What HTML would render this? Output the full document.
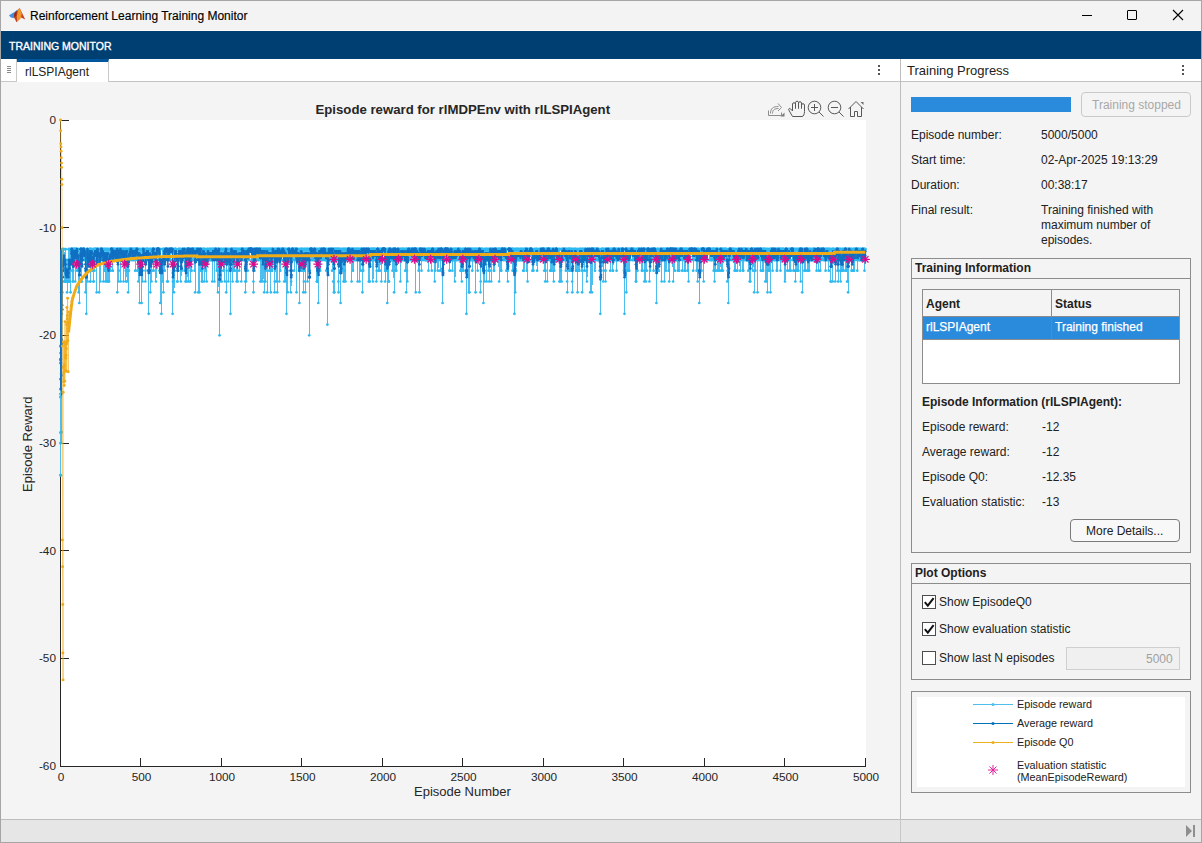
<!DOCTYPE html>
<html><head><meta charset="utf-8">
<style>
*{margin:0;padding:0;box-sizing:border-box}
html,body{width:1202px;height:843px;overflow:hidden;background:#f4f4f4;font-family:"Liberation Sans",sans-serif;color:#212121}
.a{position:absolute}
.t{position:absolute;white-space:nowrap;font-size:12px;line-height:14px}
.b{font-weight:bold}
.box{position:absolute;border:1px solid #8c8c8c}
.cb{position:absolute;width:14px;height:14px;border:1px solid #4d4d4d;background:#fff}
</style></head><body>
<!-- window frame -->
<div class="a" style="left:0;top:0;width:1202px;height:843px;border:1px solid #a6a6a6;background:#f4f4f4"></div>
<!-- title bar -->
<div class="a" style="left:1px;top:1px;width:1200px;height:29px;background:#f3f3f3"></div>
<div class="a" style="left:1px;top:30px;width:1200px;height:1px;background:#fbfbfb"></div>
<svg class="a" style="left:6px;top:4px" width="22" height="22" viewBox="0 0 22 22">
 <path d="M3 11.3 L8.5 8 L11.5 5.5 L9.5 11.5 L7.5 14.2 L4.5 13.2 Z" fill="#3f90e2"/>
 <path d="M8.3 9.6 L13.6 3.9 L16.2 9.2 L19.2 15.6 L15.2 13.6 L10.6 18.2 L8.2 13.8 Z" fill="#c4401e"/>
 <path d="M12 5.8 L13.6 3.9 L15.8 9.4 L15 13.8 L11.2 17.6 L10.8 12.5 Z" fill="#f0982c"/>
 <path d="M8.3 9.6 L11 7 L10 12 L8.2 13.8 Z" fill="#8e2a1a"/>
</svg>
<div class="t" style="left:30px;top:9px;color:#000;-webkit-text-stroke:0.15px #000">Reinforcement Learning Training Monitor</div>
<!-- window controls -->
<div class="a" style="left:1082px;top:15px;width:10px;height:1px;background:#000"></div>
<div class="a" style="left:1127px;top:10px;width:10px;height:10px;border:1px solid #000;border-radius:1px"></div>
<svg class="a" style="left:1172px;top:9px" width="12" height="12" viewBox="0 0 12 12"><path d="M1 1L11 11M11 1L1 11" stroke="#000" stroke-width="1.1"/></svg>
<!-- toolstrip band -->
<div class="a" style="left:1px;top:31px;width:1200px;height:28px;background:#003f72"></div>
<div class="t" style="left:9px;top:39px;font-size:10.5px;color:#fff;-webkit-text-stroke:0.35px #fff">TRAINING MONITOR</div>

<!-- LEFT DOCUMENT AREA -->
<div class="a" style="left:1px;top:59px;width:899px;height:23px;background:#fff;border-bottom:1px solid #c4c4c4"></div>
<div class="a" style="left:1px;top:59px;width:16px;height:23px;background:#fff;border-right:1px solid #c8c8c8;border-bottom:1px solid #c8c8c8"></div>
<div class="a" style="left:7px;top:66px;width:4px;height:1px;background:#8a8a8a;box-shadow:0 2px 0 #8a8a8a,0 4px 0 #8a8a8a,0 6px 0 #8a8a8a"></div>
<div class="a" style="left:17px;top:59px;width:92px;height:23px;background:#fff;border-top:3px solid #00569c;border-right:1px solid #c8c8c8"></div>
<div class="t" style="left:25px;top:65px;color:#222">rlLSPIAgent</div>
<div class="a" style="left:878px;top:65px;width:2px;height:2px;background:#555;box-shadow:0 4px 0 #555,0 8px 0 #555"></div>

<!-- divider between left & right -->
<div class="a" style="left:900px;top:59px;width:1px;height:783px;background:#bdbdbd"></div>

<!-- RIGHT PANEL -->
<div class="a" style="left:901px;top:59px;width:300px;height:23px;background:#fff;border-bottom:1px solid #c4c4c4"></div>
<div class="t" style="left:907px;top:64px;font-size:13px;color:#222">Training Progress</div>
<div class="a" style="left:1182px;top:65px;width:2px;height:2px;background:#555;box-shadow:0 4px 0 #555,0 8px 0 #555"></div>

<div class="a" style="left:911px;top:97px;width:160px;height:15px;background:#2a8bdd"></div>
<div class="a" style="left:1081px;top:92px;width:110px;height:25px;border:1px solid #c9c9c9;border-radius:4px;background:#f4f4f4"></div>
<div class="t" style="left:1092px;top:98px;color:#a8a8a8">Training stopped</div>

<div class="t" style="left:911px;top:128px">Episode number:</div>
<div class="t" style="left:1041px;top:128px">5000/5000</div>
<div class="t" style="left:911px;top:153px">Start time:</div>
<div class="t" style="left:1041px;top:153px">02-Apr-2025 19:13:29</div>
<div class="t" style="left:911px;top:178px">Duration:</div>
<div class="t" style="left:1041px;top:178px">00:38:17</div>
<div class="t" style="left:911px;top:203px">Final result:</div>
<div class="t" style="left:1041px;top:203px;line-height:15px">Training finished with<br>maximum number of<br>episodes.</div>

<!-- Training Information box -->
<div class="box" style="left:911px;top:258px;width:280px;height:295px"></div>
<div class="a" style="left:912px;top:278px;width:278px;height:1px;background:#8c8c8c"></div>
<div class="t b" style="left:915px;top:261px">Training Information</div>
<!-- table -->
<div class="a" style="left:922px;top:289px;width:258px;height:95px;border:1px solid #8c8c8c;background:#fff"></div>
<div class="a" style="left:923px;top:290px;width:256px;height:27px;background:#f4f4f4;border-bottom:1px solid #8c8c8c"></div>
<div class="a" style="left:1051px;top:290px;width:1px;height:49px;background:#8c8c8c"></div>
<div class="a" style="left:923px;top:317px;width:256px;height:22px;background:#2a8bdd"></div>
<div class="a" style="left:1051px;top:317px;width:1px;height:22px;background:#6d8499"></div>
<div class="a" style="left:923px;top:339px;width:256px;height:1px;background:#8c8c8c"></div>
<div class="t b" style="left:926px;top:297px">Agent</div>
<div class="t b" style="left:1055px;top:297px">Status</div>
<div class="t" style="left:926px;top:320px;color:#fff;-webkit-text-stroke:0.25px #fff">rlLSPIAgent</div>
<div class="t" style="left:1055px;top:320px;color:#fff;-webkit-text-stroke:0.25px #fff">Training finished</div>

<div class="t b" style="left:922px;top:395px">Episode Information (rlLSPIAgent):</div>
<div class="t" style="left:922px;top:420px">Episode reward:</div>
<div class="t" style="left:1042px;top:420px">-12</div>
<div class="t" style="left:922px;top:445px">Average reward:</div>
<div class="t" style="left:1042px;top:445px">-12</div>
<div class="t" style="left:922px;top:470px">Episode Q0:</div>
<div class="t" style="left:1042px;top:470px">-12.35</div>
<div class="t" style="left:922px;top:495px">Evaluation statistic:</div>
<div class="t" style="left:1042px;top:495px">-13</div>
<div class="a" style="left:1070px;top:519px;width:110px;height:23px;border:1px solid #7a7a7a;border-radius:4px;background:#f8f8f8"></div>
<div class="t" style="left:1086px;top:524px">More Details...</div>

<!-- Plot Options box -->
<div class="box" style="left:911px;top:563px;width:280px;height:117px"></div>
<div class="a" style="left:912px;top:583px;width:278px;height:1px;background:#8c8c8c"></div>
<div class="t b" style="left:915px;top:566px">Plot Options</div>
<div class="cb" style="left:922px;top:595px"></div>
<svg class="a" style="left:922px;top:595px" width="14" height="14"><path d="M2.8 7.2 L5.8 10.6 L11.6 3.2" stroke="#111" stroke-width="2" fill="none"/></svg>
<div class="t" style="left:939px;top:595px">Show EpisodeQ0</div>
<div class="cb" style="left:922px;top:622px"></div>
<svg class="a" style="left:922px;top:622px" width="14" height="14"><path d="M2.8 7.2 L5.8 10.6 L11.6 3.2" stroke="#111" stroke-width="2" fill="none"/></svg>
<div class="t" style="left:939px;top:622px">Show evaluation statistic</div>
<div class="cb" style="left:922px;top:651px"></div>
<div class="t" style="left:939px;top:651px">Show last N episodes</div>
<div class="a" style="left:1066px;top:647px;width:114px;height:23px;border:1px solid #cfcfcf;background:#f0f0f0"></div>
<div class="t" style="left:1146px;top:652px;color:#a0a0a0">5000</div>

<!-- Legend box -->
<div class="box" style="left:911px;top:691px;width:280px;height:102px;border-color:#8c8c8c"></div>
<div class="a" style="left:917px;top:697px;width:268px;height:90px;background:#fff"></div>
<svg class="a" style="left:960px;top:697px" width="60" height="89">
 <line x1="13" y1="7.5" x2="53" y2="7.5" stroke="#4dbeee" stroke-width="1"/><circle cx="33" cy="7.5" r="1.6" fill="#4dbeee"/>
 <line x1="13" y1="26.5" x2="53" y2="26.5" stroke="#0072bd" stroke-width="1"/><circle cx="33" cy="26.5" r="1.6" fill="#0072bd"/>
 <line x1="13" y1="45.5" x2="53" y2="45.5" stroke="#edb120" stroke-width="1"/><circle cx="33" cy="45.5" r="1.6" fill="#edb120"/>
 <g stroke="#e0249b" stroke-width="1" transform="translate(33,73)"><line x1="-5" y1="0" x2="5" y2="0"/><line x1="0" y1="-5" x2="0" y2="5"/><line x1="-3.5" y1="-3.5" x2="3.5" y2="3.5"/><line x1="-3.5" y1="3.5" x2="3.5" y2="-3.5"/></g>
</svg>
<div class="t" style="left:1017px;top:697px;font-size:10.8px">Episode reward</div>
<div class="t" style="left:1017px;top:716px;font-size:10.8px">Average reward</div>
<div class="t" style="left:1017px;top:735px;font-size:10.8px">Episode Q0</div>
<div class="t" style="left:1017px;top:759px;font-size:10.8px;line-height:12px">Evaluation statistic<br>(MeanEpisodeReward)</div>

<!-- status bar -->
<div class="a" style="left:1px;top:819px;width:1200px;height:1px;background:#bdbdbd"></div>
<div class="a" style="left:1px;top:820px;width:1200px;height:22px;background:#e6e6e6"></div>
<div class="a" style="left:900px;top:819px;width:1px;height:23px;background:#c8c8c8"></div>
<svg class="a" style="left:1185px;top:824px" width="12" height="14"><path d="M1 1 L7 7 L1 13 Z" fill="#8f8f8f"/><rect x="8" y="1" width="2" height="12" fill="#8f8f8f"/></svg>
<!-- window bottom/right border -->
<div class="a" style="left:0;top:842px;width:1202px;height:1px;background:#a6a6a6"></div>
<div class="a" style="left:1201px;top:0;width:1px;height:843px;background:#a6a6a6"></div>

<svg class="a" style="left:0;top:0" width="900" height="819" viewBox="0 0 900 819">
<defs>
<marker id="mlb" markerUnits="userSpaceOnUse" markerWidth="4" markerHeight="4" refX="2" refY="2"><circle cx="2" cy="2" r="1.35" fill="#2fbaf0"/></marker>
<marker id="mdb" markerUnits="userSpaceOnUse" markerWidth="4" markerHeight="4" refX="2" refY="2"><circle cx="2" cy="2" r="1.35" fill="#1170c2"/></marker>
<marker id="my" markerUnits="userSpaceOnUse" markerWidth="4" markerHeight="4" refX="2" refY="2"><circle cx="2" cy="2" r="1.45" fill="#f0ab18"/></marker>
</defs>
<rect x="61" y="120" width="805" height="646" fill="#fff"/>
<g stroke="#262626" stroke-width="1" fill="none" shape-rendering="crispEdges">
<path d="M60.5 120V766.5H866"/>
<path d="M60.5 766V758"/>
<path d="M140.5 766V758"/>
<path d="M221.5 766V758"/>
<path d="M301.5 766V758"/>
<path d="M382.5 766V758"/>
<path d="M462.5 766V758"/>
<path d="M543.5 766V758"/>
<path d="M623.5 766V758"/>
<path d="M704.5 766V758"/>
<path d="M784.5 766V758"/>
<path d="M865.5 766V758"/>
<path d="M61 120.5H69"/>
<path d="M61 227.5H69"/>
<path d="M61 335.5H69"/>
<path d="M61 443.5H69"/>
<path d="M61 550.5H69"/>
<path d="M61 658.5H69"/>
<path d="M61 766.5H69"/>
</g>
<polyline fill="none" stroke="#4dbeee" stroke-width="1" shape-rendering="crispEdges" marker-start="url(#mlb)" marker-mid="url(#mlb)" marker-end="url(#mlb)" points="60.5,346.1 60.7,360.1 60.8,475.3 61.0,396.7 61.1,292.3 61.3,443.0 61.5,270.7 61.6,432.2 61.8,260.0 61.9,313.8 62.1,249.2 62.3,292.3 62.4,270.7 62.6,260.0 62.8,281.5 62.9,249.2 63.1,270.7 63.2,260.0 63.4,249.2 63.6,270.7 63.7,260.0 63.9,249.2 64.0,249.2 64.2,281.5 64.4,260.0 64.5,260.0 64.7,260.0 64.8,260.0 65.0,260.0 65.2,281.5 65.3,260.0 65.5,281.5 65.7,281.5 65.8,249.2 66.0,281.5 66.1,281.5 66.3,281.5 66.5,260.0 66.6,281.5 66.8,270.7 66.9,260.0 67.1,292.3 67.3,270.7 67.4,260.0 67.6,270.7 67.7,270.7 67.9,281.5 68.1,270.7 68.2,281.5 68.4,281.5 68.6,249.2 68.7,260.0 68.9,249.2 69.0,260.0 69.2,281.5 69.4,270.7 69.5,249.2 69.7,260.0 69.8,281.5 70.0,249.2 70.2,260.0 70.3,260.0 70.5,249.2 70.6,292.3 70.8,260.0 71.0,260.0 71.1,249.2 71.3,249.2 71.4,249.2 71.6,249.2 71.8,249.2 71.9,249.2 72.1,270.7 72.3,260.0 72.4,249.2 72.6,249.2 72.7,281.5 72.9,249.2 73.1,270.7 73.2,281.5 73.4,249.2 73.5,249.2 73.7,260.0 73.9,249.2 74.0,249.2 74.2,249.2 74.3,260.0 74.5,249.2 74.7,249.2 74.8,249.2 75.0,249.2 75.2,281.5 75.3,249.2 75.5,249.2 75.6,260.0 75.8,249.2 76.0,260.0 76.1,260.0 76.3,249.2 76.4,249.2 76.6,249.2 76.8,249.2 76.9,249.2 77.1,260.0 77.2,270.7 77.4,260.0 77.6,270.7 77.7,260.0 77.9,249.2 78.0,260.0 78.2,260.0 78.4,249.2 78.5,260.0 78.7,292.3 78.9,260.0 79.0,249.2 79.2,270.7 79.3,303.0 79.5,260.0 79.7,270.7 79.8,270.7 80.0,270.7 80.1,249.2 80.3,249.2 80.5,249.2 80.6,249.2 80.8,249.2 80.9,249.2 81.1,249.2 81.3,249.2 81.4,281.5 81.6,260.0 81.8,281.5 81.9,249.2 82.1,260.0 82.2,249.2 82.4,260.0 82.6,260.0 82.7,249.2 82.9,249.2 83.0,249.2 83.2,249.2 83.4,249.2 83.5,249.2 83.7,249.2 83.8,249.2 84.0,260.0 84.2,249.2 84.3,249.2 84.5,260.0 84.6,249.2 84.8,249.2 85.0,260.0 85.1,260.0 85.3,260.0 85.5,292.3 85.6,270.7 85.8,260.0 85.9,270.7 86.1,270.7 86.3,313.8 86.4,270.7 86.6,260.0 86.7,260.0 86.9,249.2 87.1,249.2 87.2,249.2 87.4,249.2 87.5,249.2 87.7,281.5 87.9,270.7 88.0,260.0 88.2,260.0 88.4,260.0 88.5,260.0 88.7,260.0 88.8,260.0 89.0,249.2 89.2,260.0 89.3,249.2 89.5,249.2 89.6,249.2 89.8,260.0 90.0,260.0 90.1,249.2 90.3,281.5 90.4,281.5 90.6,249.2 90.8,249.2 90.9,249.2 91.1,260.0 91.3,249.2 91.4,249.2 91.6,260.0 91.7,249.2 91.9,260.0 92.1,270.7 92.2,260.0 92.4,260.0 92.5,260.0 92.7,260.0 92.9,260.0 93.0,249.2 93.2,260.0 93.3,260.0 93.5,281.5 93.7,281.5 93.8,249.2 94.0,249.2 94.1,249.2 94.3,249.2 94.5,270.7 94.6,249.2 94.8,249.2 95.0,249.2 95.1,260.0 95.3,249.2 95.4,249.2 95.6,249.2 95.8,260.0 95.9,249.2 96.1,260.0 96.2,260.0 96.4,249.2 96.6,260.0 96.7,292.3 96.9,249.2 97.0,249.2 97.2,249.2 97.4,249.2 97.5,249.2 97.7,260.0 97.9,260.0 98.0,249.2 98.2,260.0 98.3,249.2 98.5,260.0 98.7,249.2 98.8,260.0 99.0,260.0 99.1,292.3 99.3,260.0 99.5,249.2 99.6,249.2 99.8,260.0 99.9,260.0 100.1,249.2 100.3,249.2 100.4,281.5 100.6,249.2 100.8,249.2 100.9,249.2 101.1,249.2 101.2,249.2 101.4,249.2 101.6,249.2 101.7,260.0 101.9,249.2 102.0,249.2 102.2,249.2 102.4,249.2 102.5,260.0 102.7,260.0 102.8,249.2 103.0,249.2 103.2,260.0 103.3,281.5 103.5,249.2 103.6,260.0 103.8,260.0 104.0,249.2 104.1,249.2 104.3,260.0 104.5,249.2 104.6,260.0 104.8,270.7 104.9,270.7 105.1,249.2 105.3,249.2 105.4,281.5 105.6,249.2 105.7,249.2 105.9,260.0 106.1,249.2 106.2,260.0 106.4,260.0 106.5,260.0 106.7,281.5 106.9,249.2 107.0,260.0 107.2,249.2 107.4,249.2 107.5,260.0 107.7,249.2 107.8,260.0 108.0,281.5 108.2,281.5 108.3,270.7 108.5,249.2 108.6,270.7 108.8,249.2 109.0,260.0 109.1,281.5 109.3,249.2 109.4,260.0 109.6,260.0 109.8,260.0 109.9,249.2 110.1,260.0 110.2,249.2 110.4,260.0 110.6,270.7 110.7,249.2 110.9,249.2 111.1,249.2 111.2,249.2 111.4,249.2 111.5,249.2 111.7,249.2 111.9,249.2 112.0,249.2 112.2,260.0 112.3,249.2 112.5,249.2 112.7,270.7 112.8,270.7 113.0,249.2 113.1,249.2 113.3,260.0 113.5,249.2 113.6,249.2 113.8,249.2 114.0,260.0 114.1,249.2 114.3,249.2 114.4,249.2 114.6,260.0 114.8,249.2 114.9,249.2 115.1,260.0 115.2,260.0 115.4,249.2 115.6,260.0 115.7,260.0 115.9,260.0 116.0,249.2 116.2,260.0 116.4,260.0 116.5,249.2 116.7,249.2 116.8,249.2 117.0,249.2 117.2,249.2 117.3,292.3 117.5,260.0 117.7,260.0 117.8,249.2 118.0,260.0 118.1,249.2 118.3,249.2 118.5,249.2 118.6,281.5 118.8,270.7 118.9,249.2 119.1,249.2 119.3,249.2 119.4,249.2 119.6,260.0 119.7,249.2 119.9,249.2 120.1,249.2 120.2,249.2 120.4,249.2 120.6,260.0 120.7,281.5 120.9,260.0 121.0,249.2 121.2,249.2 121.4,249.2 121.5,260.0 121.7,249.2 121.8,260.0 122.0,249.2 122.2,260.0 122.3,260.0 122.5,249.2 122.6,249.2 122.8,249.2 123.0,249.2 123.1,260.0 123.3,260.0 123.5,281.5 123.6,249.2 123.8,249.2 123.9,249.2 124.1,260.0 124.3,260.0 124.4,249.2 124.6,260.0 124.7,260.0 124.9,249.2 125.1,260.0 125.2,249.2 125.4,249.2 125.5,249.2 125.7,270.7 125.9,260.0 126.0,281.5 126.2,249.2 126.3,249.2 126.5,260.0 126.7,249.2 126.8,249.2 127.0,249.2 127.2,281.5 127.3,260.0 127.5,260.0 127.6,270.7 127.8,249.2 128.0,260.0 128.1,292.3 128.3,249.2 128.4,260.0 128.6,249.2 128.8,249.2 128.9,270.7 129.1,249.2 129.2,260.0 129.4,249.2 129.6,249.2 129.7,260.0 129.9,249.2 130.1,260.0 130.2,249.2 130.4,249.2 130.5,249.2 130.7,249.2 130.9,249.2 131.0,249.2 131.2,260.0 131.3,249.2 131.5,249.2 131.7,249.2 131.8,249.2 132.0,260.0 132.1,249.2 132.3,260.0 132.5,260.0 132.6,249.2 132.8,249.2 133.0,249.2 133.1,249.2 133.3,260.0 133.4,249.2 133.6,260.0 133.8,260.0 133.9,249.2 134.1,249.2 134.2,249.2 134.4,249.2 134.6,260.0 134.7,249.2 134.9,249.2 135.0,249.2 135.2,270.7 135.4,249.2 135.5,249.2 135.7,249.2 135.8,249.2 136.0,260.0 136.2,249.2 136.3,249.2 136.5,249.2 136.7,249.2 136.8,249.2 137.0,249.2 137.1,249.2 137.3,270.7 137.5,249.2 137.6,249.2 137.8,260.0 137.9,260.0 138.1,260.0 138.3,281.5 138.4,249.2 138.6,260.0 138.7,260.0 138.9,249.2 139.1,249.2 139.2,249.2 139.4,270.7 139.6,270.7 139.7,303.0 139.9,270.7 140.0,260.0 140.2,260.0 140.4,270.7 140.5,249.2 140.7,249.2 140.8,260.0 141.0,249.2 141.2,270.7 141.3,270.7 141.5,270.7 141.6,303.0 141.8,260.0 142.0,249.2 142.1,270.7 142.3,249.2 142.4,249.2 142.6,281.5 142.8,249.2 142.9,249.2 143.1,249.2 143.3,249.2 143.4,249.2 143.6,260.0 143.7,260.0 143.9,260.0 144.1,249.2 144.2,249.2 144.4,260.0 144.5,249.2 144.7,260.0 144.9,260.0 145.0,249.2 145.2,260.0 145.3,281.5 145.5,270.7 145.7,249.2 145.8,260.0 146.0,249.2 146.2,249.2 146.3,260.0 146.5,249.2 146.6,260.0 146.8,249.2 147.0,249.2 147.1,249.2 147.3,249.2 147.4,260.0 147.6,249.2 147.8,260.0 147.9,249.2 148.1,249.2 148.2,270.7 148.4,270.7 148.6,249.2 148.7,313.8 148.9,260.0 149.0,270.7 149.2,260.0 149.4,249.2 149.5,260.0 149.7,260.0 149.9,249.2 150.0,249.2 150.2,260.0 150.3,292.3 150.5,270.7 150.7,249.2 150.8,249.2 151.0,270.7 151.1,260.0 151.3,249.2 151.5,281.5 151.6,249.2 151.8,260.0 151.9,270.7 152.1,249.2 152.3,260.0 152.4,249.2 152.6,249.2 152.8,249.2 152.9,249.2 153.1,249.2 153.2,249.2 153.4,249.2 153.6,249.2 153.7,270.7 153.9,249.2 154.0,249.2 154.2,260.0 154.4,260.0 154.5,260.0 154.7,260.0 154.8,249.2 155.0,249.2 155.2,249.2 155.3,260.0 155.5,260.0 155.7,249.2 155.8,249.2 156.0,281.5 156.1,260.0 156.3,260.0 156.5,260.0 156.6,249.2 156.8,249.2 156.9,249.2 157.1,249.2 157.3,249.2 157.4,249.2 157.6,249.2 157.7,249.2 157.9,249.2 158.1,249.2 158.2,249.2 158.4,249.2 158.5,249.2 158.7,249.2 158.9,249.2 159.0,260.0 159.2,249.2 159.4,260.0 159.5,249.2 159.7,270.7 159.8,270.7 160.0,249.2 160.2,303.0 160.3,270.7 160.5,260.0 160.6,260.0 160.8,249.2 161.0,260.0 161.1,270.7 161.3,260.0 161.4,313.8 161.6,260.0 161.8,260.0 161.9,260.0 162.1,260.0 162.3,260.0 162.4,260.0 162.6,281.5 162.7,249.2 162.9,249.2 163.1,249.2 163.2,260.0 163.4,292.3 163.5,249.2 163.7,249.2 163.9,249.2 164.0,249.2 164.2,260.0 164.3,260.0 164.5,270.7 164.7,270.7 164.8,260.0 165.0,249.2 165.2,249.2 165.3,249.2 165.5,249.2 165.6,249.2 165.8,249.2 166.0,249.2 166.1,260.0 166.3,249.2 166.4,249.2 166.6,249.2 166.8,249.2 166.9,249.2 167.1,249.2 167.2,281.5 167.4,260.0 167.6,260.0 167.7,249.2 167.9,281.5 168.0,249.2 168.2,260.0 168.4,249.2 168.5,249.2 168.7,260.0 168.9,249.2 169.0,249.2 169.2,249.2 169.3,249.2 169.5,249.2 169.7,260.0 169.8,249.2 170.0,249.2 170.1,249.2 170.3,249.2 170.5,249.2 170.6,249.2 170.8,249.2 170.9,260.0 171.1,249.2 171.3,249.2 171.4,249.2 171.6,249.2 171.8,249.2 171.9,249.2 172.1,249.2 172.2,249.2 172.4,260.0 172.6,313.8 172.7,260.0 172.9,281.5 173.0,270.7 173.2,249.2 173.4,281.5 173.5,260.0 173.7,249.2 173.8,270.7 174.0,292.3 174.2,260.0 174.3,260.0 174.5,249.2 174.6,270.7 174.8,249.2 175.0,249.2 175.1,249.2 175.3,260.0 175.5,249.2 175.6,249.2 175.8,260.0 175.9,249.2 176.1,249.2 176.3,260.0 176.4,260.0 176.6,260.0 176.7,260.0 176.9,260.0 177.1,260.0 177.2,281.5 177.4,260.0 177.5,281.5 177.7,270.7 177.9,260.0 178.0,260.0 178.2,260.0 178.4,249.2 178.5,260.0 178.7,249.2 178.8,249.2 179.0,249.2 179.2,260.0 179.3,260.0 179.5,249.2 179.6,260.0 179.8,260.0 180.0,249.2 180.1,249.2 180.3,249.2 180.4,249.2 180.6,260.0 180.8,270.7 180.9,281.5 181.1,270.7 181.2,260.0 181.4,260.0 181.6,270.7 181.7,249.2 181.9,260.0 182.1,260.0 182.2,249.2 182.4,249.2 182.5,249.2 182.7,249.2 182.9,249.2 183.0,260.0 183.2,260.0 183.3,249.2 183.5,260.0 183.7,260.0 183.8,249.2 184.0,249.2 184.1,249.2 184.3,249.2 184.5,249.2 184.6,270.7 184.8,249.2 185.0,249.2 185.1,260.0 185.3,249.2 185.4,270.7 185.6,281.5 185.8,270.7 185.9,281.5 186.1,260.0 186.2,249.2 186.4,260.0 186.6,249.2 186.7,249.2 186.9,249.2 187.0,281.5 187.2,249.2 187.4,249.2 187.5,249.2 187.7,249.2 187.9,249.2 188.0,249.2 188.2,249.2 188.3,249.2 188.5,249.2 188.7,249.2 188.8,281.5 189.0,260.0 189.1,260.0 189.3,260.0 189.5,249.2 189.6,249.2 189.8,249.2 189.9,249.2 190.1,249.2 190.3,281.5 190.4,260.0 190.6,270.7 190.7,249.2 190.9,249.2 191.1,249.2 191.2,249.2 191.4,260.0 191.6,270.7 191.7,249.2 191.9,249.2 192.0,249.2 192.2,249.2 192.4,249.2 192.5,249.2 192.7,249.2 192.8,260.0 193.0,249.2 193.2,249.2 193.3,249.2 193.5,260.0 193.6,249.2 193.8,260.0 194.0,249.2 194.1,249.2 194.3,249.2 194.5,249.2 194.6,270.7 194.8,249.2 194.9,249.2 195.1,292.3 195.3,249.2 195.4,260.0 195.6,249.2 195.7,260.0 195.9,249.2 196.1,249.2 196.2,249.2 196.4,249.2 196.5,260.0 196.7,249.2 196.9,249.2 197.0,249.2 197.2,249.2 197.4,249.2 197.5,260.0 197.7,249.2 197.8,249.2 198.0,249.2 198.2,292.3 198.3,249.2 198.5,249.2 198.6,249.2 198.8,249.2 199.0,249.2 199.1,260.0 199.3,260.0 199.4,292.3 199.6,260.0 199.8,249.2 199.9,249.2 200.1,249.2 200.2,249.2 200.4,249.2 200.6,249.2 200.7,270.7 200.9,260.0 201.1,249.2 201.2,249.2 201.4,249.2 201.5,270.7 201.7,260.0 201.9,281.5 202.0,249.2 202.2,260.0 202.3,270.7 202.5,281.5 202.7,249.2 202.8,249.2 203.0,260.0 203.1,249.2 203.3,249.2 203.5,249.2 203.6,260.0 203.8,260.0 204.0,260.0 204.1,249.2 204.3,281.5 204.4,249.2 204.6,249.2 204.8,249.2 204.9,260.0 205.1,260.0 205.2,260.0 205.4,260.0 205.6,260.0 205.7,260.0 205.9,249.2 206.0,270.7 206.2,260.0 206.4,249.2 206.5,260.0 206.7,260.0 206.8,281.5 207.0,260.0 207.2,260.0 207.3,249.2 207.5,249.2 207.7,249.2 207.8,260.0 208.0,249.2 208.1,260.0 208.3,260.0 208.5,249.2 208.6,260.0 208.8,260.0 208.9,260.0 209.1,249.2 209.3,260.0 209.4,249.2 209.6,260.0 209.7,249.2 209.9,260.0 210.1,249.2 210.2,260.0 210.4,249.2 210.6,249.2 210.7,260.0 210.9,260.0 211.0,249.2 211.2,249.2 211.4,260.0 211.5,260.0 211.7,260.0 211.8,249.2 212.0,249.2 212.2,249.2 212.3,281.5 212.5,260.0 212.6,249.2 212.8,260.0 213.0,249.2 213.1,249.2 213.3,249.2 213.4,249.2 213.6,260.0 213.8,260.0 213.9,249.2 214.1,249.2 214.3,260.0 214.4,281.5 214.6,249.2 214.7,249.2 214.9,260.0 215.1,249.2 215.2,249.2 215.4,249.2 215.5,249.2 215.7,249.2 215.9,249.2 216.0,260.0 216.2,249.2 216.3,249.2 216.5,249.2 216.7,260.0 216.8,270.7 217.0,260.0 217.2,260.0 217.3,249.2 217.5,249.2 217.6,249.2 217.8,249.2 218.0,292.3 218.1,260.0 218.3,249.2 218.4,249.2 218.6,249.2 218.8,249.2 218.9,249.2 219.1,270.7 219.2,270.7 219.4,270.7 219.6,335.3 219.7,249.2 219.9,249.2 220.1,270.7 220.2,249.2 220.4,281.5 220.5,260.0 220.7,249.2 220.9,260.0 221.0,260.0 221.2,249.2 221.3,249.2 221.5,249.2 221.7,281.5 221.8,249.2 222.0,260.0 222.1,260.0 222.3,260.0 222.5,260.0 222.6,249.2 222.8,260.0 222.9,260.0 223.1,249.2 223.3,270.7 223.4,249.2 223.6,260.0 223.8,249.2 223.9,260.0 224.1,249.2 224.2,260.0 224.4,249.2 224.6,260.0 224.7,260.0 224.9,281.5 225.0,249.2 225.2,260.0 225.4,249.2 225.5,249.2 225.7,249.2 225.8,249.2 226.0,249.2 226.2,292.3 226.3,260.0 226.5,249.2 226.7,270.7 226.8,249.2 227.0,260.0 227.1,260.0 227.3,260.0 227.5,249.2 227.6,249.2 227.8,249.2 227.9,260.0 228.1,260.0 228.3,281.5 228.4,260.0 228.6,249.2 228.7,249.2 228.9,260.0 229.1,260.0 229.2,249.2 229.4,260.0 229.6,260.0 229.7,260.0 229.9,270.7 230.0,270.7 230.2,249.2 230.4,249.2 230.5,313.8 230.7,260.0 230.8,249.2 231.0,249.2 231.2,249.2 231.3,249.2 231.5,249.2 231.6,260.0 231.8,260.0 232.0,249.2 232.1,249.2 232.3,249.2 232.4,249.2 232.6,281.5 232.8,249.2 232.9,249.2 233.1,260.0 233.3,270.7 233.4,249.2 233.6,260.0 233.7,260.0 233.9,249.2 234.1,249.2 234.2,249.2 234.4,249.2 234.5,260.0 234.7,249.2 234.9,270.7 235.0,249.2 235.2,249.2 235.3,249.2 235.5,249.2 235.7,260.0 235.8,260.0 236.0,249.2 236.2,260.0 236.3,249.2 236.5,249.2 236.6,281.5 236.8,249.2 237.0,260.0 237.1,270.7 237.3,249.2 237.4,249.2 237.6,249.2 237.8,281.5 237.9,260.0 238.1,260.0 238.2,260.0 238.4,249.2 238.6,260.0 238.7,249.2 238.9,260.0 239.0,249.2 239.2,270.7 239.4,249.2 239.5,249.2 239.7,260.0 239.9,260.0 240.0,249.2 240.2,260.0 240.3,249.2 240.5,249.2 240.7,260.0 240.8,249.2 241.0,260.0 241.1,249.2 241.3,281.5 241.5,249.2 241.6,249.2 241.8,249.2 241.9,249.2 242.1,249.2 242.3,249.2 242.4,260.0 242.6,260.0 242.8,249.2 242.9,249.2 243.1,249.2 243.2,249.2 243.4,260.0 243.6,260.0 243.7,249.2 243.9,249.2 244.0,249.2 244.2,260.0 244.4,249.2 244.5,249.2 244.7,260.0 244.8,260.0 245.0,249.2 245.2,281.5 245.3,292.3 245.5,249.2 245.6,270.7 245.8,260.0 246.0,249.2 246.1,281.5 246.3,249.2 246.5,249.2 246.6,249.2 246.8,260.0 246.9,249.2 247.1,249.2 247.3,260.0 247.4,260.0 247.6,249.2 247.7,270.7 247.9,249.2 248.1,260.0 248.2,249.2 248.4,249.2 248.5,249.2 248.7,249.2 248.9,249.2 249.0,249.2 249.2,249.2 249.4,260.0 249.5,249.2 249.7,249.2 249.8,249.2 250.0,249.2 250.2,249.2 250.3,249.2 250.5,249.2 250.6,249.2 250.8,249.2 251.0,249.2 251.1,249.2 251.3,249.2 251.4,249.2 251.6,249.2 251.8,249.2 251.9,260.0 252.1,249.2 252.3,260.0 252.4,249.2 252.6,249.2 252.7,249.2 252.9,260.0 253.1,260.0 253.2,260.0 253.4,281.5 253.5,292.3 253.7,249.2 253.9,249.2 254.0,249.2 254.2,249.2 254.3,249.2 254.5,270.7 254.7,249.2 254.8,260.0 255.0,260.0 255.1,260.0 255.3,249.2 255.5,249.2 255.6,249.2 255.8,249.2 256.0,249.2 256.1,249.2 256.3,249.2 256.4,260.0 256.6,249.2 256.8,249.2 256.9,249.2 257.1,260.0 257.2,249.2 257.4,249.2 257.6,249.2 257.7,249.2 257.9,249.2 258.0,249.2 258.2,260.0 258.4,260.0 258.5,249.2 258.7,260.0 258.9,249.2 259.0,249.2 259.2,249.2 259.3,249.2 259.5,249.2 259.7,249.2 259.8,260.0 260.0,249.2 260.1,249.2 260.3,281.5 260.5,249.2 260.6,249.2 260.8,260.0 260.9,249.2 261.1,281.5 261.3,249.2 261.4,249.2 261.6,249.2 261.8,249.2 261.9,260.0 262.1,249.2 262.2,249.2 262.4,260.0 262.6,260.0 262.7,260.0 262.9,260.0 263.0,281.5 263.2,249.2 263.4,249.2 263.5,260.0 263.7,249.2 263.8,249.2 264.0,249.2 264.2,292.3 264.3,249.2 264.5,249.2 264.6,249.2 264.8,260.0 265.0,249.2 265.1,281.5 265.3,281.5 265.5,270.7 265.6,249.2 265.8,249.2 265.9,270.7 266.1,260.0 266.3,260.0 266.4,249.2 266.6,260.0 266.7,249.2 266.9,249.2 267.1,249.2 267.2,292.3 267.4,260.0 267.5,249.2 267.7,249.2 267.9,260.0 268.0,249.2 268.2,260.0 268.4,249.2 268.5,260.0 268.7,260.0 268.8,249.2 269.0,249.2 269.2,270.7 269.3,249.2 269.5,249.2 269.6,260.0 269.8,249.2 270.0,260.0 270.1,249.2 270.3,249.2 270.4,270.7 270.6,249.2 270.8,249.2 270.9,292.3 271.1,249.2 271.2,249.2 271.4,270.7 271.6,249.2 271.7,270.7 271.9,249.2 272.1,270.7 272.2,249.2 272.4,249.2 272.5,249.2 272.7,249.2 272.9,249.2 273.0,260.0 273.2,249.2 273.3,260.0 273.5,260.0 273.7,249.2 273.8,249.2 274.0,249.2 274.1,260.0 274.3,260.0 274.5,249.2 274.6,292.3 274.8,281.5 275.0,249.2 275.1,260.0 275.3,249.2 275.4,249.2 275.6,249.2 275.8,249.2 275.9,260.0 276.1,281.5 276.2,249.2 276.4,260.0 276.6,260.0 276.7,249.2 276.9,249.2 277.0,260.0 277.2,292.3 277.4,249.2 277.5,249.2 277.7,249.2 277.8,249.2 278.0,249.2 278.2,260.0 278.3,249.2 278.5,249.2 278.7,249.2 278.8,249.2 279.0,249.2 279.1,260.0 279.3,281.5 279.5,260.0 279.6,249.2 279.8,260.0 279.9,249.2 280.1,249.2 280.3,270.7 280.4,260.0 280.6,249.2 280.7,249.2 280.9,260.0 281.1,249.2 281.2,249.2 281.4,260.0 281.6,249.2 281.7,249.2 281.9,260.0 282.0,249.2 282.2,249.2 282.4,249.2 282.5,249.2 282.7,249.2 282.8,249.2 283.0,249.2 283.2,260.0 283.3,249.2 283.5,249.2 283.6,249.2 283.8,249.2 284.0,260.0 284.1,281.5 284.3,249.2 284.5,249.2 284.6,260.0 284.8,260.0 284.9,249.2 285.1,249.2 285.3,249.2 285.4,260.0 285.6,270.7 285.7,281.5 285.9,249.2 286.1,249.2 286.2,260.0 286.4,270.7 286.5,313.8 286.7,270.7 286.9,249.2 287.0,270.7 287.2,249.2 287.3,249.2 287.5,260.0 287.7,260.0 287.8,292.3 288.0,249.2 288.2,249.2 288.3,249.2 288.5,249.2 288.6,249.2 288.8,249.2 289.0,249.2 289.1,260.0 289.3,249.2 289.4,249.2 289.6,249.2 289.8,260.0 289.9,249.2 290.1,249.2 290.2,260.0 290.4,260.0 290.6,270.7 290.7,270.7 290.9,292.3 291.1,281.5 291.2,270.7 291.4,260.0 291.5,249.2 291.7,249.2 291.9,249.2 292.0,249.2 292.2,249.2 292.3,249.2 292.5,249.2 292.7,249.2 292.8,260.0 293.0,260.0 293.1,249.2 293.3,249.2 293.5,260.0 293.6,249.2 293.8,249.2 294.0,249.2 294.1,270.7 294.3,249.2 294.4,249.2 294.6,249.2 294.8,249.2 294.9,260.0 295.1,249.2 295.2,249.2 295.4,260.0 295.6,249.2 295.7,249.2 295.9,249.2 296.0,249.2 296.2,249.2 296.4,249.2 296.5,292.3 296.7,249.2 296.8,260.0 297.0,260.0 297.2,249.2 297.3,249.2 297.5,249.2 297.7,260.0 297.8,260.0 298.0,249.2 298.1,260.0 298.3,260.0 298.5,249.2 298.6,249.2 298.8,260.0 298.9,270.7 299.1,260.0 299.3,260.0 299.4,303.0 299.6,249.2 299.7,260.0 299.9,260.0 300.1,249.2 300.2,260.0 300.4,260.0 300.6,249.2 300.7,260.0 300.9,249.2 301.0,249.2 301.2,249.2 301.4,270.7 301.5,249.2 301.7,249.2 301.8,270.7 302.0,249.2 302.2,249.2 302.3,249.2 302.5,270.7 302.6,260.0 302.8,260.0 303.0,260.0 303.1,249.2 303.3,292.3 303.4,249.2 303.6,260.0 303.8,260.0 303.9,281.5 304.1,249.2 304.3,249.2 304.4,249.2 304.6,270.7 304.7,249.2 304.9,260.0 305.1,260.0 305.2,292.3 305.4,260.0 305.5,249.2 305.7,249.2 305.9,249.2 306.0,260.0 306.2,260.0 306.3,249.2 306.5,260.0 306.7,260.0 306.8,249.2 307.0,249.2 307.2,249.2 307.3,260.0 307.5,281.5 307.6,249.2 307.8,260.0 308.0,249.2 308.1,260.0 308.3,260.0 308.4,249.2 308.6,249.2 308.8,260.0 308.9,270.7 309.1,270.7 309.2,335.3 309.4,249.2 309.6,260.0 309.7,270.7 309.9,249.2 310.0,249.2 310.2,249.2 310.4,249.2 310.5,249.2 310.7,249.2 310.9,249.2 311.0,249.2 311.2,249.2 311.3,249.2 311.5,249.2 311.7,260.0 311.8,249.2 312.0,260.0 312.1,260.0 312.3,249.2 312.5,249.2 312.6,249.2 312.8,260.0 312.9,249.2 313.1,249.2 313.3,249.2 313.4,260.0 313.6,260.0 313.8,260.0 313.9,249.2 314.1,249.2 314.2,249.2 314.4,249.2 314.6,249.2 314.7,249.2 314.9,249.2 315.0,260.0 315.2,260.0 315.4,260.0 315.5,260.0 315.7,249.2 315.8,260.0 316.0,249.2 316.2,260.0 316.3,249.2 316.5,249.2 316.7,260.0 316.8,281.5 317.0,249.2 317.1,281.5 317.3,281.5 317.5,249.2 317.6,249.2 317.8,260.0 317.9,270.7 318.1,260.0 318.3,303.0 318.4,270.7 318.6,270.7 318.7,249.2 318.9,249.2 319.1,249.2 319.2,249.2 319.4,260.0 319.5,249.2 319.7,260.0 319.9,249.2 320.0,260.0 320.2,270.7 320.4,249.2 320.5,249.2 320.7,260.0 320.8,249.2 321.0,249.2 321.2,249.2 321.3,249.2 321.5,249.2 321.6,260.0 321.8,249.2 322.0,249.2 322.1,249.2 322.3,249.2 322.4,249.2 322.6,260.0 322.8,249.2 322.9,249.2 323.1,260.0 323.3,249.2 323.4,249.2 323.6,249.2 323.7,249.2 323.9,249.2 324.1,249.2 324.2,249.2 324.4,249.2 324.5,260.0 324.7,249.2 324.9,249.2 325.0,260.0 325.2,249.2 325.3,260.0 325.5,260.0 325.7,249.2 325.8,260.0 326.0,249.2 326.2,270.7 326.3,260.0 326.5,249.2 326.6,260.0 326.8,249.2 327.0,249.2 327.1,260.0 327.3,260.0 327.4,324.6 327.6,249.2 327.8,270.7 327.9,270.7 328.1,260.0 328.2,260.0 328.4,260.0 328.6,249.2 328.7,249.2 328.9,249.2 329.0,249.2 329.2,249.2 329.4,260.0 329.5,249.2 329.7,260.0 329.9,249.2 330.0,260.0 330.2,249.2 330.3,260.0 330.5,249.2 330.7,249.2 330.8,249.2 331.0,249.2 331.1,249.2 331.3,260.0 331.5,249.2 331.6,260.0 331.8,249.2 331.9,249.2 332.1,270.7 332.3,249.2 332.4,249.2 332.6,249.2 332.8,249.2 332.9,249.2 333.1,281.5 333.2,249.2 333.4,260.0 333.6,260.0 333.7,249.2 333.9,292.3 334.0,260.0 334.2,249.2 334.4,292.3 334.5,249.2 334.7,249.2 334.8,249.2 335.0,249.2 335.2,260.0 335.3,249.2 335.5,249.2 335.6,249.2 335.8,249.2 336.0,260.0 336.1,260.0 336.3,260.0 336.5,249.2 336.6,249.2 336.8,260.0 336.9,249.2 337.1,249.2 337.3,249.2 337.4,249.2 337.6,260.0 337.7,249.2 337.9,249.2 338.1,249.2 338.2,249.2 338.4,281.5 338.5,292.3 338.7,249.2 338.9,249.2 339.0,260.0 339.2,249.2 339.4,249.2 339.5,260.0 339.7,249.2 339.8,249.2 340.0,249.2 340.2,270.7 340.3,270.7 340.5,270.7 340.6,303.0 340.8,249.2 341.0,270.7 341.1,270.7 341.3,249.2 341.4,260.0 341.6,260.0 341.8,249.2 341.9,249.2 342.1,260.0 342.2,260.0 342.4,249.2 342.6,270.7 342.7,249.2 342.9,260.0 343.1,249.2 343.2,260.0 343.4,249.2 343.5,281.5 343.7,249.2 343.9,249.2 344.0,260.0 344.2,281.5 344.3,260.0 344.5,249.2 344.7,249.2 344.8,270.7 345.0,249.2 345.1,249.2 345.3,249.2 345.5,281.5 345.6,249.2 345.8,260.0 346.0,249.2 346.1,249.2 346.3,260.0 346.4,260.0 346.6,249.2 346.8,260.0 346.9,260.0 347.1,249.2 347.2,260.0 347.4,260.0 347.6,249.2 347.7,249.2 347.9,249.2 348.0,249.2 348.2,249.2 348.4,249.2 348.5,249.2 348.7,249.2 348.9,249.2 349.0,249.2 349.2,249.2 349.3,260.0 349.5,260.0 349.7,249.2 349.8,260.0 350.0,249.2 350.1,249.2 350.3,249.2 350.5,249.2 350.6,260.0 350.8,260.0 350.9,249.2 351.1,249.2 351.3,249.2 351.4,260.0 351.6,281.5 351.7,249.2 351.9,249.2 352.1,249.2 352.2,249.2 352.4,249.2 352.6,260.0 352.7,249.2 352.9,249.2 353.0,270.7 353.2,260.0 353.4,260.0 353.5,249.2 353.7,249.2 353.8,260.0 354.0,249.2 354.2,249.2 354.3,249.2 354.5,260.0 354.6,249.2 354.8,260.0 355.0,260.0 355.1,249.2 355.3,249.2 355.5,249.2 355.6,260.0 355.8,260.0 355.9,249.2 356.1,249.2 356.3,260.0 356.4,249.2 356.6,249.2 356.7,249.2 356.9,260.0 357.1,249.2 357.2,260.0 357.4,249.2 357.5,260.0 357.7,281.5 357.9,249.2 358.0,249.2 358.2,249.2 358.4,249.2 358.5,260.0 358.7,249.2 358.8,249.2 359.0,260.0 359.2,260.0 359.3,249.2 359.5,249.2 359.6,281.5 359.8,260.0 360.0,260.0 360.1,249.2 360.3,249.2 360.4,260.0 360.6,249.2 360.8,270.7 360.9,249.2 361.1,260.0 361.2,249.2 361.4,249.2 361.6,249.2 361.7,249.2 361.9,249.2 362.1,249.2 362.2,260.0 362.4,292.3 362.5,270.7 362.7,249.2 362.9,249.2 363.0,249.2 363.2,270.7 363.3,249.2 363.5,249.2 363.7,249.2 363.8,249.2 364.0,249.2 364.1,249.2 364.3,249.2 364.5,260.0 364.6,260.0 364.8,260.0 365.0,260.0 365.1,249.2 365.3,249.2 365.4,260.0 365.6,249.2 365.8,249.2 365.9,249.2 366.1,249.2 366.2,249.2 366.4,249.2 366.6,260.0 366.7,249.2 366.9,249.2 367.0,249.2 367.2,249.2 367.4,260.0 367.5,249.2 367.7,249.2 367.8,249.2 368.0,249.2 368.2,249.2 368.3,249.2 368.5,249.2 368.7,260.0 368.8,281.5 369.0,260.0 369.1,249.2 369.3,249.2 369.5,281.5 369.6,281.5 369.8,260.0 369.9,260.0 370.1,249.2 370.3,249.2 370.4,249.2 370.6,260.0 370.7,249.2 370.9,249.2 371.1,260.0 371.2,260.0 371.4,249.2 371.6,249.2 371.7,260.0 371.9,249.2 372.0,249.2 372.2,249.2 372.4,260.0 372.5,249.2 372.7,249.2 372.8,249.2 373.0,281.5 373.2,249.2 373.3,249.2 373.5,249.2 373.6,249.2 373.8,260.0 374.0,249.2 374.1,249.2 374.3,249.2 374.4,260.0 374.6,249.2 374.8,260.0 374.9,249.2 375.1,249.2 375.3,249.2 375.4,260.0 375.6,260.0 375.7,249.2 375.9,249.2 376.1,260.0 376.2,260.0 376.4,281.5 376.5,260.0 376.7,270.7 376.9,249.2 377.0,249.2 377.2,249.2 377.3,249.2 377.5,249.2 377.7,249.2 377.8,249.2 378.0,249.2 378.2,260.0 378.3,249.2 378.5,249.2 378.6,270.7 378.8,260.0 379.0,249.2 379.1,249.2 379.3,260.0 379.4,260.0 379.6,249.2 379.8,260.0 379.9,270.7 380.1,260.0 380.2,249.2 380.4,249.2 380.6,249.2 380.7,249.2 380.9,260.0 381.1,249.2 381.2,249.2 381.4,281.5 381.5,249.2 381.7,260.0 381.9,260.0 382.0,249.2 382.2,249.2 382.3,249.2 382.5,249.2 382.7,249.2 382.8,249.2 383.0,249.2 383.1,249.2 383.3,249.2 383.5,249.2 383.6,249.2 383.8,249.2 383.9,249.2 384.1,249.2 384.3,249.2 384.4,249.2 384.6,249.2 384.8,249.2 384.9,260.0 385.1,281.5 385.2,249.2 385.4,260.0 385.6,270.7 385.7,249.2 385.9,260.0 386.0,249.2 386.2,270.7 386.4,260.0 386.5,249.2 386.7,260.0 386.8,260.0 387.0,260.0 387.2,260.0 387.3,303.0 387.5,249.2 387.7,249.2 387.8,270.7 388.0,249.2 388.1,249.2 388.3,249.2 388.5,260.0 388.6,249.2 388.8,281.5 388.9,281.5 389.1,249.2 389.3,249.2 389.4,249.2 389.6,249.2 389.7,249.2 389.9,249.2 390.1,249.2 390.2,249.2 390.4,260.0 390.6,249.2 390.7,249.2 390.9,260.0 391.0,260.0 391.2,260.0 391.4,260.0 391.5,249.2 391.7,260.0 391.8,249.2 392.0,260.0 392.2,260.0 392.3,249.2 392.5,270.7 392.6,249.2 392.8,260.0 393.0,249.2 393.1,249.2 393.3,249.2 393.4,249.2 393.6,249.2 393.8,249.2 393.9,260.0 394.1,292.3 394.3,249.2 394.4,249.2 394.6,249.2 394.7,249.2 394.9,249.2 395.1,249.2 395.2,249.2 395.4,249.2 395.5,260.0 395.7,249.2 395.9,270.7 396.0,260.0 396.2,260.0 396.3,270.7 396.5,260.0 396.7,249.2 396.8,260.0 397.0,260.0 397.2,260.0 397.3,249.2 397.5,249.2 397.6,249.2 397.8,249.2 398.0,249.2 398.1,249.2 398.3,260.0 398.4,249.2 398.6,260.0 398.8,260.0 398.9,249.2 399.1,249.2 399.2,260.0 399.4,260.0 399.6,260.0 399.7,249.2 399.9,249.2 400.0,260.0 400.2,260.0 400.4,281.5 400.5,249.2 400.7,249.2 400.9,249.2 401.0,260.0 401.2,249.2 401.3,260.0 401.5,260.0 401.7,260.0 401.8,249.2 402.0,249.2 402.1,260.0 402.3,249.2 402.5,249.2 402.6,249.2 402.8,260.0 402.9,249.2 403.1,249.2 403.3,249.2 403.4,249.2 403.6,260.0 403.8,260.0 403.9,249.2 404.1,260.0 404.2,249.2 404.4,260.0 404.6,249.2 404.7,260.0 404.9,260.0 405.0,260.0 405.2,270.7 405.4,249.2 405.5,260.0 405.7,249.2 405.8,249.2 406.0,249.2 406.2,292.3 406.3,249.2 406.5,249.2 406.7,249.2 406.8,249.2 407.0,270.7 407.1,260.0 407.3,281.5 407.5,249.2 407.6,249.2 407.8,260.0 407.9,249.2 408.1,249.2 408.3,249.2 408.4,249.2 408.6,249.2 408.7,249.2 408.9,260.0 409.1,249.2 409.2,249.2 409.4,260.0 409.5,249.2 409.7,249.2 409.9,249.2 410.0,249.2 410.2,260.0 410.4,249.2 410.5,249.2 410.7,249.2 410.8,249.2 411.0,260.0 411.2,249.2 411.3,249.2 411.5,249.2 411.6,249.2 411.8,249.2 412.0,260.0 412.1,249.2 412.3,249.2 412.4,249.2 412.6,249.2 412.8,249.2 412.9,249.2 413.1,260.0 413.3,260.0 413.4,249.2 413.6,249.2 413.7,260.0 413.9,249.2 414.1,249.2 414.2,249.2 414.4,249.2 414.5,249.2 414.7,249.2 414.9,249.2 415.0,249.2 415.2,249.2 415.3,249.2 415.5,249.2 415.7,260.0 415.8,292.3 416.0,249.2 416.1,249.2 416.3,249.2 416.5,249.2 416.6,260.0 416.8,249.2 417.0,249.2 417.1,260.0 417.3,249.2 417.4,260.0 417.6,249.2 417.8,249.2 417.9,260.0 418.1,249.2 418.2,260.0 418.4,249.2 418.6,260.0 418.7,270.7 418.9,260.0 419.0,249.2 419.2,249.2 419.4,292.3 419.5,249.2 419.7,249.2 419.9,249.2 420.0,249.2 420.2,249.2 420.3,249.2 420.5,249.2 420.7,249.2 420.8,249.2 421.0,260.0 421.1,249.2 421.3,249.2 421.5,270.7 421.6,249.2 421.8,260.0 421.9,249.2 422.1,249.2 422.3,249.2 422.4,249.2 422.6,249.2 422.8,260.0 422.9,260.0 423.1,249.2 423.2,249.2 423.4,249.2 423.6,249.2 423.7,260.0 423.9,249.2 424.0,249.2 424.2,249.2 424.4,249.2 424.5,249.2 424.7,260.0 424.8,249.2 425.0,249.2 425.2,260.0 425.3,260.0 425.5,260.0 425.6,260.0 425.8,249.2 426.0,260.0 426.1,249.2 426.3,249.2 426.5,260.0 426.6,260.0 426.8,260.0 426.9,249.2 427.1,260.0 427.3,249.2 427.4,260.0 427.6,249.2 427.7,249.2 427.9,260.0 428.1,249.2 428.2,249.2 428.4,249.2 428.5,270.7 428.7,260.0 428.9,249.2 429.0,249.2 429.2,249.2 429.4,260.0 429.5,249.2 429.7,249.2 429.8,249.2 430.0,260.0 430.2,249.2 430.3,249.2 430.5,260.0 430.6,249.2 430.8,260.0 431.0,249.2 431.1,249.2 431.3,260.0 431.4,249.2 431.6,249.2 431.8,270.7 431.9,249.2 432.1,249.2 432.2,249.2 432.4,249.2 432.6,249.2 432.7,249.2 432.9,249.2 433.1,260.0 433.2,249.2 433.4,260.0 433.5,249.2 433.7,249.2 433.9,260.0 434.0,260.0 434.2,249.2 434.3,260.0 434.5,249.2 434.7,249.2 434.8,281.5 435.0,249.2 435.1,270.7 435.3,249.2 435.5,260.0 435.6,249.2 435.8,260.0 436.0,249.2 436.1,249.2 436.3,260.0 436.4,249.2 436.6,249.2 436.8,260.0 436.9,249.2 437.1,249.2 437.2,249.2 437.4,260.0 437.6,249.2 437.7,260.0 437.9,249.2 438.0,270.7 438.2,249.2 438.4,249.2 438.5,249.2 438.7,249.2 438.8,249.2 439.0,249.2 439.2,260.0 439.3,249.2 439.5,249.2 439.7,249.2 439.8,260.0 440.0,260.0 440.1,270.7 440.3,249.2 440.5,249.2 440.6,249.2 440.8,249.2 440.9,249.2 441.1,249.2 441.3,249.2 441.4,249.2 441.6,249.2 441.7,249.2 441.9,249.2 442.1,260.0 442.2,270.7 442.4,260.0 442.6,303.0 442.7,270.7 442.9,270.7 443.0,270.7 443.2,249.2 443.4,260.0 443.5,249.2 443.7,249.2 443.8,249.2 444.0,260.0 444.2,260.0 444.3,260.0 444.5,249.2 444.6,249.2 444.8,249.2 445.0,249.2 445.1,249.2 445.3,249.2 445.5,249.2 445.6,249.2 445.8,249.2 445.9,249.2 446.1,249.2 446.3,249.2 446.4,249.2 446.6,260.0 446.7,249.2 446.9,249.2 447.1,249.2 447.2,249.2 447.4,249.2 447.5,249.2 447.7,249.2 447.9,249.2 448.0,260.0 448.2,260.0 448.3,249.2 448.5,249.2 448.7,249.2 448.8,249.2 449.0,260.0 449.2,260.0 449.3,260.0 449.5,249.2 449.6,270.7 449.8,270.7 450.0,249.2 450.1,260.0 450.3,249.2 450.4,249.2 450.6,249.2 450.8,249.2 450.9,249.2 451.1,249.2 451.2,260.0 451.4,249.2 451.6,260.0 451.7,260.0 451.9,249.2 452.1,260.0 452.2,249.2 452.4,270.7 452.5,260.0 452.7,249.2 452.9,260.0 453.0,249.2 453.2,260.0 453.3,260.0 453.5,249.2 453.7,260.0 453.8,249.2 454.0,260.0 454.1,249.2 454.3,260.0 454.5,249.2 454.6,249.2 454.8,249.2 455.0,281.5 455.1,249.2 455.3,249.2 455.4,249.2 455.6,260.0 455.8,249.2 455.9,260.0 456.1,249.2 456.2,260.0 456.4,249.2 456.6,260.0 456.7,249.2 456.9,249.2 457.0,260.0 457.2,249.2 457.4,249.2 457.5,260.0 457.7,249.2 457.8,249.2 458.0,249.2 458.2,249.2 458.3,249.2 458.5,260.0 458.7,249.2 458.8,249.2 459.0,249.2 459.1,260.0 459.3,249.2 459.5,249.2 459.6,249.2 459.8,249.2 459.9,260.0 460.1,260.0 460.3,249.2 460.4,270.7 460.6,249.2 460.7,249.2 460.9,249.2 461.1,270.7 461.2,249.2 461.4,260.0 461.6,260.0 461.7,260.0 461.9,281.5 462.0,270.7 462.2,260.0 462.4,249.2 462.5,260.0 462.7,249.2 462.8,249.2 463.0,249.2 463.2,249.2 463.3,260.0 463.5,270.7 463.6,260.0 463.8,249.2 464.0,249.2 464.1,260.0 464.3,260.0 464.4,249.2 464.6,249.2 464.8,260.0 464.9,249.2 465.1,249.2 465.3,249.2 465.4,249.2 465.6,249.2 465.7,249.2 465.9,249.2 466.1,270.7 466.2,270.7 466.4,313.8 466.5,260.0 466.7,270.7 466.9,260.0 467.0,249.2 467.2,249.2 467.3,249.2 467.5,249.2 467.7,249.2 467.8,260.0 468.0,260.0 468.2,249.2 468.3,249.2 468.5,249.2 468.6,249.2 468.8,249.2 469.0,292.3 469.1,249.2 469.3,249.2 469.4,292.3 469.6,249.2 469.8,249.2 469.9,249.2 470.1,249.2 470.2,249.2 470.4,260.0 470.6,260.0 470.7,249.2 470.9,249.2 471.0,260.0 471.2,249.2 471.4,260.0 471.5,260.0 471.7,249.2 471.9,249.2 472.0,249.2 472.2,249.2 472.3,270.7 472.5,260.0 472.7,249.2 472.8,249.2 473.0,249.2 473.1,260.0 473.3,260.0 473.5,249.2 473.6,260.0 473.8,260.0 473.9,260.0 474.1,249.2 474.3,249.2 474.4,260.0 474.6,249.2 474.8,249.2 474.9,249.2 475.1,249.2 475.2,260.0 475.4,249.2 475.6,292.3 475.7,249.2 475.9,260.0 476.0,249.2 476.2,260.0 476.4,260.0 476.5,249.2 476.7,260.0 476.8,249.2 477.0,249.2 477.2,249.2 477.3,260.0 477.5,260.0 477.7,270.7 477.8,249.2 478.0,249.2 478.1,249.2 478.3,249.2 478.5,260.0 478.6,260.0 478.8,249.2 478.9,249.2 479.1,249.2 479.3,249.2 479.4,249.2 479.6,249.2 479.7,249.2 479.9,260.0 480.1,249.2 480.2,249.2 480.4,249.2 480.5,292.3 480.7,281.5 480.9,249.2 481.0,249.2 481.2,260.0 481.4,249.2 481.5,260.0 481.7,249.2 481.8,249.2 482.0,249.2 482.2,249.2 482.3,260.0 482.5,249.2 482.6,249.2 482.8,249.2 483.0,270.7 483.1,260.0 483.3,260.0 483.4,303.0 483.6,260.0 483.8,270.7 483.9,270.7 484.1,249.2 484.3,270.7 484.4,260.0 484.6,249.2 484.7,281.5 484.9,260.0 485.1,249.2 485.2,249.2 485.4,249.2 485.5,260.0 485.7,260.0 485.9,260.0 486.0,249.2 486.2,249.2 486.3,260.0 486.5,249.2 486.7,281.5 486.8,249.2 487.0,260.0 487.2,260.0 487.3,249.2 487.5,260.0 487.6,260.0 487.8,249.2 488.0,249.2 488.1,260.0 488.3,249.2 488.4,270.7 488.6,260.0 488.8,249.2 488.9,260.0 489.1,281.5 489.2,260.0 489.4,249.2 489.6,270.7 489.7,270.7 489.9,249.2 490.0,249.2 490.2,249.2 490.4,249.2 490.5,249.2 490.7,260.0 490.9,249.2 491.0,249.2 491.2,281.5 491.3,249.2 491.5,260.0 491.7,260.0 491.8,249.2 492.0,249.2 492.1,260.0 492.3,249.2 492.5,260.0 492.6,249.2 492.8,249.2 492.9,249.2 493.1,249.2 493.3,249.2 493.4,260.0 493.6,260.0 493.8,260.0 493.9,270.7 494.1,270.7 494.2,260.0 494.4,249.2 494.6,249.2 494.7,249.2 494.9,249.2 495.0,249.2 495.2,249.2 495.4,249.2 495.5,260.0 495.7,249.2 495.8,249.2 496.0,260.0 496.2,249.2 496.3,260.0 496.5,260.0 496.6,249.2 496.8,249.2 497.0,249.2 497.1,249.2 497.3,260.0 497.5,260.0 497.6,249.2 497.8,249.2 497.9,260.0 498.1,260.0 498.3,249.2 498.4,249.2 498.6,249.2 498.7,260.0 498.9,249.2 499.1,281.5 499.2,249.2 499.4,249.2 499.5,249.2 499.7,260.0 499.9,249.2 500.0,260.0 500.2,249.2 500.4,249.2 500.5,249.2 500.7,260.0 500.8,270.7 501.0,249.2 501.2,249.2 501.3,270.7 501.5,249.2 501.6,249.2 501.8,249.2 502.0,249.2 502.1,249.2 502.3,249.2 502.4,249.2 502.6,249.2 502.8,249.2 502.9,249.2 503.1,260.0 503.2,249.2 503.4,249.2 503.6,260.0 503.7,260.0 503.9,249.2 504.1,249.2 504.2,249.2 504.4,249.2 504.5,249.2 504.7,249.2 504.9,249.2 505.0,260.0 505.2,249.2 505.3,260.0 505.5,260.0 505.7,249.2 505.8,260.0 506.0,260.0 506.1,249.2 506.3,270.7 506.5,249.2 506.6,249.2 506.8,260.0 507.0,260.0 507.1,260.0 507.3,260.0 507.4,270.7 507.6,260.0 507.8,270.7 507.9,281.5 508.1,249.2 508.2,249.2 508.4,249.2 508.6,249.2 508.7,249.2 508.9,249.2 509.0,249.2 509.2,249.2 509.4,249.2 509.5,249.2 509.7,249.2 509.9,260.0 510.0,249.2 510.2,249.2 510.3,249.2 510.5,249.2 510.7,249.2 510.8,260.0 511.0,260.0 511.1,260.0 511.3,249.2 511.5,249.2 511.6,260.0 511.8,260.0 511.9,249.2 512.1,249.2 512.3,249.2 512.4,249.2 512.6,270.7 512.7,249.2 512.9,249.2 513.1,249.2 513.2,270.7 513.4,260.0 513.6,249.2 513.7,249.2 513.9,270.7 514.0,270.7 514.2,249.2 514.4,313.8 514.5,270.7 514.7,260.0 514.8,270.7 515.0,249.2 515.2,292.3 515.3,249.2 515.5,249.2 515.6,260.0 515.8,249.2 516.0,270.7 516.1,249.2 516.3,260.0 516.5,249.2 516.6,249.2 516.8,260.0 516.9,260.0 517.1,249.2 517.3,260.0 517.4,249.2 517.6,249.2 517.7,260.0 517.9,260.0 518.1,249.2 518.2,249.2 518.4,260.0 518.5,260.0 518.7,249.2 518.9,249.2 519.0,260.0 519.2,260.0 519.4,260.0 519.5,249.2 519.7,249.2 519.8,260.0 520.0,260.0 520.2,260.0 520.3,249.2 520.5,260.0 520.6,249.2 520.8,249.2 521.0,249.2 521.1,260.0 521.3,249.2 521.4,260.0 521.6,260.0 521.8,249.2 521.9,260.0 522.1,249.2 522.2,249.2 522.4,260.0 522.6,260.0 522.7,249.2 522.9,260.0 523.1,260.0 523.2,270.7 523.4,249.2 523.5,249.2 523.7,260.0 523.9,249.2 524.0,270.7 524.2,249.2 524.3,260.0 524.5,260.0 524.7,249.2 524.8,249.2 525.0,249.2 525.1,249.2 525.3,260.0 525.5,249.2 525.6,260.0 525.8,249.2 526.0,249.2 526.1,249.2 526.3,249.2 526.4,249.2 526.6,249.2 526.8,260.0 526.9,270.7 527.1,249.2 527.2,249.2 527.4,249.2 527.6,281.5 527.7,249.2 527.9,260.0 528.0,260.0 528.2,260.0 528.4,249.2 528.5,260.0 528.7,260.0 528.8,249.2 529.0,260.0 529.2,249.2 529.3,249.2 529.5,249.2 529.7,260.0 529.8,249.2 530.0,249.2 530.1,249.2 530.3,249.2 530.5,249.2 530.6,249.2 530.8,249.2 530.9,249.2 531.1,249.2 531.3,249.2 531.4,260.0 531.6,249.2 531.7,249.2 531.9,249.2 532.1,260.0 532.2,249.2 532.4,260.0 532.6,270.7 532.7,270.7 532.9,260.0 533.0,260.0 533.2,249.2 533.4,270.7 533.5,260.0 533.7,260.0 533.8,260.0 534.0,260.0 534.2,249.2 534.3,260.0 534.5,260.0 534.6,249.2 534.8,260.0 535.0,249.2 535.1,260.0 535.3,249.2 535.4,260.0 535.6,260.0 535.8,260.0 535.9,249.2 536.1,260.0 536.3,249.2 536.4,249.2 536.6,249.2 536.7,249.2 536.9,260.0 537.1,270.7 537.2,249.2 537.4,260.0 537.5,260.0 537.7,260.0 537.9,249.2 538.0,260.0 538.2,260.0 538.3,260.0 538.5,249.2 538.7,260.0 538.8,260.0 539.0,260.0 539.2,260.0 539.3,249.2 539.5,260.0 539.6,260.0 539.8,249.2 540.0,249.2 540.1,260.0 540.3,260.0 540.4,249.2 540.6,249.2 540.8,249.2 540.9,249.2 541.1,249.2 541.2,260.0 541.4,249.2 541.6,249.2 541.7,249.2 541.9,249.2 542.1,260.0 542.2,249.2 542.4,249.2 542.5,249.2 542.7,249.2 542.9,249.2 543.0,249.2 543.2,249.2 543.3,249.2 543.5,260.0 543.7,249.2 543.8,249.2 544.0,249.2 544.1,249.2 544.3,270.7 544.5,249.2 544.6,260.0 544.8,249.2 544.9,249.2 545.1,281.5 545.3,249.2 545.4,249.2 545.6,270.7 545.8,260.0 545.9,249.2 546.1,249.2 546.2,249.2 546.4,249.2 546.6,260.0 546.7,249.2 546.9,249.2 547.0,260.0 547.2,281.5 547.4,249.2 547.5,249.2 547.7,249.2 547.8,249.2 548.0,249.2 548.2,249.2 548.3,249.2 548.5,249.2 548.7,249.2 548.8,249.2 549.0,260.0 549.1,249.2 549.3,249.2 549.5,260.0 549.6,260.0 549.8,249.2 549.9,249.2 550.1,270.7 550.3,249.2 550.4,249.2 550.6,249.2 550.7,260.0 550.9,249.2 551.1,270.7 551.2,249.2 551.4,260.0 551.6,260.0 551.7,270.7 551.9,249.2 552.0,270.7 552.2,249.2 552.4,260.0 552.5,249.2 552.7,249.2 552.8,249.2 553.0,249.2 553.2,249.2 553.3,260.0 553.5,249.2 553.6,260.0 553.8,281.5 554.0,260.0 554.1,249.2 554.3,270.7 554.4,249.2 554.6,249.2 554.8,249.2 554.9,249.2 555.1,260.0 555.3,260.0 555.4,249.2 555.6,249.2 555.7,249.2 555.9,249.2 556.1,249.2 556.2,249.2 556.4,249.2 556.5,249.2 556.7,249.2 556.9,260.0 557.0,260.0 557.2,249.2 557.3,260.0 557.5,260.0 557.7,260.0 557.8,260.0 558.0,249.2 558.2,249.2 558.3,260.0 558.5,260.0 558.6,249.2 558.8,260.0 559.0,260.0 559.1,249.2 559.3,249.2 559.4,281.5 559.6,260.0 559.8,260.0 559.9,249.2 560.1,260.0 560.2,281.5 560.4,260.0 560.6,260.0 560.7,270.7 560.9,260.0 561.0,270.7 561.2,249.2 561.4,249.2 561.5,249.2 561.7,281.5 561.9,260.0 562.0,249.2 562.2,260.0 562.3,249.2 562.5,249.2 562.7,249.2 562.8,260.0 563.0,249.2 563.1,260.0 563.3,249.2 563.5,249.2 563.6,249.2 563.8,249.2 563.9,249.2 564.1,260.0 564.3,260.0 564.4,249.2 564.6,249.2 564.8,260.0 564.9,249.2 565.1,260.0 565.2,249.2 565.4,249.2 565.6,249.2 565.7,249.2 565.9,270.7 566.0,249.2 566.2,249.2 566.4,260.0 566.5,260.0 566.7,260.0 566.8,249.2 567.0,249.2 567.2,281.5 567.3,292.3 567.5,249.2 567.7,260.0 567.8,260.0 568.0,249.2 568.1,249.2 568.3,249.2 568.5,260.0 568.6,249.2 568.8,249.2 568.9,249.2 569.1,249.2 569.3,270.7 569.4,249.2 569.6,249.2 569.7,270.7 569.9,249.2 570.1,260.0 570.2,249.2 570.4,260.0 570.5,249.2 570.7,249.2 570.9,270.7 571.0,249.2 571.2,249.2 571.4,249.2 571.5,260.0 571.7,249.2 571.8,260.0 572.0,260.0 572.2,281.5 572.3,292.3 572.5,260.0 572.6,249.2 572.8,249.2 573.0,249.2 573.1,260.0 573.3,260.0 573.4,260.0 573.6,249.2 573.8,249.2 573.9,260.0 574.1,260.0 574.3,260.0 574.4,260.0 574.6,260.0 574.7,249.2 574.9,249.2 575.1,249.2 575.2,249.2 575.4,260.0 575.5,260.0 575.7,249.2 575.9,249.2 576.0,270.7 576.2,260.0 576.3,249.2 576.5,260.0 576.7,260.0 576.8,270.7 577.0,260.0 577.1,260.0 577.3,249.2 577.5,249.2 577.6,292.3 577.8,249.2 578.0,260.0 578.1,260.0 578.3,260.0 578.4,260.0 578.6,270.7 578.8,249.2 578.9,260.0 579.1,270.7 579.2,260.0 579.4,260.0 579.6,260.0 579.7,249.2 579.9,249.2 580.0,249.2 580.2,260.0 580.4,249.2 580.5,249.2 580.7,260.0 580.9,249.2 581.0,249.2 581.2,249.2 581.3,260.0 581.5,260.0 581.7,270.7 581.8,260.0 582.0,249.2 582.1,292.3 582.3,249.2 582.5,260.0 582.6,249.2 582.8,260.0 582.9,249.2 583.1,260.0 583.3,249.2 583.4,249.2 583.6,260.0 583.8,260.0 583.9,249.2 584.1,260.0 584.2,270.7 584.4,249.2 584.6,260.0 584.7,249.2 584.9,260.0 585.0,249.2 585.2,249.2 585.4,249.2 585.5,249.2 585.7,249.2 585.8,260.0 586.0,260.0 586.2,260.0 586.3,270.7 586.5,249.2 586.6,260.0 586.8,270.7 587.0,281.5 587.1,249.2 587.3,249.2 587.5,249.2 587.6,249.2 587.8,249.2 587.9,260.0 588.1,249.2 588.3,249.2 588.4,249.2 588.6,260.0 588.7,260.0 588.9,260.0 589.1,249.2 589.2,249.2 589.4,249.2 589.5,249.2 589.7,249.2 589.9,260.0 590.0,260.0 590.2,292.3 590.4,249.2 590.5,249.2 590.7,260.0 590.8,260.0 591.0,249.2 591.2,249.2 591.3,249.2 591.5,249.2 591.6,249.2 591.8,249.2 592.0,292.3 592.1,249.2 592.3,249.2 592.4,249.2 592.6,249.2 592.8,249.2 592.9,249.2 593.1,260.0 593.2,249.2 593.4,249.2 593.6,249.2 593.7,260.0 593.9,249.2 594.1,249.2 594.2,249.2 594.4,260.0 594.5,249.2 594.7,249.2 594.9,249.2 595.0,270.7 595.2,249.2 595.3,249.2 595.5,249.2 595.7,249.2 595.8,260.0 596.0,249.2 596.1,260.0 596.3,260.0 596.5,249.2 596.6,249.2 596.8,249.2 597.0,249.2 597.1,249.2 597.3,249.2 597.4,260.0 597.6,260.0 597.8,249.2 597.9,260.0 598.1,249.2 598.2,260.0 598.4,249.2 598.6,249.2 598.7,249.2 598.9,260.0 599.0,260.0 599.2,260.0 599.4,249.2 599.5,260.0 599.7,260.0 599.8,270.7 600.0,270.7 600.2,270.7 600.3,313.8 600.5,270.7 600.7,260.0 600.8,270.7 601.0,260.0 601.1,249.2 601.3,249.2 601.5,260.0 601.6,249.2 601.8,249.2 601.9,249.2 602.1,260.0 602.3,249.2 602.4,249.2 602.6,260.0 602.7,249.2 602.9,249.2 603.1,281.5 603.2,249.2 603.4,260.0 603.6,270.7 603.7,249.2 603.9,260.0 604.0,249.2 604.2,260.0 604.4,249.2 604.5,249.2 604.7,260.0 604.8,260.0 605.0,249.2 605.2,260.0 605.3,249.2 605.5,281.5 605.6,270.7 605.8,249.2 606.0,249.2 606.1,249.2 606.3,249.2 606.5,249.2 606.6,260.0 606.8,260.0 606.9,249.2 607.1,249.2 607.3,260.0 607.4,260.0 607.6,249.2 607.7,249.2 607.9,249.2 608.1,249.2 608.2,249.2 608.4,260.0 608.5,249.2 608.7,249.2 608.9,249.2 609.0,249.2 609.2,260.0 609.3,249.2 609.5,260.0 609.7,260.0 609.8,249.2 610.0,249.2 610.2,270.7 610.3,260.0 610.5,260.0 610.6,249.2 610.8,249.2 611.0,260.0 611.1,249.2 611.3,260.0 611.4,249.2 611.6,249.2 611.8,249.2 611.9,260.0 612.1,249.2 612.2,249.2 612.4,260.0 612.6,249.2 612.7,270.7 612.9,270.7 613.1,260.0 613.2,249.2 613.4,249.2 613.5,249.2 613.7,249.2 613.9,249.2 614.0,249.2 614.2,249.2 614.3,249.2 614.5,260.0 614.7,260.0 614.8,249.2 615.0,249.2 615.1,260.0 615.3,249.2 615.5,249.2 615.6,249.2 615.8,260.0 616.0,260.0 616.1,249.2 616.3,260.0 616.4,249.2 616.6,270.7 616.8,249.2 616.9,249.2 617.1,249.2 617.2,260.0 617.4,260.0 617.6,260.0 617.7,260.0 617.9,260.0 618.0,249.2 618.2,249.2 618.4,249.2 618.5,249.2 618.7,249.2 618.8,260.0 619.0,260.0 619.2,249.2 619.3,260.0 619.5,260.0 619.7,249.2 619.8,249.2 620.0,260.0 620.1,249.2 620.3,260.0 620.5,249.2 620.6,260.0 620.8,249.2 620.9,249.2 621.1,260.0 621.3,260.0 621.4,260.0 621.6,249.2 621.7,249.2 621.9,249.2 622.1,249.2 622.2,249.2 622.4,249.2 622.6,249.2 622.7,249.2 622.9,249.2 623.0,260.0 623.2,260.0 623.4,249.2 623.5,260.0 623.7,249.2 623.8,249.2 624.0,270.7 624.2,270.7 624.3,260.0 624.5,313.8 624.6,270.7 624.8,260.0 625.0,270.7 625.1,249.2 625.3,249.2 625.4,249.2 625.6,249.2 625.8,249.2 625.9,249.2 626.1,249.2 626.3,292.3 626.4,249.2 626.6,249.2 626.7,249.2 626.9,249.2 627.1,260.0 627.2,260.0 627.4,249.2 627.5,249.2 627.7,249.2 627.9,249.2 628.0,270.7 628.2,270.7 628.3,249.2 628.5,249.2 628.7,260.0 628.8,260.0 629.0,249.2 629.2,249.2 629.3,270.7 629.5,260.0 629.6,249.2 629.8,249.2 630.0,249.2 630.1,249.2 630.3,260.0 630.4,249.2 630.6,249.2 630.8,249.2 630.9,260.0 631.1,249.2 631.2,249.2 631.4,249.2 631.6,249.2 631.7,249.2 631.9,249.2 632.1,249.2 632.2,260.0 632.4,260.0 632.5,249.2 632.7,249.2 632.9,260.0 633.0,249.2 633.2,249.2 633.3,260.0 633.5,249.2 633.7,249.2 633.8,249.2 634.0,260.0 634.1,249.2 634.3,249.2 634.5,249.2 634.6,249.2 634.8,260.0 634.9,260.0 635.1,260.0 635.3,260.0 635.4,260.0 635.6,249.2 635.8,249.2 635.9,281.5 636.1,281.5 636.2,260.0 636.4,260.0 636.6,260.0 636.7,249.2 636.9,270.7 637.0,249.2 637.2,249.2 637.4,270.7 637.5,249.2 637.7,260.0 637.8,249.2 638.0,249.2 638.2,249.2 638.3,249.2 638.5,260.0 638.7,249.2 638.8,249.2 639.0,249.2 639.1,249.2 639.3,249.2 639.5,260.0 639.6,249.2 639.8,260.0 639.9,249.2 640.1,249.2 640.3,260.0 640.4,249.2 640.6,249.2 640.7,260.0 640.9,249.2 641.1,249.2 641.2,249.2 641.4,249.2 641.5,249.2 641.7,249.2 641.9,270.7 642.0,249.2 642.2,270.7 642.4,260.0 642.5,249.2 642.7,249.2 642.8,260.0 643.0,249.2 643.2,249.2 643.3,249.2 643.5,249.2 643.6,249.2 643.8,249.2 644.0,249.2 644.1,249.2 644.3,281.5 644.4,270.7 644.6,249.2 644.8,249.2 644.9,260.0 645.1,260.0 645.3,260.0 645.4,249.2 645.6,249.2 645.7,260.0 645.9,281.5 646.1,249.2 646.2,249.2 646.4,260.0 646.5,249.2 646.7,260.0 646.9,270.7 647.0,260.0 647.2,249.2 647.3,249.2 647.5,249.2 647.7,249.2 647.8,249.2 648.0,249.2 648.2,249.2 648.3,249.2 648.5,249.2 648.6,249.2 648.8,260.0 649.0,260.0 649.1,249.2 649.3,249.2 649.4,281.5 649.6,260.0 649.8,260.0 649.9,260.0 650.1,270.7 650.2,260.0 650.4,260.0 650.6,260.0 650.7,249.2 650.9,249.2 651.0,249.2 651.2,249.2 651.4,249.2 651.5,260.0 651.7,260.0 651.9,249.2 652.0,249.2 652.2,260.0 652.3,260.0 652.5,249.2 652.7,249.2 652.8,249.2 653.0,249.2 653.1,249.2 653.3,249.2 653.5,249.2 653.6,270.7 653.8,249.2 653.9,249.2 654.1,249.2 654.3,249.2 654.4,249.2 654.6,249.2 654.8,249.2 654.9,260.0 655.1,249.2 655.2,249.2 655.4,260.0 655.6,260.0 655.7,249.2 655.9,249.2 656.0,260.0 656.2,270.7 656.4,303.0 656.5,260.0 656.7,270.7 656.8,260.0 657.0,249.2 657.2,249.2 657.3,260.0 657.5,249.2 657.6,270.7 657.8,249.2 658.0,249.2 658.1,249.2 658.3,249.2 658.5,270.7 658.6,270.7 658.8,270.7 658.9,260.0 659.1,260.0 659.3,260.0 659.4,260.0 659.6,249.2 659.7,260.0 659.9,249.2 660.1,260.0 660.2,249.2 660.4,260.0 660.5,249.2 660.7,249.2 660.9,249.2 661.0,249.2 661.2,249.2 661.4,260.0 661.5,249.2 661.7,281.5 661.8,249.2 662.0,260.0 662.2,260.0 662.3,249.2 662.5,249.2 662.6,260.0 662.8,249.2 663.0,260.0 663.1,249.2 663.3,249.2 663.4,249.2 663.6,249.2 663.8,260.0 663.9,249.2 664.1,249.2 664.2,260.0 664.4,281.5 664.6,249.2 664.7,260.0 664.9,249.2 665.1,249.2 665.2,249.2 665.4,260.0 665.5,249.2 665.7,260.0 665.9,249.2 666.0,270.7 666.2,249.2 666.3,260.0 666.5,260.0 666.7,249.2 666.8,249.2 667.0,249.2 667.1,249.2 667.3,249.2 667.5,249.2 667.6,249.2 667.8,260.0 668.0,260.0 668.1,249.2 668.3,249.2 668.4,249.2 668.6,270.7 668.8,249.2 668.9,249.2 669.1,260.0 669.2,281.5 669.4,260.0 669.6,249.2 669.7,249.2 669.9,249.2 670.0,249.2 670.2,249.2 670.4,249.2 670.5,249.2 670.7,249.2 670.9,249.2 671.0,249.2 671.2,249.2 671.3,249.2 671.5,260.0 671.7,260.0 671.8,249.2 672.0,249.2 672.1,249.2 672.3,249.2 672.5,249.2 672.6,249.2 672.8,249.2 672.9,249.2 673.1,281.5 673.3,260.0 673.4,249.2 673.6,249.2 673.7,249.2 673.9,249.2 674.1,249.2 674.2,249.2 674.4,260.0 674.6,260.0 674.7,260.0 674.9,270.7 675.0,249.2 675.2,249.2 675.4,249.2 675.5,249.2 675.7,249.2 675.8,249.2 676.0,260.0 676.2,249.2 676.3,249.2 676.5,260.0 676.6,260.0 676.8,249.2 677.0,260.0 677.1,260.0 677.3,249.2 677.5,260.0 677.6,249.2 677.8,270.7 677.9,260.0 678.1,249.2 678.3,249.2 678.4,249.2 678.6,249.2 678.7,260.0 678.9,270.7 679.1,249.2 679.2,270.7 679.4,249.2 679.5,260.0 679.7,249.2 679.9,249.2 680.0,260.0 680.2,249.2 680.4,249.2 680.5,249.2 680.7,249.2 680.8,249.2 681.0,249.2 681.2,249.2 681.3,249.2 681.5,260.0 681.6,249.2 681.8,249.2 682.0,249.2 682.1,270.7 682.3,249.2 682.4,249.2 682.6,249.2 682.8,249.2 682.9,260.0 683.1,249.2 683.2,260.0 683.4,249.2 683.6,249.2 683.7,249.2 683.9,249.2 684.1,260.0 684.2,260.0 684.4,270.7 684.5,249.2 684.7,249.2 684.9,249.2 685.0,270.7 685.2,249.2 685.3,260.0 685.5,249.2 685.7,249.2 685.8,260.0 686.0,249.2 686.1,249.2 686.3,260.0 686.5,249.2 686.6,249.2 686.8,249.2 687.0,260.0 687.1,249.2 687.3,260.0 687.4,249.2 687.6,270.7 687.8,270.7 687.9,260.0 688.1,249.2 688.2,249.2 688.4,249.2 688.6,281.5 688.7,249.2 688.9,260.0 689.0,260.0 689.2,249.2 689.4,249.2 689.5,249.2 689.7,249.2 689.8,249.2 690.0,249.2 690.2,260.0 690.3,260.0 690.5,249.2 690.7,249.2 690.8,249.2 691.0,249.2 691.1,249.2 691.3,249.2 691.5,249.2 691.6,249.2 691.8,249.2 691.9,249.2 692.1,249.2 692.3,249.2 692.4,260.0 692.6,249.2 692.7,249.2 692.9,249.2 693.1,249.2 693.2,270.7 693.4,249.2 693.6,260.0 693.7,249.2 693.9,249.2 694.0,249.2 694.2,249.2 694.4,249.2 694.5,249.2 694.7,249.2 694.8,249.2 695.0,260.0 695.2,260.0 695.3,249.2 695.5,249.2 695.6,249.2 695.8,249.2 696.0,249.2 696.1,260.0 696.3,260.0 696.4,260.0 696.6,270.7 696.8,249.2 696.9,260.0 697.1,249.2 697.3,249.2 697.4,249.2 697.6,260.0 697.7,281.5 697.9,260.0 698.1,249.2 698.2,249.2 698.4,249.2 698.5,249.2 698.7,260.0 698.9,260.0 699.0,260.0 699.2,270.7 699.3,303.0 699.5,270.7 699.7,270.7 699.8,270.7 700.0,249.2 700.2,249.2 700.3,249.2 700.5,260.0 700.6,260.0 700.8,249.2 701.0,249.2 701.1,270.7 701.3,249.2 701.4,270.7 701.6,249.2 701.8,249.2 701.9,249.2 702.1,249.2 702.2,249.2 702.4,249.2 702.6,249.2 702.7,249.2 702.9,249.2 703.1,249.2 703.2,249.2 703.4,249.2 703.5,249.2 703.7,281.5 703.9,249.2 704.0,249.2 704.2,249.2 704.3,260.0 704.5,249.2 704.7,249.2 704.8,249.2 705.0,260.0 705.1,260.0 705.3,249.2 705.5,249.2 705.6,249.2 705.8,249.2 705.9,260.0 706.1,260.0 706.3,260.0 706.4,249.2 706.6,260.0 706.8,249.2 706.9,249.2 707.1,249.2 707.2,249.2 707.4,249.2 707.6,260.0 707.7,260.0 707.9,249.2 708.0,249.2 708.2,249.2 708.4,249.2 708.5,249.2 708.7,249.2 708.8,249.2 709.0,249.2 709.2,249.2 709.3,249.2 709.5,249.2 709.7,260.0 709.8,249.2 710.0,260.0 710.1,249.2 710.3,249.2 710.5,260.0 710.6,249.2 710.8,249.2 710.9,260.0 711.1,249.2 711.3,260.0 711.4,260.0 711.6,249.2 711.7,249.2 711.9,260.0 712.1,260.0 712.2,249.2 712.4,249.2 712.6,249.2 712.7,249.2 712.9,260.0 713.0,249.2 713.2,249.2 713.4,249.2 713.5,249.2 713.7,270.7 713.8,249.2 714.0,249.2 714.2,249.2 714.3,260.0 714.5,249.2 714.6,281.5 714.8,249.2 715.0,249.2 715.1,270.7 715.3,270.7 715.4,249.2 715.6,249.2 715.8,260.0 715.9,249.2 716.1,260.0 716.3,249.2 716.4,249.2 716.6,249.2 716.7,249.2 716.9,249.2 717.1,270.7 717.2,249.2 717.4,249.2 717.5,260.0 717.7,249.2 717.9,260.0 718.0,249.2 718.2,260.0 718.3,260.0 718.5,260.0 718.7,249.2 718.8,249.2 719.0,270.7 719.2,249.2 719.3,249.2 719.5,260.0 719.6,260.0 719.8,260.0 720.0,270.7 720.1,249.2 720.3,249.2 720.4,249.2 720.6,249.2 720.8,249.2 720.9,249.2 721.1,260.0 721.2,260.0 721.4,249.2 721.6,249.2 721.7,270.7 721.9,249.2 722.0,260.0 722.2,249.2 722.4,249.2 722.5,249.2 722.7,249.2 722.9,270.7 723.0,260.0 723.2,249.2 723.3,260.0 723.5,249.2 723.7,249.2 723.8,260.0 724.0,249.2 724.1,249.2 724.3,260.0 724.5,249.2 724.6,260.0 724.8,249.2 724.9,260.0 725.1,249.2 725.3,249.2 725.4,249.2 725.6,260.0 725.8,260.0 725.9,249.2 726.1,249.2 726.2,260.0 726.4,249.2 726.6,249.2 726.7,249.2 726.9,260.0 727.0,260.0 727.2,281.5 727.4,260.0 727.5,260.0 727.7,260.0 727.8,270.7 728.0,270.7 728.2,270.7 728.3,303.0 728.5,270.7 728.6,249.2 728.8,270.7 729.0,249.2 729.1,260.0 729.3,249.2 729.5,249.2 729.6,249.2 729.8,249.2 729.9,249.2 730.1,249.2 730.3,249.2 730.4,249.2 730.6,260.0 730.7,249.2 730.9,249.2 731.1,249.2 731.2,249.2 731.4,260.0 731.5,249.2 731.7,249.2 731.9,260.0 732.0,249.2 732.2,249.2 732.4,249.2 732.5,249.2 732.7,260.0 732.8,249.2 733.0,249.2 733.2,260.0 733.3,249.2 733.5,249.2 733.6,260.0 733.8,260.0 734.0,249.2 734.1,260.0 734.3,249.2 734.4,249.2 734.6,270.7 734.8,260.0 734.9,260.0 735.1,249.2 735.3,249.2 735.4,260.0 735.6,260.0 735.7,260.0 735.9,270.7 736.1,249.2 736.2,260.0 736.4,249.2 736.5,260.0 736.7,260.0 736.9,260.0 737.0,260.0 737.2,260.0 737.3,270.7 737.5,249.2 737.7,260.0 737.8,260.0 738.0,249.2 738.1,249.2 738.3,260.0 738.5,249.2 738.6,249.2 738.8,249.2 739.0,249.2 739.1,249.2 739.3,260.0 739.4,249.2 739.6,249.2 739.8,249.2 739.9,260.0 740.1,270.7 740.2,249.2 740.4,249.2 740.6,260.0 740.7,249.2 740.9,249.2 741.0,249.2 741.2,249.2 741.4,249.2 741.5,260.0 741.7,249.2 741.9,260.0 742.0,249.2 742.2,249.2 742.3,260.0 742.5,249.2 742.7,249.2 742.8,270.7 743.0,249.2 743.1,249.2 743.3,270.7 743.5,249.2 743.6,249.2 743.8,260.0 743.9,249.2 744.1,249.2 744.3,260.0 744.4,249.2 744.6,249.2 744.8,249.2 744.9,249.2 745.1,260.0 745.2,249.2 745.4,260.0 745.6,249.2 745.7,249.2 745.9,249.2 746.0,249.2 746.2,249.2 746.4,260.0 746.5,260.0 746.7,260.0 746.8,260.0 747.0,260.0 747.2,260.0 747.3,249.2 747.5,249.2 747.6,260.0 747.8,249.2 748.0,249.2 748.1,260.0 748.3,270.7 748.5,249.2 748.6,249.2 748.8,260.0 748.9,249.2 749.1,249.2 749.3,260.0 749.4,260.0 749.6,249.2 749.7,281.5 749.9,260.0 750.1,260.0 750.2,260.0 750.4,281.5 750.5,260.0 750.7,249.2 750.9,249.2 751.0,249.2 751.2,249.2 751.4,249.2 751.5,249.2 751.7,249.2 751.8,249.2 752.0,260.0 752.2,249.2 752.3,260.0 752.5,249.2 752.6,249.2 752.8,249.2 753.0,270.7 753.1,249.2 753.3,249.2 753.4,260.0 753.6,249.2 753.8,249.2 753.9,249.2 754.1,249.2 754.2,292.3 754.4,260.0 754.6,249.2 754.7,249.2 754.9,249.2 755.1,249.2 755.2,249.2 755.4,270.7 755.5,249.2 755.7,260.0 755.9,249.2 756.0,260.0 756.2,249.2 756.3,260.0 756.5,260.0 756.7,249.2 756.8,249.2 757.0,249.2 757.1,249.2 757.3,249.2 757.5,292.3 757.6,249.2 757.8,249.2 758.0,249.2 758.1,249.2 758.3,249.2 758.4,260.0 758.6,249.2 758.8,249.2 758.9,249.2 759.1,249.2 759.2,260.0 759.4,249.2 759.6,260.0 759.7,249.2 759.9,249.2 760.0,249.2 760.2,249.2 760.4,249.2 760.5,249.2 760.7,249.2 760.8,270.7 761.0,249.2 761.2,249.2 761.3,260.0 761.5,249.2 761.7,249.2 761.8,249.2 762.0,260.0 762.1,260.0 762.3,270.7 762.5,249.2 762.6,260.0 762.8,249.2 762.9,249.2 763.1,270.7 763.3,260.0 763.4,249.2 763.6,249.2 763.7,249.2 763.9,249.2 764.1,260.0 764.2,249.2 764.4,249.2 764.6,249.2 764.7,260.0 764.9,249.2 765.0,249.2 765.2,281.5 765.4,260.0 765.5,249.2 765.7,260.0 765.8,260.0 766.0,260.0 766.2,249.2 766.3,249.2 766.5,249.2 766.6,281.5 766.8,260.0 767.0,249.2 767.1,260.0 767.3,260.0 767.5,292.3 767.6,260.0 767.8,249.2 767.9,249.2 768.1,270.7 768.3,270.7 768.4,260.0 768.6,260.0 768.7,249.2 768.9,260.0 769.1,270.7 769.2,260.0 769.4,260.0 769.5,249.2 769.7,260.0 769.9,260.0 770.0,249.2 770.2,249.2 770.3,249.2 770.5,292.3 770.7,260.0 770.8,249.2 771.0,249.2 771.2,249.2 771.3,249.2 771.5,260.0 771.6,249.2 771.8,249.2 772.0,249.2 772.1,249.2 772.3,249.2 772.4,249.2 772.6,270.7 772.8,260.0 772.9,260.0 773.1,249.2 773.2,249.2 773.4,249.2 773.6,249.2 773.7,249.2 773.9,249.2 774.1,260.0 774.2,260.0 774.4,260.0 774.5,260.0 774.7,249.2 774.9,249.2 775.0,249.2 775.2,249.2 775.3,249.2 775.5,260.0 775.7,260.0 775.8,249.2 776.0,249.2 776.1,260.0 776.3,249.2 776.5,260.0 776.6,249.2 776.8,270.7 777.0,249.2 777.1,270.7 777.3,249.2 777.4,260.0 777.6,249.2 777.8,260.0 777.9,249.2 778.1,249.2 778.2,249.2 778.4,249.2 778.6,249.2 778.7,260.0 778.9,260.0 779.0,249.2 779.2,249.2 779.4,249.2 779.5,249.2 779.7,260.0 779.8,249.2 780.0,249.2 780.2,249.2 780.3,249.2 780.5,270.7 780.7,249.2 780.8,260.0 781.0,260.0 781.1,249.2 781.3,249.2 781.5,249.2 781.6,249.2 781.8,260.0 781.9,260.0 782.1,249.2 782.3,249.2 782.4,249.2 782.6,249.2 782.7,260.0 782.9,260.0 783.1,249.2 783.2,249.2 783.4,260.0 783.6,249.2 783.7,249.2 783.9,249.2 784.0,260.0 784.2,260.0 784.4,249.2 784.5,260.0 784.7,260.0 784.8,260.0 785.0,281.5 785.2,260.0 785.3,249.2 785.5,249.2 785.6,249.2 785.8,249.2 786.0,249.2 786.1,249.2 786.3,249.2 786.4,249.2 786.6,260.0 786.8,260.0 786.9,260.0 787.1,249.2 787.3,270.7 787.4,260.0 787.6,249.2 787.7,260.0 787.9,260.0 788.1,260.0 788.2,260.0 788.4,249.2 788.5,249.2 788.7,260.0 788.9,249.2 789.0,249.2 789.2,270.7 789.3,249.2 789.5,249.2 789.7,260.0 789.8,260.0 790.0,260.0 790.2,249.2 790.3,249.2 790.5,260.0 790.6,249.2 790.8,270.7 791.0,249.2 791.1,249.2 791.3,249.2 791.4,249.2 791.6,249.2 791.8,249.2 791.9,249.2 792.1,249.2 792.2,249.2 792.4,249.2 792.6,249.2 792.7,260.0 792.9,260.0 793.1,249.2 793.2,249.2 793.4,249.2 793.5,270.7 793.7,249.2 793.9,270.7 794.0,249.2 794.2,260.0 794.3,249.2 794.5,249.2 794.7,260.0 794.8,260.0 795.0,249.2 795.1,249.2 795.3,281.5 795.5,270.7 795.6,260.0 795.8,249.2 795.9,260.0 796.1,260.0 796.3,270.7 796.4,249.2 796.6,249.2 796.8,249.2 796.9,260.0 797.1,270.7 797.2,249.2 797.4,260.0 797.6,260.0 797.7,249.2 797.9,249.2 798.0,260.0 798.2,260.0 798.4,249.2 798.5,270.7 798.7,260.0 798.8,249.2 799.0,260.0 799.2,249.2 799.3,260.0 799.5,249.2 799.7,249.2 799.8,249.2 800.0,249.2 800.1,249.2 800.3,249.2 800.5,249.2 800.6,260.0 800.8,281.5 800.9,249.2 801.1,249.2 801.3,249.2 801.4,249.2 801.6,249.2 801.7,249.2 801.9,260.0 802.1,249.2 802.2,292.3 802.4,249.2 802.5,260.0 802.7,260.0 802.9,249.2 803.0,249.2 803.2,249.2 803.4,260.0 803.5,260.0 803.7,260.0 803.8,260.0 804.0,260.0 804.2,249.2 804.3,270.7 804.5,249.2 804.6,249.2 804.8,249.2 805.0,249.2 805.1,249.2 805.3,260.0 805.4,249.2 805.6,260.0 805.8,270.7 805.9,249.2 806.1,249.2 806.3,249.2 806.4,249.2 806.6,249.2 806.7,249.2 806.9,249.2 807.1,249.2 807.2,260.0 807.4,249.2 807.5,270.7 807.7,260.0 807.9,260.0 808.0,249.2 808.2,270.7 808.3,249.2 808.5,270.7 808.7,260.0 808.8,249.2 809.0,249.2 809.2,270.7 809.3,260.0 809.5,249.2 809.6,260.0 809.8,249.2 810.0,249.2 810.1,249.2 810.3,260.0 810.4,260.0 810.6,260.0 810.8,249.2 810.9,260.0 811.1,249.2 811.2,260.0 811.4,260.0 811.6,260.0 811.7,260.0 811.9,260.0 812.0,249.2 812.2,260.0 812.4,249.2 812.5,249.2 812.7,260.0 812.9,249.2 813.0,260.0 813.2,249.2 813.3,260.0 813.5,249.2 813.7,249.2 813.8,249.2 814.0,260.0 814.1,249.2 814.3,249.2 814.5,249.2 814.6,249.2 814.8,249.2 814.9,260.0 815.1,260.0 815.3,249.2 815.4,249.2 815.6,260.0 815.8,260.0 815.9,260.0 816.1,260.0 816.2,260.0 816.4,260.0 816.6,270.7 816.7,260.0 816.9,249.2 817.0,249.2 817.2,249.2 817.4,249.2 817.5,249.2 817.7,249.2 817.8,249.2 818.0,249.2 818.2,249.2 818.3,249.2 818.5,249.2 818.6,249.2 818.8,270.7 819.0,260.0 819.1,260.0 819.3,249.2 819.5,249.2 819.6,260.0 819.8,249.2 819.9,249.2 820.1,249.2 820.3,270.7 820.4,249.2 820.6,249.2 820.7,260.0 820.9,249.2 821.1,249.2 821.2,249.2 821.4,249.2 821.5,249.2 821.7,260.0 821.9,249.2 822.0,249.2 822.2,260.0 822.4,249.2 822.5,249.2 822.7,249.2 822.8,249.2 823.0,249.2 823.2,249.2 823.3,249.2 823.5,249.2 823.6,260.0 823.8,260.0 824.0,249.2 824.1,249.2 824.3,260.0 824.4,260.0 824.6,249.2 824.8,260.0 824.9,249.2 825.1,260.0 825.2,249.2 825.4,260.0 825.6,270.7 825.7,260.0 825.9,249.2 826.1,249.2 826.2,249.2 826.4,260.0 826.5,249.2 826.7,260.0 826.9,249.2 827.0,249.2 827.2,249.2 827.3,260.0 827.5,260.0 827.7,249.2 827.8,260.0 828.0,249.2 828.1,249.2 828.3,260.0 828.5,260.0 828.6,249.2 828.8,270.7 829.0,249.2 829.1,249.2 829.3,260.0 829.4,260.0 829.6,249.2 829.8,249.2 829.9,260.0 830.1,249.2 830.2,260.0 830.4,249.2 830.6,260.0 830.7,281.5 830.9,281.5 831.0,260.0 831.2,249.2 831.4,260.0 831.5,260.0 831.7,260.0 831.9,260.0 832.0,249.2 832.2,260.0 832.3,249.2 832.5,249.2 832.7,281.5 832.8,249.2 833.0,249.2 833.1,260.0 833.3,249.2 833.5,249.2 833.6,249.2 833.8,260.0 833.9,260.0 834.1,260.0 834.3,260.0 834.4,249.2 834.6,260.0 834.7,249.2 834.9,260.0 835.1,260.0 835.2,281.5 835.4,260.0 835.6,260.0 835.7,249.2 835.9,260.0 836.0,249.2 836.2,260.0 836.4,249.2 836.5,249.2 836.7,249.2 836.8,249.2 837.0,249.2 837.2,249.2 837.3,249.2 837.5,249.2 837.6,270.7 837.8,249.2 838.0,270.7 838.1,281.5 838.3,249.2 838.5,249.2 838.6,249.2 838.8,260.0 838.9,249.2 839.1,260.0 839.3,249.2 839.4,260.0 839.6,249.2 839.7,260.0 839.9,249.2 840.1,249.2 840.2,270.7 840.4,249.2 840.5,249.2 840.7,281.5 840.9,260.0 841.0,270.7 841.2,249.2 841.4,260.0 841.5,260.0 841.7,249.2 841.8,270.7 842.0,260.0 842.2,270.7 842.3,270.7 842.5,249.2 842.6,249.2 842.8,249.2 843.0,260.0 843.1,249.2 843.3,249.2 843.4,260.0 843.6,260.0 843.8,270.7 843.9,260.0 844.1,249.2 844.2,249.2 844.4,260.0 844.6,249.2 844.7,249.2 844.9,249.2 845.1,249.2 845.2,249.2 845.4,249.2 845.5,249.2 845.7,249.2 845.9,270.7 846.0,260.0 846.2,249.2 846.3,249.2 846.5,270.7 846.7,249.2 846.8,249.2 847.0,249.2 847.1,281.5 847.3,260.0 847.5,249.2 847.6,260.0 847.8,281.5 848.0,249.2 848.1,292.3 848.3,249.2 848.4,260.0 848.6,249.2 848.8,249.2 848.9,249.2 849.1,249.2 849.2,249.2 849.4,260.0 849.6,249.2 849.7,260.0 849.9,260.0 850.0,249.2 850.2,260.0 850.4,249.2 850.5,249.2 850.7,260.0 850.8,260.0 851.0,249.2 851.2,249.2 851.3,249.2 851.5,249.2 851.7,270.7 851.8,270.7 852.0,260.0 852.1,260.0 852.3,260.0 852.5,260.0 852.6,260.0 852.8,260.0 852.9,249.2 853.1,249.2 853.3,270.7 853.4,249.2 853.6,249.2 853.7,249.2 853.9,260.0 854.1,270.7 854.2,249.2 854.4,249.2 854.6,260.0 854.7,260.0 854.9,249.2 855.0,249.2 855.2,249.2 855.4,249.2 855.5,260.0 855.7,249.2 855.8,249.2 856.0,249.2 856.2,249.2 856.3,249.2 856.5,249.2 856.6,249.2 856.8,260.0 857.0,249.2 857.1,249.2 857.3,270.7 857.4,260.0 857.6,249.2 857.8,260.0 857.9,249.2 858.1,249.2 858.3,249.2 858.4,249.2 858.6,260.0 858.7,260.0 858.9,249.2 859.1,249.2 859.2,260.0 859.4,249.2 859.5,260.0 859.7,260.0 859.9,249.2 860.0,260.0 860.2,249.2 860.3,260.0 860.5,249.2 860.7,249.2 860.8,249.2 861.0,260.0 861.2,260.0 861.3,260.0 861.5,260.0 861.6,260.0 861.8,260.0 862.0,249.2 862.1,249.2 862.3,249.2 862.4,249.2 862.6,249.2 862.8,249.2 862.9,260.0 863.1,249.2 863.2,249.2 863.4,249.2 863.6,249.2 863.7,260.0 863.9,260.0 864.1,249.2 864.2,249.2 864.4,260.0 864.5,270.7 864.7,249.2 864.9,249.2 865.0,260.0 865.2,249.2 865.3,249.2"/>
<polyline fill="none" stroke="#1170c2" stroke-width="1.1" marker-start="url(#mdb)" marker-mid="url(#mdb)" marker-end="url(#mdb)" points="60.5,346.1 60.7,353.1 60.8,393.8 61.0,394.6 61.1,374.1 61.3,393.5 61.5,375.6 61.6,367.0 61.8,339.6 61.9,344.0 62.1,305.2 62.3,309.5 62.4,277.2 62.6,277.2 62.8,270.7 62.9,270.7 63.1,266.4 63.2,264.3 63.4,262.1 63.6,260.0 63.7,262.1 63.9,257.8 64.0,255.7 64.2,262.1 64.4,260.0 64.5,260.0 64.7,262.1 64.8,264.3 65.0,260.0 65.2,264.3 65.3,264.3 65.5,268.6 65.7,272.9 65.8,270.7 66.0,270.7 66.1,275.0 66.3,275.0 66.5,270.7 66.6,277.2 66.8,275.0 66.9,270.7 67.1,272.9 67.3,275.0 67.4,270.7 67.6,270.7 67.7,272.9 67.9,270.7 68.1,270.7 68.2,275.0 68.4,277.2 68.6,272.9 68.7,268.6 68.9,264.3 69.0,260.0 69.2,260.0 69.4,264.3 69.5,262.1 69.7,264.3 69.8,268.6 70.0,262.1 70.2,260.0 70.3,262.1 70.5,260.0 70.6,262.1 70.8,264.3 71.0,264.3 71.1,262.1 71.3,262.1 71.4,253.5 71.6,251.4 71.8,249.2 71.9,249.2 72.1,253.5 72.3,255.7 72.4,255.7 72.6,255.7 72.7,262.1 72.9,257.8 73.1,260.0 73.2,266.4 73.4,266.4 73.5,260.0 73.7,262.1 73.9,257.8 74.0,251.4 74.2,251.4 74.3,253.5 74.5,251.4 74.7,251.4 74.8,251.4 75.0,251.4 75.2,255.7 75.3,255.7 75.5,255.7 75.6,257.8 75.8,257.8 76.0,253.5 76.1,255.7 76.3,255.7 76.4,253.5 76.6,253.5 76.8,251.4 76.9,249.2 77.1,251.4 77.2,255.7 77.4,257.8 77.6,262.1 77.7,264.3 77.9,262.1 78.0,260.0 78.2,260.0 78.4,255.7 78.5,255.7 78.7,264.3 78.9,264.3 79.0,262.1 79.2,266.4 79.3,275.0 79.5,268.6 79.7,270.7 79.8,275.0 80.0,275.0 80.1,264.3 80.3,262.1 80.5,257.8 80.6,253.5 80.8,249.2 80.9,249.2 81.1,249.2 81.3,249.2 81.4,255.7 81.6,257.8 81.8,264.3 81.9,264.3 82.1,266.4 82.2,260.0 82.4,260.0 82.6,255.7 82.7,255.7 82.9,253.5 83.0,253.5 83.2,251.4 83.4,249.2 83.5,249.2 83.7,249.2 83.8,249.2 84.0,251.4 84.2,251.4 84.3,251.4 84.5,253.5 84.6,253.5 84.8,251.4 85.0,253.5 85.1,255.7 85.3,255.7 85.5,264.3 85.6,268.6 85.8,268.6 85.9,270.7 86.1,272.9 86.3,277.2 86.4,277.2 86.6,277.2 86.7,275.0 86.9,270.7 87.1,257.8 87.2,253.5 87.4,251.4 87.5,249.2 87.7,255.7 87.9,260.0 88.0,262.1 88.2,264.3 88.4,266.4 88.5,262.1 88.7,260.0 88.8,260.0 89.0,257.8 89.2,257.8 89.3,255.7 89.5,253.5 89.6,251.4 89.8,253.5 90.0,253.5 90.1,253.5 90.3,260.0 90.4,266.4 90.6,264.3 90.8,262.1 90.9,262.1 91.1,257.8 91.3,251.4 91.4,251.4 91.6,253.5 91.7,253.5 91.9,253.5 92.1,257.8 92.2,260.0 92.4,260.0 92.5,262.1 92.7,262.1 92.9,260.0 93.0,257.8 93.2,257.8 93.3,257.8 93.5,262.1 93.7,266.4 93.8,266.4 94.0,264.3 94.1,262.1 94.3,255.7 94.5,253.5 94.6,253.5 94.8,253.5 95.0,253.5 95.1,255.7 95.3,251.4 95.4,251.4 95.6,251.4 95.8,253.5 95.9,251.4 96.1,253.5 96.2,255.7 96.4,255.7 96.6,255.7 96.7,264.3 96.9,262.1 97.0,260.0 97.2,260.0 97.4,257.8 97.5,249.2 97.7,251.4 97.9,253.5 98.0,253.5 98.2,255.7 98.3,255.7 98.5,255.7 98.7,253.5 98.8,255.7 99.0,255.7 99.1,264.3 99.3,264.3 99.5,264.3 99.6,262.1 99.8,262.1 99.9,255.7 100.1,253.5 100.3,253.5 100.4,260.0 100.6,257.8 100.8,255.7 100.9,255.7 101.1,255.7 101.2,249.2 101.4,249.2 101.6,249.2 101.7,251.4 101.9,251.4 102.0,251.4 102.2,251.4 102.4,251.4 102.5,251.4 102.7,253.5 102.8,253.5 103.0,253.5 103.2,255.7 103.3,260.0 103.5,257.8 103.6,260.0 103.8,262.1 104.0,260.0 104.1,253.5 104.3,255.7 104.5,253.5 104.6,253.5 104.8,257.8 104.9,262.1 105.1,260.0 105.3,260.0 105.4,264.3 105.6,260.0 105.7,255.7 105.9,257.8 106.1,257.8 106.2,253.5 106.4,255.7 106.5,257.8 106.7,262.1 106.9,262.1 107.0,262.1 107.2,260.0 107.4,257.8 107.5,253.5 107.7,253.5 107.8,253.5 108.0,260.0 108.2,266.4 108.3,268.6 108.5,268.6 108.6,270.7 108.8,264.3 109.0,260.0 109.1,262.1 109.3,262.1 109.4,260.0 109.6,262.1 109.8,262.1 109.9,255.7 110.1,257.8 110.2,255.7 110.4,255.7 110.6,257.8 110.7,257.8 110.9,255.7 111.1,255.7 111.2,253.5 111.4,249.2 111.5,249.2 111.7,249.2 111.9,249.2 112.0,249.2 112.2,251.4 112.3,251.4 112.5,251.4 112.7,255.7 112.8,260.0 113.0,257.8 113.1,257.8 113.3,260.0 113.5,255.7 113.6,251.4 113.8,251.4 114.0,253.5 114.1,251.4 114.3,251.4 114.4,251.4 114.6,253.5 114.8,251.4 114.9,251.4 115.1,253.5 115.2,255.7 115.4,253.5 115.6,255.7 115.7,257.8 115.9,257.8 116.0,255.7 116.2,257.8 116.4,257.8 116.5,255.7 116.7,253.5 116.8,253.5 117.0,251.4 117.2,249.2 117.3,257.8 117.5,260.0 117.7,262.1 117.8,262.1 118.0,264.3 118.1,255.7 118.3,253.5 118.5,251.4 118.6,257.8 118.8,260.0 118.9,260.0 119.1,260.0 119.3,260.0 119.4,253.5 119.6,251.4 119.7,251.4 119.9,251.4 120.1,251.4 120.2,251.4 120.4,249.2 120.6,251.4 120.7,257.8 120.9,260.0 121.0,260.0 121.2,260.0 121.4,257.8 121.5,253.5 121.7,251.4 121.8,253.5 122.0,253.5 122.2,255.7 122.3,255.7 122.5,255.7 122.6,253.5 122.8,253.5 123.0,251.4 123.1,251.4 123.3,253.5 123.5,260.0 123.6,260.0 123.8,260.0 123.9,257.8 124.1,257.8 124.3,253.5 124.4,253.5 124.6,255.7 124.7,257.8 124.9,255.7 125.1,255.7 125.2,255.7 125.4,253.5 125.5,251.4 125.7,255.7 125.9,255.7 126.0,262.1 126.2,262.1 126.3,262.1 126.5,260.0 126.7,257.8 126.8,251.4 127.0,251.4 127.2,257.8 127.3,257.8 127.5,260.0 127.6,264.3 127.8,264.3 128.0,260.0 128.1,266.4 128.3,264.3 128.4,262.1 128.6,262.1 128.8,260.0 128.9,255.7 129.1,255.7 129.2,255.7 129.4,255.7 129.6,255.7 129.7,253.5 129.9,253.5 130.1,253.5 130.2,253.5 130.4,253.5 130.5,251.4 130.7,251.4 130.9,249.2 131.0,249.2 131.2,251.4 131.3,251.4 131.5,251.4 131.7,251.4 131.8,251.4 132.0,251.4 132.1,251.4 132.3,253.5 132.5,255.7 132.6,255.7 132.8,253.5 133.0,253.5 133.1,251.4 133.3,251.4 133.4,251.4 133.6,253.5 133.8,255.7 133.9,255.7 134.1,253.5 134.2,253.5 134.4,251.4 134.6,251.4 134.7,251.4 134.9,251.4 135.0,251.4 135.2,255.7 135.4,253.5 135.5,253.5 135.7,253.5 135.8,253.5 136.0,251.4 136.2,251.4 136.3,251.4 136.5,251.4 136.7,251.4 136.8,249.2 137.0,249.2 137.1,249.2 137.3,253.5 137.5,253.5 137.6,253.5 137.8,255.7 137.9,257.8 138.1,255.7 138.3,262.1 138.4,262.1 138.6,262.1 138.7,262.1 138.9,260.0 139.1,253.5 139.2,253.5 139.4,255.7 139.6,257.8 139.7,268.6 139.9,272.9 140.0,275.0 140.2,272.9 140.4,272.9 140.5,262.1 140.7,257.8 140.8,257.8 141.0,255.7 141.2,255.7 141.3,260.0 141.5,264.3 141.6,272.9 141.8,275.0 142.0,270.7 142.1,270.7 142.3,266.4 142.4,255.7 142.6,260.0 142.8,260.0 142.9,255.7 143.1,255.7 143.3,255.7 143.4,249.2 143.6,251.4 143.7,253.5 143.9,255.7 144.1,255.7 144.2,255.7 144.4,255.7 144.5,253.5 144.7,253.5 144.9,255.7 145.0,255.7 145.2,255.7 145.3,262.1 145.5,264.3 145.7,262.1 145.8,264.3 146.0,262.1 146.2,255.7 146.3,253.5 146.5,253.5 146.6,253.5 146.8,253.5 147.0,253.5 147.1,251.4 147.3,251.4 147.4,251.4 147.6,251.4 147.8,253.5 147.9,253.5 148.1,253.5 148.2,255.7 148.4,260.0 148.6,257.8 148.7,270.7 148.9,272.9 149.0,272.9 149.2,270.7 149.4,270.7 149.5,260.0 149.7,260.0 149.9,255.7 150.0,253.5 150.2,255.7 150.3,262.1 150.5,264.3 150.7,264.3 150.8,264.3 151.0,266.4 151.1,260.0 151.3,255.7 151.5,262.1 151.6,262.1 151.8,260.0 151.9,262.1 152.1,262.1 152.3,257.8 152.4,257.8 152.6,255.7 152.8,251.4 152.9,251.4 153.1,249.2 153.2,249.2 153.4,249.2 153.6,249.2 153.7,253.5 153.9,253.5 154.0,253.5 154.2,255.7 154.4,257.8 154.5,255.7 154.7,257.8 154.8,257.8 155.0,255.7 155.2,253.5 155.3,253.5 155.5,253.5 155.7,253.5 155.8,253.5 156.0,260.0 156.1,260.0 156.3,260.0 156.5,262.1 156.6,262.1 156.8,255.7 156.9,253.5 157.1,251.4 157.3,249.2 157.4,249.2 157.6,249.2 157.7,249.2 157.9,249.2 158.1,249.2 158.2,249.2 158.4,249.2 158.5,249.2 158.7,249.2 158.9,249.2 159.0,251.4 159.2,251.4 159.4,253.5 159.5,253.5 159.7,257.8 159.8,260.0 160.0,260.0 160.2,268.6 160.3,272.9 160.5,270.7 160.6,268.6 160.8,268.6 161.0,260.0 161.1,260.0 161.3,260.0 161.4,270.7 161.6,272.9 161.8,272.9 161.9,270.7 162.1,270.7 162.3,260.0 162.4,260.0 162.6,264.3 162.7,262.1 162.9,260.0 163.1,257.8 163.2,257.8 163.4,260.0 163.5,260.0 163.7,260.0 163.9,260.0 164.0,257.8 164.2,251.4 164.3,253.5 164.5,257.8 164.7,262.1 164.8,264.3 165.0,262.1 165.2,260.0 165.3,255.7 165.5,251.4 165.6,249.2 165.8,249.2 166.0,249.2 166.1,251.4 166.3,251.4 166.4,251.4 166.6,251.4 166.8,251.4 166.9,249.2 167.1,249.2 167.2,255.7 167.4,257.8 167.6,260.0 167.7,260.0 167.9,266.4 168.0,260.0 168.2,260.0 168.4,257.8 168.5,257.8 168.7,253.5 168.9,253.5 169.0,251.4 169.2,251.4 169.3,251.4 169.5,249.2 169.7,251.4 169.8,251.4 170.0,251.4 170.1,251.4 170.3,251.4 170.5,249.2 170.6,249.2 170.8,249.2 170.9,251.4 171.1,251.4 171.3,251.4 171.4,251.4 171.6,251.4 171.8,249.2 171.9,249.2 172.1,249.2 172.2,249.2 172.4,251.4 172.6,264.3 172.7,266.4 172.9,272.9 173.0,277.2 173.2,275.0 173.4,268.6 173.5,268.6 173.7,262.1 173.8,262.1 174.0,270.7 174.2,266.4 174.3,266.4 174.5,266.4 174.6,266.4 174.8,257.8 175.0,255.7 175.1,253.5 175.3,255.7 175.5,251.4 175.6,251.4 175.8,253.5 175.9,253.5 176.1,251.4 176.3,253.5 176.4,255.7 176.6,255.7 176.7,257.8 176.9,260.0 177.1,260.0 177.2,264.3 177.4,264.3 177.5,268.6 177.7,270.7 177.9,270.7 178.0,266.4 178.2,266.4 178.4,260.0 178.5,257.8 178.7,255.7 178.8,253.5 179.0,251.4 179.2,253.5 179.3,253.5 179.5,253.5 179.6,255.7 179.8,257.8 180.0,255.7 180.1,253.5 180.3,253.5 180.4,251.4 180.6,251.4 180.8,255.7 180.9,262.1 181.1,266.4 181.2,268.6 181.4,268.6 181.6,268.6 181.7,262.1 181.9,260.0 182.1,260.0 182.2,257.8 182.4,253.5 182.5,253.5 182.7,251.4 182.9,249.2 183.0,251.4 183.2,253.5 183.3,253.5 183.5,255.7 183.7,257.8 183.8,255.7 184.0,253.5 184.1,253.5 184.3,251.4 184.5,249.2 184.6,253.5 184.8,253.5 185.0,253.5 185.1,255.7 185.3,255.7 185.4,255.7 185.6,262.1 185.8,266.4 185.9,270.7 186.1,272.9 186.2,268.6 186.4,264.3 186.6,260.0 186.7,253.5 186.9,251.4 187.0,257.8 187.2,255.7 187.4,255.7 187.5,255.7 187.7,255.7 187.9,249.2 188.0,249.2 188.2,249.2 188.3,249.2 188.5,249.2 188.7,249.2 188.8,255.7 189.0,257.8 189.1,260.0 189.3,262.1 189.5,262.1 189.6,255.7 189.8,253.5 189.9,251.4 190.1,249.2 190.3,255.7 190.4,257.8 190.6,262.1 190.7,262.1 190.9,262.1 191.1,255.7 191.2,253.5 191.4,251.4 191.6,255.7 191.7,255.7 191.9,255.7 192.0,255.7 192.2,253.5 192.4,249.2 192.5,249.2 192.7,249.2 192.8,251.4 193.0,251.4 193.2,251.4 193.3,251.4 193.5,253.5 193.6,251.4 193.8,253.5 194.0,253.5 194.1,253.5 194.3,251.4 194.5,251.4 194.6,253.5 194.8,253.5 194.9,253.5 195.1,262.1 195.3,262.1 195.4,260.0 195.6,260.0 195.7,262.1 195.9,253.5 196.1,253.5 196.2,251.4 196.4,251.4 196.5,251.4 196.7,251.4 196.9,251.4 197.0,251.4 197.2,251.4 197.4,249.2 197.5,251.4 197.7,251.4 197.8,251.4 198.0,251.4 198.2,260.0 198.3,257.8 198.5,257.8 198.6,257.8 198.8,257.8 199.0,249.2 199.1,251.4 199.3,253.5 199.4,262.1 199.6,264.3 199.8,264.3 199.9,262.1 200.1,260.0 200.2,251.4 200.4,249.2 200.6,249.2 200.7,253.5 200.9,255.7 201.1,255.7 201.2,255.7 201.4,255.7 201.5,255.7 201.7,255.7 201.9,262.1 202.0,262.1 202.2,264.3 202.3,264.3 202.5,268.6 202.7,262.1 202.8,262.1 203.0,262.1 203.1,257.8 203.3,251.4 203.5,251.4 203.6,253.5 203.8,253.5 204.0,255.7 204.1,255.7 204.3,262.1 204.4,260.0 204.6,257.8 204.8,255.7 204.9,257.8 205.1,253.5 205.2,255.7 205.4,257.8 205.6,260.0 205.7,260.0 205.9,257.8 206.0,260.0 206.2,260.0 206.4,257.8 206.5,257.8 206.7,260.0 206.8,262.1 207.0,262.1 207.2,264.3 207.3,262.1 207.5,260.0 207.7,253.5 207.8,253.5 208.0,251.4 208.1,253.5 208.3,255.7 208.5,255.7 208.6,255.7 208.8,257.8 208.9,257.8 209.1,255.7 209.3,257.8 209.4,255.7 209.6,255.7 209.7,253.5 209.9,255.7 210.1,253.5 210.2,255.7 210.4,253.5 210.6,253.5 210.7,253.5 210.9,255.7 211.0,253.5 211.2,253.5 211.4,255.7 211.5,255.7 211.7,255.7 211.8,255.7 212.0,255.7 212.2,253.5 212.3,257.8 212.5,257.8 212.6,257.8 212.8,260.0 213.0,260.0 213.1,253.5 213.3,251.4 213.4,251.4 213.6,251.4 213.8,253.5 213.9,253.5 214.1,253.5 214.3,255.7 214.4,260.0 214.6,257.8 214.7,257.8 214.9,260.0 215.1,257.8 215.2,251.4 215.4,251.4 215.5,251.4 215.7,249.2 215.9,249.2 216.0,251.4 216.2,251.4 216.3,251.4 216.5,251.4 216.7,253.5 216.8,255.7 217.0,257.8 217.2,260.0 217.3,260.0 217.5,257.8 217.6,253.5 217.8,251.4 218.0,257.8 218.1,260.0 218.3,260.0 218.4,260.0 218.6,260.0 218.8,251.4 218.9,249.2 219.1,253.5 219.2,257.8 219.4,262.1 219.6,279.4 219.7,279.4 219.9,275.0 220.1,275.0 220.2,270.7 220.4,260.0 220.5,262.1 220.7,262.1 220.9,260.0 221.0,262.1 221.2,255.7 221.3,253.5 221.5,253.5 221.7,257.8 221.8,255.7 222.0,257.8 222.1,260.0 222.3,262.1 222.5,257.8 222.6,257.8 222.8,257.8 222.9,257.8 223.1,255.7 223.3,257.8 223.4,257.8 223.6,257.8 223.8,255.7 223.9,257.8 224.1,253.5 224.2,255.7 224.4,253.5 224.6,255.7 224.7,255.7 224.9,262.1 225.0,260.0 225.2,262.1 225.4,260.0 225.5,257.8 225.7,251.4 225.8,251.4 226.0,249.2 226.2,257.8 226.3,260.0 226.5,260.0 226.7,264.3 226.8,264.3 227.0,257.8 227.1,257.8 227.3,260.0 227.5,255.7 227.6,255.7 227.8,253.5 227.9,253.5 228.1,253.5 228.3,260.0 228.4,262.1 228.6,262.1 228.7,260.0 228.9,260.0 229.1,255.7 229.2,253.5 229.4,255.7 229.6,257.8 229.7,257.8 229.9,260.0 230.0,264.3 230.2,262.1 230.4,260.0 230.5,270.7 230.7,268.6 230.8,264.3 231.0,264.3 231.2,264.3 231.3,251.4 231.5,249.2 231.6,251.4 231.8,253.5 232.0,253.5 232.1,253.5 232.3,253.5 232.4,251.4 232.6,255.7 232.8,255.7 232.9,255.7 233.1,257.8 233.3,262.1 233.4,255.7 233.6,257.8 233.7,260.0 233.9,257.8 234.1,253.5 234.2,253.5 234.4,251.4 234.5,251.4 234.7,251.4 234.9,255.7 235.0,255.7 235.2,255.7 235.3,253.5 235.5,253.5 235.7,251.4 235.8,253.5 236.0,253.5 236.2,255.7 236.3,255.7 236.5,253.5 236.6,257.8 236.8,257.8 237.0,257.8 237.1,262.1 237.3,262.1 237.4,255.7 237.6,255.7 237.8,260.0 237.9,257.8 238.1,260.0 238.2,262.1 238.4,262.1 238.6,257.8 238.7,255.7 238.9,255.7 239.0,253.5 239.2,257.8 239.4,255.7 239.5,255.7 239.7,255.7 239.9,257.8 240.0,253.5 240.2,255.7 240.3,255.7 240.5,253.5 240.7,253.5 240.8,253.5 241.0,253.5 241.1,253.5 241.3,260.0 241.5,257.8 241.6,257.8 241.8,255.7 241.9,255.7 242.1,249.2 242.3,249.2 242.4,251.4 242.6,253.5 242.8,253.5 242.9,253.5 243.1,253.5 243.2,251.4 243.4,251.4 243.6,253.5 243.7,253.5 243.9,253.5 244.0,253.5 244.2,253.5 244.4,251.4 244.5,251.4 244.7,253.5 244.8,255.7 245.0,253.5 245.2,260.0 245.3,268.6 245.5,266.4 245.6,268.6 245.8,270.7 246.0,264.3 246.1,262.1 246.3,262.1 246.5,257.8 246.6,255.7 246.8,257.8 246.9,251.4 247.1,251.4 247.3,253.5 247.4,255.7 247.6,253.5 247.7,257.8 247.9,257.8 248.1,257.8 248.2,255.7 248.4,255.7 248.5,251.4 248.7,251.4 248.9,249.2 249.0,249.2 249.2,249.2 249.4,251.4 249.5,251.4 249.7,251.4 249.8,251.4 250.0,251.4 250.2,249.2 250.3,249.2 250.5,249.2 250.6,249.2 250.8,249.2 251.0,249.2 251.1,249.2 251.3,249.2 251.4,249.2 251.6,249.2 251.8,249.2 251.9,251.4 252.1,251.4 252.3,253.5 252.4,253.5 252.6,253.5 252.7,251.4 252.9,253.5 253.1,253.5 253.2,255.7 253.4,262.1 253.5,270.7 253.7,268.6 253.9,266.4 254.0,264.3 254.2,257.8 254.3,249.2 254.5,253.5 254.7,253.5 254.8,255.7 255.0,257.8 255.1,260.0 255.3,255.7 255.5,255.7 255.6,253.5 255.8,251.4 256.0,249.2 256.1,249.2 256.3,249.2 256.4,251.4 256.6,251.4 256.8,251.4 256.9,251.4 257.1,253.5 257.2,251.4 257.4,251.4 257.6,251.4 257.7,251.4 257.9,249.2 258.0,249.2 258.2,251.4 258.4,253.5 258.5,253.5 258.7,255.7 258.9,255.7 259.0,253.5 259.2,251.4 259.3,251.4 259.5,249.2 259.7,249.2 259.8,251.4 260.0,251.4 260.1,251.4 260.3,257.8 260.5,257.8 260.6,255.7 260.8,257.8 260.9,257.8 261.1,257.8 261.3,257.8 261.4,257.8 261.6,255.7 261.8,255.7 261.9,251.4 262.1,251.4 262.2,251.4 262.4,253.5 262.6,255.7 262.7,255.7 262.9,257.8 263.0,264.3 263.2,262.1 263.4,260.0 263.5,260.0 263.7,257.8 263.8,251.4 264.0,251.4 264.2,260.0 264.3,257.8 264.5,257.8 264.6,257.8 264.8,260.0 265.0,251.4 265.1,257.8 265.3,264.3 265.5,268.6 265.6,266.4 265.8,266.4 265.9,264.3 266.1,260.0 266.3,257.8 266.4,257.8 266.6,260.0 266.7,255.7 266.9,253.5 267.1,251.4 267.2,260.0 267.4,260.0 267.5,260.0 267.7,260.0 267.9,262.1 268.0,253.5 268.2,253.5 268.4,253.5 268.5,255.7 268.7,255.7 268.8,255.7 269.0,253.5 269.2,257.8 269.3,255.7 269.5,253.5 269.6,255.7 269.8,255.7 270.0,253.5 270.1,253.5 270.3,253.5 270.4,255.7 270.6,255.7 270.8,253.5 270.9,262.1 271.1,262.1 271.2,257.8 271.4,262.1 271.6,262.1 271.7,257.8 271.9,257.8 272.1,262.1 272.2,257.8 272.4,257.8 272.5,253.5 272.7,253.5 272.9,249.2 273.0,251.4 273.2,251.4 273.3,253.5 273.5,255.7 273.7,255.7 273.8,253.5 274.0,253.5 274.1,253.5 274.3,253.5 274.5,253.5 274.6,262.1 274.8,268.6 275.0,266.4 275.1,266.4 275.3,266.4 275.4,257.8 275.6,251.4 275.8,251.4 275.9,251.4 276.1,257.8 276.2,257.8 276.4,260.0 276.6,262.1 276.7,260.0 276.9,253.5 277.0,255.7 277.2,262.1 277.4,260.0 277.5,260.0 277.7,260.0 277.8,257.8 278.0,249.2 278.2,251.4 278.3,251.4 278.5,251.4 278.7,251.4 278.8,251.4 279.0,249.2 279.1,251.4 279.3,257.8 279.5,260.0 279.6,260.0 279.8,262.1 279.9,260.0 280.1,253.5 280.3,255.7 280.4,257.8 280.6,255.7 280.7,255.7 280.9,257.8 281.1,253.5 281.2,251.4 281.4,253.5 281.6,253.5 281.7,251.4 281.9,253.5 282.0,253.5 282.2,251.4 282.4,251.4 282.5,251.4 282.7,249.2 282.8,249.2 283.0,249.2 283.2,251.4 283.3,251.4 283.5,251.4 283.6,251.4 283.8,251.4 284.0,251.4 284.1,257.8 284.3,257.8 284.5,257.8 284.6,260.0 284.8,260.0 284.9,253.5 285.1,253.5 285.3,253.5 285.4,253.5 285.6,255.7 285.7,262.1 285.9,262.1 286.1,262.1 286.2,262.1 286.4,262.1 286.5,268.6 286.7,272.9 286.9,272.9 287.0,275.0 287.2,270.7 287.3,257.8 287.5,255.7 287.7,257.8 287.8,262.1 288.0,262.1 288.2,262.1 288.3,260.0 288.5,257.8 288.6,249.2 288.8,249.2 289.0,249.2 289.1,251.4 289.3,251.4 289.4,251.4 289.6,251.4 289.8,253.5 289.9,251.4 290.1,251.4 290.2,253.5 290.4,255.7 290.6,257.8 290.7,262.1 290.9,270.7 291.1,275.0 291.2,277.2 291.4,275.0 291.5,270.7 291.7,262.1 291.9,255.7 292.0,251.4 292.2,249.2 292.3,249.2 292.5,249.2 292.7,249.2 292.8,251.4 293.0,253.5 293.1,253.5 293.3,253.5 293.5,255.7 293.6,253.5 293.8,251.4 294.0,251.4 294.1,255.7 294.3,253.5 294.4,253.5 294.6,253.5 294.8,253.5 294.9,251.4 295.1,251.4 295.2,251.4 295.4,253.5 295.6,253.5 295.7,251.4 295.9,251.4 296.0,251.4 296.2,249.2 296.4,249.2 296.5,257.8 296.7,257.8 296.8,260.0 297.0,262.1 297.2,262.1 297.3,253.5 297.5,253.5 297.7,253.5 297.8,253.5 298.0,253.5 298.1,255.7 298.3,257.8 298.5,255.7 298.6,253.5 298.8,255.7 298.9,257.8 299.1,257.8 299.3,260.0 299.4,270.7 299.6,268.6 299.7,266.4 299.9,266.4 300.1,264.3 300.2,255.7 300.4,257.8 300.6,255.7 300.7,255.7 300.9,255.7 301.0,253.5 301.2,251.4 301.4,255.7 301.5,253.5 301.7,253.5 301.8,257.8 302.0,257.8 302.2,253.5 302.3,253.5 302.5,257.8 302.6,255.7 302.8,257.8 303.0,260.0 303.1,260.0 303.3,264.3 303.4,262.1 303.6,262.1 303.8,262.1 303.9,268.6 304.1,260.0 304.3,260.0 304.4,257.8 304.6,260.0 304.7,253.5 304.9,255.7 305.1,257.8 305.2,266.4 305.4,264.3 305.5,264.3 305.7,262.1 305.9,260.0 306.0,253.5 306.2,253.5 306.3,253.5 306.5,255.7 306.7,257.8 306.8,255.7 307.0,253.5 307.2,253.5 307.3,253.5 307.5,257.8 307.6,257.8 307.8,260.0 308.0,260.0 308.1,260.0 308.3,255.7 308.4,255.7 308.6,253.5 308.8,255.7 308.9,257.8 309.1,260.0 309.2,277.2 309.4,277.2 309.6,277.2 309.7,277.2 309.9,272.9 310.0,255.7 310.2,255.7 310.4,253.5 310.5,249.2 310.7,249.2 310.9,249.2 311.0,249.2 311.2,249.2 311.3,249.2 311.5,249.2 311.7,251.4 311.8,251.4 312.0,253.5 312.1,255.7 312.3,255.7 312.5,253.5 312.6,253.5 312.8,253.5 312.9,251.4 313.1,251.4 313.3,251.4 313.4,253.5 313.6,253.5 313.8,255.7 313.9,255.7 314.1,255.7 314.2,253.5 314.4,251.4 314.6,249.2 314.7,249.2 314.9,249.2 315.0,251.4 315.2,253.5 315.4,255.7 315.5,257.8 315.7,257.8 315.8,257.8 316.0,255.7 316.2,255.7 316.3,253.5 316.5,253.5 316.7,253.5 316.8,260.0 317.0,257.8 317.1,264.3 317.3,270.7 317.5,268.6 317.6,262.1 317.8,264.3 317.9,262.1 318.1,257.8 318.3,268.6 318.4,272.9 318.6,275.0 318.7,270.7 318.9,268.6 319.1,257.8 319.2,253.5 319.4,251.4 319.5,251.4 319.7,253.5 319.9,253.5 320.0,255.7 320.2,257.8 320.4,257.8 320.5,255.7 320.7,257.8 320.8,255.7 321.0,251.4 321.2,251.4 321.3,251.4 321.5,249.2 321.6,251.4 321.8,251.4 322.0,251.4 322.1,251.4 322.3,251.4 322.4,249.2 322.6,251.4 322.8,251.4 322.9,251.4 323.1,253.5 323.3,253.5 323.4,251.4 323.6,251.4 323.7,251.4 323.9,249.2 324.1,249.2 324.2,249.2 324.4,249.2 324.5,251.4 324.7,251.4 324.9,251.4 325.0,253.5 325.2,253.5 325.3,253.5 325.5,255.7 325.7,255.7 325.8,255.7 326.0,255.7 326.2,257.8 326.3,257.8 326.5,257.8 326.6,257.8 326.8,257.8 327.0,253.5 327.1,253.5 327.3,255.7 327.4,268.6 327.6,268.6 327.8,272.9 327.9,275.0 328.1,275.0 328.2,262.1 328.4,264.3 328.6,260.0 328.7,255.7 328.9,253.5 329.0,251.4 329.2,249.2 329.4,251.4 329.5,251.4 329.7,253.5 329.9,253.5 330.0,255.7 330.2,253.5 330.3,255.7 330.5,253.5 330.7,253.5 330.8,251.4 331.0,251.4 331.1,249.2 331.3,251.4 331.5,251.4 331.6,253.5 331.8,253.5 331.9,253.5 332.1,255.7 332.3,255.7 332.4,253.5 332.6,253.5 332.8,253.5 332.9,249.2 333.1,255.7 333.2,255.7 333.4,257.8 333.6,260.0 333.7,260.0 333.9,262.1 334.0,264.3 334.2,262.1 334.4,268.6 334.5,268.6 334.7,260.0 334.8,257.8 335.0,257.8 335.2,251.4 335.3,251.4 335.5,251.4 335.6,251.4 335.8,251.4 336.0,251.4 336.1,253.5 336.3,255.7 336.5,255.7 336.6,255.7 336.8,255.7 336.9,253.5 337.1,251.4 337.3,251.4 337.4,251.4 337.6,251.4 337.7,251.4 337.9,251.4 338.1,251.4 338.2,251.4 338.4,255.7 338.5,264.3 338.7,264.3 338.9,264.3 339.0,266.4 339.2,260.0 339.4,251.4 339.5,253.5 339.7,253.5 339.8,251.4 340.0,251.4 340.2,255.7 340.3,257.8 340.5,262.1 340.6,272.9 340.8,272.9 341.0,272.9 341.1,272.9 341.3,268.6 341.4,260.0 341.6,262.1 341.8,257.8 341.9,253.5 342.1,255.7 342.2,255.7 342.4,253.5 342.6,257.8 342.7,257.8 342.9,257.8 343.1,255.7 343.2,257.8 343.4,253.5 343.5,260.0 343.7,257.8 343.9,257.8 344.0,257.8 344.2,264.3 344.3,260.0 344.5,260.0 344.7,260.0 344.8,262.1 345.0,255.7 345.1,253.5 345.3,253.5 345.5,260.0 345.6,255.7 345.8,257.8 346.0,257.8 346.1,257.8 346.3,253.5 346.4,255.7 346.6,253.5 346.8,255.7 346.9,257.8 347.1,255.7 347.2,255.7 347.4,257.8 347.6,255.7 347.7,253.5 347.9,253.5 348.0,251.4 348.2,249.2 348.4,249.2 348.5,249.2 348.7,249.2 348.9,249.2 349.0,249.2 349.2,249.2 349.3,251.4 349.5,253.5 349.7,253.5 349.8,255.7 350.0,255.7 350.1,253.5 350.3,251.4 350.5,251.4 350.6,251.4 350.8,253.5 350.9,253.5 351.1,253.5 351.3,253.5 351.4,253.5 351.6,257.8 351.7,257.8 351.9,257.8 352.1,257.8 352.2,255.7 352.4,249.2 352.6,251.4 352.7,251.4 352.9,251.4 353.0,255.7 353.2,257.8 353.4,257.8 353.5,257.8 353.7,257.8 353.8,255.7 354.0,253.5 354.2,251.4 354.3,251.4 354.5,253.5 354.6,251.4 354.8,253.5 355.0,255.7 355.1,255.7 355.3,253.5 355.5,253.5 355.6,253.5 355.8,253.5 355.9,253.5 356.1,253.5 356.3,255.7 356.4,253.5 356.6,251.4 356.7,251.4 356.9,253.5 357.1,251.4 357.2,253.5 357.4,253.5 357.5,255.7 357.7,260.0 357.9,260.0 358.0,257.8 358.2,257.8 358.4,255.7 358.5,251.4 358.7,251.4 358.8,251.4 359.0,253.5 359.2,255.7 359.3,253.5 359.5,253.5 359.6,260.0 359.8,260.0 360.0,260.0 360.1,260.0 360.3,260.0 360.4,255.7 360.6,253.5 360.8,255.7 360.9,255.7 361.1,257.8 361.2,255.7 361.4,255.7 361.6,251.4 361.7,251.4 361.9,249.2 362.1,249.2 362.2,251.4 362.4,260.0 362.5,264.3 362.7,264.3 362.9,264.3 363.0,262.1 363.2,257.8 363.3,253.5 363.5,253.5 363.7,253.5 363.8,253.5 364.0,249.2 364.1,249.2 364.3,249.2 364.5,251.4 364.6,253.5 364.8,255.7 365.0,257.8 365.1,257.8 365.3,255.7 365.4,255.7 365.6,253.5 365.8,251.4 365.9,251.4 366.1,251.4 366.2,249.2 366.4,249.2 366.6,251.4 366.7,251.4 366.9,251.4 367.0,251.4 367.2,251.4 367.4,251.4 367.5,251.4 367.7,251.4 367.8,251.4 368.0,251.4 368.2,249.2 368.3,249.2 368.5,249.2 368.7,251.4 368.8,257.8 369.0,260.0 369.1,260.0 369.3,260.0 369.5,264.3 369.6,264.3 369.8,264.3 369.9,266.4 370.1,266.4 370.3,260.0 370.4,253.5 370.6,253.5 370.7,251.4 370.9,251.4 371.1,253.5 371.2,255.7 371.4,253.5 371.6,253.5 371.7,255.7 371.9,253.5 372.0,251.4 372.2,251.4 372.4,253.5 372.5,251.4 372.7,251.4 372.8,251.4 373.0,257.8 373.2,255.7 373.3,255.7 373.5,255.7 373.6,255.7 373.8,251.4 374.0,251.4 374.1,251.4 374.3,251.4 374.4,253.5 374.6,251.4 374.8,253.5 374.9,253.5 375.1,253.5 375.3,251.4 375.4,253.5 375.6,253.5 375.7,253.5 375.9,253.5 376.1,255.7 376.2,255.7 376.4,260.0 376.5,262.1 376.7,266.4 376.9,264.3 377.0,262.1 377.2,255.7 377.3,253.5 377.5,249.2 377.7,249.2 377.8,249.2 378.0,249.2 378.2,251.4 378.3,251.4 378.5,251.4 378.6,255.7 378.8,257.8 379.0,255.7 379.1,255.7 379.3,257.8 379.4,255.7 379.6,253.5 379.8,255.7 379.9,260.0 380.1,260.0 380.2,257.8 380.4,257.8 380.6,255.7 380.7,251.4 380.9,251.4 381.1,251.4 381.2,251.4 381.4,257.8 381.5,257.8 381.7,257.8 381.9,260.0 382.0,260.0 382.2,253.5 382.3,253.5 382.5,251.4 382.7,249.2 382.8,249.2 383.0,249.2 383.1,249.2 383.3,249.2 383.5,249.2 383.6,249.2 383.8,249.2 383.9,249.2 384.1,249.2 384.3,249.2 384.4,249.2 384.6,249.2 384.8,249.2 384.9,251.4 385.1,257.8 385.2,257.8 385.4,260.0 385.6,264.3 385.7,262.1 385.9,257.8 386.0,257.8 386.2,260.0 386.4,257.8 386.5,257.8 386.7,257.8 386.8,260.0 387.0,257.8 387.2,257.8 387.3,268.6 387.5,266.4 387.7,264.3 387.8,266.4 388.0,264.3 388.1,253.5 388.3,253.5 388.5,255.7 388.6,251.4 388.8,257.8 388.9,264.3 389.1,264.3 389.3,262.1 389.4,262.1 389.6,255.7 389.7,249.2 389.9,249.2 390.1,249.2 390.2,249.2 390.4,251.4 390.6,251.4 390.7,251.4 390.9,253.5 391.0,255.7 391.2,255.7 391.4,257.8 391.5,257.8 391.7,257.8 391.8,255.7 392.0,255.7 392.2,255.7 392.3,255.7 392.5,257.8 392.6,257.8 392.8,257.8 393.0,255.7 393.1,255.7 393.3,251.4 393.4,251.4 393.6,249.2 393.8,249.2 393.9,251.4 394.1,260.0 394.3,260.0 394.4,260.0 394.6,260.0 394.7,257.8 394.9,249.2 395.1,249.2 395.2,249.2 395.4,249.2 395.5,251.4 395.7,251.4 395.9,255.7 396.0,257.8 396.2,260.0 396.3,262.1 396.5,264.3 396.7,260.0 396.8,260.0 397.0,260.0 397.2,257.8 397.3,255.7 397.5,255.7 397.6,253.5 397.8,251.4 398.0,249.2 398.1,249.2 398.3,251.4 398.4,251.4 398.6,253.5 398.8,255.7 398.9,255.7 399.1,253.5 399.2,255.7 399.4,255.7 399.6,255.7 399.7,255.7 399.9,255.7 400.0,255.7 400.2,255.7 400.4,260.0 400.5,260.0 400.7,260.0 400.9,257.8 401.0,257.8 401.2,251.4 401.3,253.5 401.5,255.7 401.7,257.8 401.8,255.7 402.0,255.7 402.1,255.7 402.3,253.5 402.5,251.4 402.6,251.4 402.8,253.5 402.9,251.4 403.1,251.4 403.3,251.4 403.4,251.4 403.6,251.4 403.8,253.5 403.9,253.5 404.1,255.7 404.2,255.7 404.4,255.7 404.6,253.5 404.7,255.7 404.9,255.7 405.0,257.8 405.2,260.0 405.4,260.0 405.5,260.0 405.7,257.8 405.8,255.7 406.0,251.4 406.2,260.0 406.3,257.8 406.5,257.8 406.7,257.8 406.8,257.8 407.0,253.5 407.1,255.7 407.3,262.1 407.5,262.1 407.6,262.1 407.8,260.0 407.9,257.8 408.1,251.4 408.3,251.4 408.4,251.4 408.6,249.2 408.7,249.2 408.9,251.4 409.1,251.4 409.2,251.4 409.4,253.5 409.5,253.5 409.7,251.4 409.9,251.4 410.0,251.4 410.2,251.4 410.4,251.4 410.5,251.4 410.7,251.4 410.8,251.4 411.0,251.4 411.2,251.4 411.3,251.4 411.5,251.4 411.6,251.4 411.8,249.2 412.0,251.4 412.1,251.4 412.3,251.4 412.4,251.4 412.6,251.4 412.8,249.2 412.9,249.2 413.1,251.4 413.3,253.5 413.4,253.5 413.6,253.5 413.7,255.7 413.9,253.5 414.1,251.4 414.2,251.4 414.4,251.4 414.5,249.2 414.7,249.2 414.9,249.2 415.0,249.2 415.2,249.2 415.3,249.2 415.5,249.2 415.7,251.4 415.8,260.0 416.0,260.0 416.1,260.0 416.3,260.0 416.5,257.8 416.6,251.4 416.8,251.4 417.0,251.4 417.1,253.5 417.3,253.5 417.4,253.5 417.6,253.5 417.8,253.5 417.9,253.5 418.1,253.5 418.2,253.5 418.4,253.5 418.6,255.7 418.7,257.8 418.9,260.0 419.0,257.8 419.2,257.8 419.4,264.3 419.5,260.0 419.7,257.8 419.9,257.8 420.0,257.8 420.2,249.2 420.3,249.2 420.5,249.2 420.7,249.2 420.8,249.2 421.0,251.4 421.1,251.4 421.3,251.4 421.5,255.7 421.6,255.7 421.8,255.7 421.9,255.7 422.1,255.7 422.3,251.4 422.4,251.4 422.6,249.2 422.8,251.4 422.9,253.5 423.1,253.5 423.2,253.5 423.4,253.5 423.6,251.4 423.7,251.4 423.9,251.4 424.0,251.4 424.2,251.4 424.4,251.4 424.5,249.2 424.7,251.4 424.8,251.4 425.0,251.4 425.2,253.5 425.3,255.7 425.5,255.7 425.6,257.8 425.8,257.8 426.0,257.8 426.1,255.7 426.3,253.5 426.5,253.5 426.6,255.7 426.8,255.7 426.9,255.7 427.1,257.8 427.3,255.7 427.4,255.7 427.6,253.5 427.7,253.5 427.9,253.5 428.1,253.5 428.2,251.4 428.4,251.4 428.5,255.7 428.7,255.7 428.9,255.7 429.0,255.7 429.2,255.7 429.4,253.5 429.5,251.4 429.7,251.4 429.8,251.4 430.0,253.5 430.2,251.4 430.3,251.4 430.5,253.5 430.6,253.5 430.8,253.5 431.0,253.5 431.1,253.5 431.3,253.5 431.4,253.5 431.6,251.4 431.8,255.7 431.9,255.7 432.1,253.5 432.2,253.5 432.4,253.5 432.6,249.2 432.7,249.2 432.9,249.2 433.1,251.4 433.2,251.4 433.4,253.5 433.5,253.5 433.7,253.5 433.9,253.5 434.0,255.7 434.2,253.5 434.3,255.7 434.5,255.7 434.7,253.5 434.8,257.8 435.0,257.8 435.1,260.0 435.3,260.0 435.5,262.1 435.6,255.7 435.8,257.8 436.0,253.5 436.1,253.5 436.3,253.5 436.4,253.5 436.6,251.4 436.8,253.5 436.9,253.5 437.1,251.4 437.2,251.4 437.4,253.5 437.6,251.4 437.7,253.5 437.9,253.5 438.0,257.8 438.2,255.7 438.4,255.7 438.5,253.5 438.7,253.5 438.8,249.2 439.0,249.2 439.2,251.4 439.3,251.4 439.5,251.4 439.7,251.4 439.8,253.5 440.0,253.5 440.1,257.8 440.3,257.8 440.5,257.8 440.6,255.7 440.8,253.5 440.9,249.2 441.1,249.2 441.3,249.2 441.4,249.2 441.6,249.2 441.7,249.2 441.9,249.2 442.1,251.4 442.2,255.7 442.4,257.8 442.6,268.6 442.7,272.9 442.9,275.0 443.0,275.0 443.2,272.9 443.4,264.3 443.5,260.0 443.7,255.7 443.8,251.4 444.0,253.5 444.2,253.5 444.3,255.7 444.5,255.7 444.6,255.7 444.8,253.5 445.0,251.4 445.1,249.2 445.3,249.2 445.5,249.2 445.6,249.2 445.8,249.2 445.9,249.2 446.1,249.2 446.3,249.2 446.4,249.2 446.6,251.4 446.7,251.4 446.9,251.4 447.1,251.4 447.2,251.4 447.4,249.2 447.5,249.2 447.7,249.2 447.9,249.2 448.0,251.4 448.2,253.5 448.3,253.5 448.5,253.5 448.7,253.5 448.8,251.4 449.0,251.4 449.2,253.5 449.3,255.7 449.5,255.7 449.6,260.0 449.8,262.1 450.0,260.0 450.1,260.0 450.3,260.0 450.4,255.7 450.6,251.4 450.8,251.4 450.9,249.2 451.1,249.2 451.2,251.4 451.4,251.4 451.6,253.5 451.7,255.7 451.9,255.7 452.1,255.7 452.2,255.7 452.4,257.8 452.5,257.8 452.7,257.8 452.9,257.8 453.0,257.8 453.2,255.7 453.3,255.7 453.5,255.7 453.7,255.7 453.8,255.7 454.0,255.7 454.1,253.5 454.3,255.7 454.5,253.5 454.6,253.5 454.8,251.4 455.0,257.8 455.1,255.7 455.3,255.7 455.4,255.7 455.6,257.8 455.8,251.4 455.9,253.5 456.1,253.5 456.2,255.7 456.4,253.5 456.6,255.7 456.7,253.5 456.9,253.5 457.0,253.5 457.2,253.5 457.4,251.4 457.5,253.5 457.7,253.5 457.8,251.4 458.0,251.4 458.2,251.4 458.3,249.2 458.5,251.4 458.7,251.4 458.8,251.4 459.0,251.4 459.1,253.5 459.3,251.4 459.5,251.4 459.6,251.4 459.8,251.4 459.9,251.4 460.1,253.5 460.3,253.5 460.4,257.8 460.6,257.8 460.7,255.7 460.9,253.5 461.1,257.8 461.2,253.5 461.4,255.7 461.6,257.8 461.7,260.0 461.9,262.1 462.0,266.4 462.2,266.4 462.4,264.3 462.5,264.3 462.7,257.8 462.8,253.5 463.0,251.4 463.2,251.4 463.3,251.4 463.5,255.7 463.6,257.8 463.8,257.8 464.0,257.8 464.1,257.8 464.3,255.7 464.4,253.5 464.6,253.5 464.8,255.7 464.9,253.5 465.1,251.4 465.3,251.4 465.4,251.4 465.6,249.2 465.7,249.2 465.9,249.2 466.1,253.5 466.2,257.8 466.4,270.7 466.5,272.9 466.7,277.2 466.9,275.0 467.0,270.7 467.2,257.8 467.3,255.7 467.5,251.4 467.7,249.2 467.8,251.4 468.0,253.5 468.2,253.5 468.3,253.5 468.5,253.5 468.6,251.4 468.8,249.2 469.0,257.8 469.1,257.8 469.3,257.8 469.4,266.4 469.6,266.4 469.8,257.8 469.9,257.8 470.1,257.8 470.2,249.2 470.4,251.4 470.6,253.5 470.7,253.5 470.9,253.5 471.0,255.7 471.2,253.5 471.4,253.5 471.5,255.7 471.7,255.7 471.9,253.5 472.0,253.5 472.2,251.4 472.3,253.5 472.5,255.7 472.7,255.7 472.8,255.7 473.0,255.7 473.1,253.5 473.3,253.5 473.5,253.5 473.6,255.7 473.8,257.8 473.9,257.8 474.1,255.7 474.3,255.7 474.4,255.7 474.6,253.5 474.8,251.4 474.9,251.4 475.1,251.4 475.2,251.4 475.4,251.4 475.6,260.0 475.7,260.0 475.9,262.1 476.0,260.0 476.2,262.1 476.4,255.7 476.5,255.7 476.7,255.7 476.8,255.7 477.0,253.5 477.2,251.4 477.3,253.5 477.5,253.5 477.7,257.8 477.8,257.8 478.0,257.8 478.1,255.7 478.3,253.5 478.5,251.4 478.6,253.5 478.8,253.5 478.9,253.5 479.1,253.5 479.3,251.4 479.4,249.2 479.6,249.2 479.7,249.2 479.9,251.4 480.1,251.4 480.2,251.4 480.4,251.4 480.5,260.0 480.7,264.3 480.9,264.3 481.0,264.3 481.2,266.4 481.4,257.8 481.5,253.5 481.7,253.5 481.8,253.5 482.0,251.4 482.2,251.4 482.3,251.4 482.5,251.4 482.6,251.4 482.8,251.4 483.0,255.7 483.1,255.7 483.3,257.8 483.4,268.6 483.6,270.7 483.8,270.7 483.9,272.9 484.1,270.7 484.3,264.3 484.4,264.3 484.6,260.0 484.7,262.1 484.9,264.3 485.1,260.0 485.2,257.8 485.4,257.8 485.5,253.5 485.7,253.5 485.9,255.7 486.0,255.7 486.2,255.7 486.3,255.7 486.5,253.5 486.7,257.8 486.8,257.8 487.0,260.0 487.2,260.0 487.3,260.0 487.5,255.7 487.6,257.8 487.8,255.7 488.0,253.5 488.1,255.7 488.3,253.5 488.4,255.7 488.6,257.8 488.8,257.8 488.9,257.8 489.1,264.3 489.2,262.1 489.4,260.0 489.6,264.3 489.7,266.4 489.9,260.0 490.0,257.8 490.2,257.8 490.4,253.5 490.5,249.2 490.7,251.4 490.9,251.4 491.0,251.4 491.2,257.8 491.3,257.8 491.5,257.8 491.7,260.0 491.8,260.0 492.0,253.5 492.1,255.7 492.3,253.5 492.5,253.5 492.6,253.5 492.8,253.5 492.9,251.4 493.1,251.4 493.3,249.2 493.4,251.4 493.6,253.5 493.8,255.7 493.9,260.0 494.1,264.3 494.2,264.3 494.4,262.1 494.6,260.0 494.7,255.7 494.9,251.4 495.0,249.2 495.2,249.2 495.4,249.2 495.5,251.4 495.7,251.4 495.8,251.4 496.0,253.5 496.2,253.5 496.3,253.5 496.5,255.7 496.6,255.7 496.8,253.5 497.0,253.5 497.1,251.4 497.3,251.4 497.5,253.5 497.6,253.5 497.8,253.5 497.9,255.7 498.1,255.7 498.3,253.5 498.4,253.5 498.6,253.5 498.7,253.5 498.9,251.4 499.1,257.8 499.2,257.8 499.4,257.8 499.5,255.7 499.7,257.8 499.9,251.4 500.0,253.5 500.2,253.5 500.4,253.5 500.5,251.4 500.7,253.5 500.8,255.7 501.0,255.7 501.2,255.7 501.3,260.0 501.5,257.8 501.6,253.5 501.8,253.5 502.0,253.5 502.1,249.2 502.3,249.2 502.4,249.2 502.6,249.2 502.8,249.2 502.9,249.2 503.1,251.4 503.2,251.4 503.4,251.4 503.6,253.5 503.7,255.7 503.9,253.5 504.1,253.5 504.2,253.5 504.4,251.4 504.5,249.2 504.7,249.2 504.9,249.2 505.0,251.4 505.2,251.4 505.3,253.5 505.5,255.7 505.7,255.7 505.8,255.7 506.0,257.8 506.1,255.7 506.3,257.8 506.5,257.8 506.6,255.7 506.8,255.7 507.0,257.8 507.1,255.7 507.3,257.8 507.4,262.1 507.6,262.1 507.8,264.3 507.9,268.6 508.1,266.4 508.2,262.1 508.4,260.0 508.6,255.7 508.7,249.2 508.9,249.2 509.0,249.2 509.2,249.2 509.4,249.2 509.5,249.2 509.7,249.2 509.9,251.4 510.0,251.4 510.2,251.4 510.3,251.4 510.5,251.4 510.7,249.2 510.8,251.4 511.0,253.5 511.1,255.7 511.3,255.7 511.5,255.7 511.6,255.7 511.8,255.7 511.9,253.5 512.1,253.5 512.3,253.5 512.4,251.4 512.6,253.5 512.7,253.5 512.9,253.5 513.1,253.5 513.2,257.8 513.4,255.7 513.6,255.7 513.7,255.7 513.9,260.0 514.0,260.0 514.2,257.8 514.4,270.7 514.5,275.0 514.7,272.9 514.8,272.9 515.0,272.9 515.2,268.6 515.3,264.3 515.5,262.1 515.6,260.0 515.8,260.0 516.0,255.7 516.1,255.7 516.3,257.8 516.5,255.7 516.6,255.7 516.8,253.5 516.9,255.7 517.1,253.5 517.3,255.7 517.4,255.7 517.6,253.5 517.7,253.5 517.9,255.7 518.1,253.5 518.2,253.5 518.4,255.7 518.5,255.7 518.7,253.5 518.9,253.5 519.0,255.7 519.2,255.7 519.4,255.7 519.5,255.7 519.7,255.7 519.8,255.7 520.0,255.7 520.2,255.7 520.3,255.7 520.5,257.8 520.6,255.7 520.8,253.5 521.0,251.4 521.1,253.5 521.3,251.4 521.4,253.5 521.6,255.7 521.8,255.7 521.9,255.7 522.1,255.7 522.2,253.5 522.4,253.5 522.6,255.7 522.7,253.5 522.9,255.7 523.1,257.8 523.2,260.0 523.4,257.8 523.5,257.8 523.7,257.8 523.9,255.7 524.0,255.7 524.2,255.7 524.3,257.8 524.5,257.8 524.7,257.8 524.8,253.5 525.0,253.5 525.1,251.4 525.3,251.4 525.5,251.4 525.6,253.5 525.8,253.5 526.0,253.5 526.1,251.4 526.3,251.4 526.4,249.2 526.6,249.2 526.8,251.4 526.9,255.7 527.1,255.7 527.2,255.7 527.4,255.7 527.6,260.0 527.7,255.7 527.9,257.8 528.0,260.0 528.2,262.1 528.4,255.7 528.5,257.8 528.7,257.8 528.8,255.7 529.0,255.7 529.2,255.7 529.3,253.5 529.5,251.4 529.7,253.5 529.8,251.4 530.0,251.4 530.1,251.4 530.3,251.4 530.5,249.2 530.6,249.2 530.8,249.2 530.9,249.2 531.1,249.2 531.3,249.2 531.4,251.4 531.6,251.4 531.7,251.4 531.9,251.4 532.1,253.5 532.2,251.4 532.4,253.5 532.6,257.8 532.7,262.1 532.9,262.1 533.0,264.3 533.2,262.1 533.4,262.1 533.5,260.0 533.7,260.0 533.8,260.0 534.0,262.1 534.2,257.8 534.3,257.8 534.5,257.8 534.6,255.7 534.8,255.7 535.0,255.7 535.1,255.7 535.3,253.5 535.4,255.7 535.6,255.7 535.8,257.8 535.9,255.7 536.1,257.8 536.3,255.7 536.4,253.5 536.6,251.4 536.7,251.4 536.9,251.4 537.1,255.7 537.2,255.7 537.4,257.8 537.5,260.0 537.7,260.0 537.9,255.7 538.0,257.8 538.2,257.8 538.3,257.8 538.5,255.7 538.7,257.8 538.8,257.8 539.0,257.8 539.2,257.8 539.3,257.8 539.5,257.8 539.6,257.8 539.8,255.7 540.0,253.5 540.1,255.7 540.3,255.7 540.4,253.5 540.6,253.5 540.8,253.5 540.9,251.4 541.1,249.2 541.2,251.4 541.4,251.4 541.6,251.4 541.7,251.4 541.9,251.4 542.1,251.4 542.2,251.4 542.4,251.4 542.5,251.4 542.7,251.4 542.9,249.2 543.0,249.2 543.2,249.2 543.3,249.2 543.5,251.4 543.7,251.4 543.8,251.4 544.0,251.4 544.1,251.4 544.3,253.5 544.5,253.5 544.6,255.7 544.8,255.7 544.9,255.7 545.1,257.8 545.3,257.8 545.4,255.7 545.6,260.0 545.8,262.1 545.9,255.7 546.1,255.7 546.2,255.7 546.4,251.4 546.6,251.4 546.7,251.4 546.9,251.4 547.0,253.5 547.2,260.0 547.4,257.8 547.5,257.8 547.7,257.8 547.8,255.7 548.0,249.2 548.2,249.2 548.3,249.2 548.5,249.2 548.7,249.2 548.8,249.2 549.0,251.4 549.1,251.4 549.3,251.4 549.5,253.5 549.6,255.7 549.8,253.5 549.9,253.5 550.1,257.8 550.3,255.7 550.4,253.5 550.6,253.5 550.7,255.7 550.9,251.4 551.1,255.7 551.2,255.7 551.4,257.8 551.6,257.8 551.7,262.1 551.9,257.8 552.0,262.1 552.2,260.0 552.4,260.0 552.5,255.7 552.7,255.7 552.8,251.4 553.0,251.4 553.2,249.2 553.3,251.4 553.5,251.4 553.6,253.5 553.8,260.0 554.0,262.1 554.1,260.0 554.3,264.3 554.4,262.1 554.6,255.7 554.8,253.5 554.9,253.5 555.1,251.4 555.3,253.5 555.4,253.5 555.6,253.5 555.7,253.5 555.9,251.4 556.1,249.2 556.2,249.2 556.4,249.2 556.5,249.2 556.7,249.2 556.9,251.4 557.0,253.5 557.2,253.5 557.3,255.7 557.5,257.8 557.7,257.8 557.8,257.8 558.0,257.8 558.2,255.7 558.3,255.7 558.5,255.7 558.6,253.5 558.8,255.7 559.0,257.8 559.1,255.7 559.3,253.5 559.4,260.0 559.6,260.0 559.8,260.0 559.9,260.0 560.1,262.1 560.2,262.1 560.4,262.1 560.6,262.1 560.7,266.4 560.9,266.4 561.0,264.3 561.2,262.1 561.4,260.0 561.5,255.7 561.7,260.0 561.9,257.8 562.0,257.8 562.2,260.0 562.3,260.0 562.5,253.5 562.7,251.4 562.8,253.5 563.0,251.4 563.1,253.5 563.3,253.5 563.5,253.5 563.6,251.4 563.8,251.4 563.9,249.2 564.1,251.4 564.3,253.5 564.4,253.5 564.6,253.5 564.8,255.7 564.9,253.5 565.1,253.5 565.2,253.5 565.4,253.5 565.6,251.4 565.7,251.4 565.9,253.5 566.0,253.5 566.2,253.5 566.4,255.7 566.5,257.8 566.7,255.7 566.8,255.7 567.0,255.7 567.2,260.0 567.3,266.4 567.5,264.3 567.7,266.4 567.8,268.6 568.0,262.1 568.1,253.5 568.3,253.5 568.5,253.5 568.6,251.4 568.8,251.4 568.9,251.4 569.1,251.4 569.3,253.5 569.4,253.5 569.6,253.5 569.7,257.8 569.9,257.8 570.1,255.7 570.2,255.7 570.4,257.8 570.5,253.5 570.7,253.5 570.9,255.7 571.0,255.7 571.2,253.5 571.4,253.5 571.5,255.7 571.7,251.4 571.8,253.5 572.0,255.7 572.2,262.1 572.3,268.6 572.5,270.7 572.6,268.6 572.8,266.4 573.0,260.0 573.1,253.5 573.3,253.5 573.4,255.7 573.6,255.7 573.8,255.7 573.9,255.7 574.1,255.7 574.3,255.7 574.4,257.8 574.6,260.0 574.7,257.8 574.9,255.7 575.1,253.5 575.2,251.4 575.4,251.4 575.5,253.5 575.7,253.5 575.9,253.5 576.0,257.8 576.2,257.8 576.3,255.7 576.5,257.8 576.7,260.0 576.8,260.0 577.0,260.0 577.1,262.1 577.3,260.0 577.5,257.8 577.6,262.1 577.8,260.0 578.0,260.0 578.1,262.1 578.3,264.3 578.4,257.8 578.6,262.1 578.8,260.0 578.9,260.0 579.1,262.1 579.2,262.1 579.4,260.0 579.6,262.1 579.7,260.0 579.9,255.7 580.0,253.5 580.2,253.5 580.4,251.4 580.5,251.4 580.7,253.5 580.9,253.5 581.0,251.4 581.2,251.4 581.3,253.5 581.5,253.5 581.7,257.8 581.8,260.0 582.0,260.0 582.1,266.4 582.3,264.3 582.5,262.1 582.6,260.0 582.8,262.1 582.9,253.5 583.1,255.7 583.3,253.5 583.4,253.5 583.6,253.5 583.8,255.7 583.9,253.5 584.1,255.7 584.2,260.0 584.4,257.8 584.6,257.8 584.7,257.8 584.9,257.8 585.0,253.5 585.2,253.5 585.4,251.4 585.5,251.4 585.7,249.2 585.8,251.4 586.0,253.5 586.2,255.7 586.3,260.0 586.5,260.0 586.6,260.0 586.8,262.1 587.0,266.4 587.1,262.1 587.3,262.1 587.5,260.0 587.6,255.7 587.8,249.2 587.9,251.4 588.1,251.4 588.3,251.4 588.4,251.4 588.6,253.5 588.7,253.5 588.9,255.7 589.1,255.7 589.2,255.7 589.4,253.5 589.5,251.4 589.7,249.2 589.9,251.4 590.0,253.5 590.2,262.1 590.4,262.1 590.5,262.1 590.7,262.1 590.8,262.1 591.0,253.5 591.2,253.5 591.3,253.5 591.5,251.4 591.6,249.2 591.8,249.2 592.0,257.8 592.1,257.8 592.3,257.8 592.4,257.8 592.6,257.8 592.8,249.2 592.9,249.2 593.1,251.4 593.2,251.4 593.4,251.4 593.6,251.4 593.7,253.5 593.9,251.4 594.1,251.4 594.2,251.4 594.4,253.5 594.5,251.4 594.7,251.4 594.9,251.4 595.0,255.7 595.2,253.5 595.3,253.5 595.5,253.5 595.7,253.5 595.8,251.4 596.0,251.4 596.1,253.5 596.3,255.7 596.5,255.7 596.6,253.5 596.8,253.5 597.0,251.4 597.1,249.2 597.3,249.2 597.4,251.4 597.6,253.5 597.8,253.5 597.9,255.7 598.1,255.7 598.2,255.7 598.4,253.5 598.6,253.5 598.7,251.4 598.9,253.5 599.0,253.5 599.2,255.7 599.4,255.7 599.5,257.8 599.7,257.8 599.8,260.0 600.0,262.1 600.2,266.4 600.3,277.2 600.5,279.4 600.7,277.2 600.8,277.2 601.0,275.0 601.1,262.1 601.3,257.8 601.5,257.8 601.6,253.5 601.8,251.4 601.9,251.4 602.1,253.5 602.3,251.4 602.4,251.4 602.6,253.5 602.7,253.5 602.9,251.4 603.1,257.8 603.2,257.8 603.4,257.8 603.6,262.1 603.7,262.1 603.9,257.8 604.0,257.8 604.2,257.8 604.4,253.5 604.5,253.5 604.7,253.5 604.8,255.7 605.0,253.5 605.2,255.7 605.3,255.7 605.5,260.0 605.6,262.1 605.8,262.1 606.0,260.0 606.1,260.0 606.3,253.5 606.5,249.2 606.6,251.4 606.8,253.5 606.9,253.5 607.1,253.5 607.3,255.7 607.4,255.7 607.6,253.5 607.7,253.5 607.9,253.5 608.1,251.4 608.2,249.2 608.4,251.4 608.5,251.4 608.7,251.4 608.9,251.4 609.0,251.4 609.2,251.4 609.3,251.4 609.5,253.5 609.7,255.7 609.8,255.7 610.0,253.5 610.2,257.8 610.3,257.8 610.5,257.8 610.6,257.8 610.8,257.8 611.0,255.7 611.1,253.5 611.3,253.5 611.4,253.5 611.6,253.5 611.8,251.4 611.9,253.5 612.1,251.4 612.2,251.4 612.4,253.5 612.6,253.5 612.7,255.7 612.9,260.0 613.1,262.1 613.2,260.0 613.4,260.0 613.5,255.7 613.7,251.4 613.9,249.2 614.0,249.2 614.2,249.2 614.3,249.2 614.5,251.4 614.7,253.5 614.8,253.5 615.0,253.5 615.1,255.7 615.3,253.5 615.5,251.4 615.6,251.4 615.8,253.5 616.0,253.5 616.1,253.5 616.3,255.7 616.4,255.7 616.6,257.8 616.8,255.7 616.9,255.7 617.1,253.5 617.2,255.7 617.4,253.5 617.6,255.7 617.7,257.8 617.9,260.0 618.0,257.8 618.2,255.7 618.4,253.5 618.5,251.4 618.7,249.2 618.8,251.4 619.0,253.5 619.2,253.5 619.3,255.7 619.5,257.8 619.7,255.7 619.8,253.5 620.0,255.7 620.1,253.5 620.3,253.5 620.5,253.5 620.6,255.7 620.8,253.5 620.9,253.5 621.1,253.5 621.3,255.7 621.4,255.7 621.6,255.7 621.7,255.7 621.9,253.5 622.1,251.4 622.2,249.2 622.4,249.2 622.6,249.2 622.7,249.2 622.9,249.2 623.0,251.4 623.2,253.5 623.4,253.5 623.5,255.7 623.7,255.7 623.8,253.5 624.0,255.7 624.2,260.0 624.3,260.0 624.5,272.9 624.6,277.2 624.8,275.0 625.0,275.0 625.1,272.9 625.3,260.0 625.4,255.7 625.6,253.5 625.8,249.2 625.9,249.2 626.1,249.2 626.3,257.8 626.4,257.8 626.6,257.8 626.7,257.8 626.9,257.8 627.1,251.4 627.2,253.5 627.4,253.5 627.5,253.5 627.7,253.5 627.9,251.4 628.0,253.5 628.2,257.8 628.3,257.8 628.5,257.8 628.7,260.0 628.8,257.8 629.0,253.5 629.2,253.5 629.3,257.8 629.5,257.8 629.6,255.7 629.8,255.7 630.0,255.7 630.1,251.4 630.3,251.4 630.4,251.4 630.6,251.4 630.8,251.4 630.9,253.5 631.1,251.4 631.2,251.4 631.4,251.4 631.6,251.4 631.7,249.2 631.9,249.2 632.1,249.2 632.2,251.4 632.4,253.5 632.5,253.5 632.7,253.5 632.9,255.7 633.0,253.5 633.2,251.4 633.3,253.5 633.5,253.5 633.7,251.4 633.8,251.4 634.0,253.5 634.1,251.4 634.3,251.4 634.5,251.4 634.6,251.4 634.8,251.4 634.9,253.5 635.1,255.7 635.3,257.8 635.4,260.0 635.6,257.8 635.8,255.7 635.9,260.0 636.1,264.3 636.2,264.3 636.4,266.4 636.6,268.6 636.7,262.1 636.9,260.0 637.0,257.8 637.2,255.7 637.4,257.8 637.5,257.8 637.7,255.7 637.8,255.7 638.0,255.7 638.2,251.4 638.3,251.4 638.5,251.4 638.7,251.4 638.8,251.4 639.0,251.4 639.1,251.4 639.3,249.2 639.5,251.4 639.6,251.4 639.8,253.5 639.9,253.5 640.1,253.5 640.3,253.5 640.4,253.5 640.6,251.4 640.7,253.5 640.9,253.5 641.1,251.4 641.2,251.4 641.4,251.4 641.5,249.2 641.7,249.2 641.9,253.5 642.0,253.5 642.2,257.8 642.4,260.0 642.5,260.0 642.7,255.7 642.8,257.8 643.0,253.5 643.2,251.4 643.3,251.4 643.5,251.4 643.6,249.2 643.8,249.2 644.0,249.2 644.1,249.2 644.3,255.7 644.4,260.0 644.6,260.0 644.8,260.0 644.9,262.1 645.1,257.8 645.3,255.7 645.4,255.7 645.6,255.7 645.7,255.7 645.9,260.0 646.1,257.8 646.2,257.8 646.4,260.0 646.5,257.8 646.7,253.5 646.9,257.8 647.0,260.0 647.2,257.8 647.3,257.8 647.5,255.7 647.7,251.4 647.8,249.2 648.0,249.2 648.2,249.2 648.3,249.2 648.5,249.2 648.6,249.2 648.8,251.4 649.0,253.5 649.1,253.5 649.3,253.5 649.4,260.0 649.6,260.0 649.8,260.0 649.9,262.1 650.1,266.4 650.2,262.1 650.4,262.1 650.6,262.1 650.7,260.0 650.9,255.7 651.0,253.5 651.2,251.4 651.4,249.2 651.5,251.4 651.7,253.5 651.9,253.5 652.0,253.5 652.2,255.7 652.3,255.7 652.5,253.5 652.7,253.5 652.8,253.5 653.0,251.4 653.1,249.2 653.3,249.2 653.5,249.2 653.6,253.5 653.8,253.5 653.9,253.5 654.1,253.5 654.3,253.5 654.4,249.2 654.6,249.2 654.8,249.2 654.9,251.4 655.1,251.4 655.2,251.4 655.4,253.5 655.6,255.7 655.7,253.5 655.9,253.5 656.0,255.7 656.2,257.8 656.4,266.4 656.5,268.6 656.7,272.9 656.8,272.9 657.0,268.6 657.2,257.8 657.3,257.8 657.5,253.5 657.6,255.7 657.8,255.7 658.0,255.7 658.1,253.5 658.3,253.5 658.5,253.5 658.6,257.8 658.8,262.1 658.9,264.3 659.1,266.4 659.3,264.3 659.4,262.1 659.6,257.8 659.7,257.8 659.9,255.7 660.1,255.7 660.2,253.5 660.4,255.7 660.5,253.5 660.7,253.5 660.9,251.4 661.0,251.4 661.2,249.2 661.4,251.4 661.5,251.4 661.7,257.8 661.8,257.8 662.0,260.0 662.2,260.0 662.3,260.0 662.5,253.5 662.6,255.7 662.8,253.5 663.0,253.5 663.1,253.5 663.3,253.5 663.4,251.4 663.6,251.4 663.8,251.4 663.9,251.4 664.1,251.4 664.2,253.5 664.4,260.0 664.6,257.8 664.7,260.0 664.9,260.0 665.1,257.8 665.2,251.4 665.4,253.5 665.5,251.4 665.7,253.5 665.9,253.5 666.0,257.8 666.2,255.7 666.3,257.8 666.5,257.8 666.7,257.8 666.8,253.5 667.0,253.5 667.1,251.4 667.3,249.2 667.5,249.2 667.6,249.2 667.8,251.4 668.0,253.5 668.1,253.5 668.3,253.5 668.4,253.5 668.6,255.7 668.8,253.5 668.9,253.5 669.1,255.7 669.2,262.1 669.4,260.0 669.6,260.0 669.7,260.0 669.9,257.8 670.0,251.4 670.2,249.2 670.4,249.2 670.5,249.2 670.7,249.2 670.9,249.2 671.0,249.2 671.2,249.2 671.3,249.2 671.5,251.4 671.7,253.5 671.8,253.5 672.0,253.5 672.1,253.5 672.3,251.4 672.5,249.2 672.6,249.2 672.8,249.2 672.9,249.2 673.1,255.7 673.3,257.8 673.4,257.8 673.6,257.8 673.7,257.8 673.9,251.4 674.1,249.2 674.2,249.2 674.4,251.4 674.6,253.5 674.7,255.7 674.9,260.0 675.0,260.0 675.2,257.8 675.4,255.7 675.5,253.5 675.7,249.2 675.8,249.2 676.0,251.4 676.2,251.4 676.3,251.4 676.5,253.5 676.6,255.7 676.8,253.5 677.0,255.7 677.1,257.8 677.3,255.7 677.5,255.7 677.6,255.7 677.8,257.8 677.9,257.8 678.1,257.8 678.3,255.7 678.4,255.7 678.6,251.4 678.7,251.4 678.9,255.7 679.1,255.7 679.2,260.0 679.4,260.0 679.5,260.0 679.7,255.7 679.9,255.7 680.0,253.5 680.2,253.5 680.4,251.4 680.5,251.4 680.7,251.4 680.8,249.2 681.0,249.2 681.2,249.2 681.3,249.2 681.5,251.4 681.6,251.4 681.8,251.4 682.0,251.4 682.1,255.7 682.3,253.5 682.4,253.5 682.6,253.5 682.8,253.5 682.9,251.4 683.1,251.4 683.2,253.5 683.4,253.5 683.6,253.5 683.7,251.4 683.9,251.4 684.1,251.4 684.2,253.5 684.4,257.8 684.5,257.8 684.7,257.8 684.9,255.7 685.0,257.8 685.2,253.5 685.3,255.7 685.5,255.7 685.7,255.7 685.8,253.5 686.0,253.5 686.1,251.4 686.3,253.5 686.5,253.5 686.6,251.4 686.8,251.4 687.0,253.5 687.1,251.4 687.3,253.5 687.4,253.5 687.6,257.8 687.8,260.0 687.9,262.1 688.1,260.0 688.2,260.0 688.4,255.7 688.6,257.8 688.7,255.7 688.9,257.8 689.0,260.0 689.2,260.0 689.4,253.5 689.5,253.5 689.7,251.4 689.8,249.2 690.0,249.2 690.2,251.4 690.3,253.5 690.5,253.5 690.7,253.5 690.8,253.5 691.0,251.4 691.1,249.2 691.3,249.2 691.5,249.2 691.6,249.2 691.8,249.2 691.9,249.2 692.1,249.2 692.3,249.2 692.4,251.4 692.6,251.4 692.7,251.4 692.9,251.4 693.1,251.4 693.2,253.5 693.4,253.5 693.6,255.7 693.7,255.7 693.9,255.7 694.0,251.4 694.2,251.4 694.4,249.2 694.5,249.2 694.7,249.2 694.8,249.2 695.0,251.4 695.2,253.5 695.3,253.5 695.5,253.5 695.6,253.5 695.8,251.4 696.0,249.2 696.1,251.4 696.3,253.5 696.4,255.7 696.6,260.0 696.8,260.0 696.9,260.0 697.1,257.8 697.3,255.7 697.4,251.4 697.6,253.5 697.7,257.8 697.9,260.0 698.1,260.0 698.2,260.0 698.4,257.8 698.5,251.4 698.7,251.4 698.9,253.5 699.0,255.7 699.2,260.0 699.3,270.7 699.5,272.9 699.7,275.0 699.8,277.2 700.0,272.9 700.2,262.1 700.3,257.8 700.5,255.7 700.6,253.5 700.8,253.5 701.0,253.5 701.1,257.8 701.3,255.7 701.4,257.8 701.6,257.8 701.8,257.8 701.9,253.5 702.1,253.5 702.2,249.2 702.4,249.2 702.6,249.2 702.7,249.2 702.9,249.2 703.1,249.2 703.2,249.2 703.4,249.2 703.5,249.2 703.7,255.7 703.9,255.7 704.0,255.7 704.2,255.7 704.3,257.8 704.5,251.4 704.7,251.4 704.8,251.4 705.0,253.5 705.1,253.5 705.3,253.5 705.5,253.5 705.6,253.5 705.8,251.4 705.9,251.4 706.1,253.5 706.3,255.7 706.4,255.7 706.6,257.8 706.8,255.7 706.9,253.5 707.1,251.4 707.2,251.4 707.4,249.2 707.6,251.4 707.7,253.5 707.9,253.5 708.0,253.5 708.2,253.5 708.4,251.4 708.5,249.2 708.7,249.2 708.8,249.2 709.0,249.2 709.2,249.2 709.3,249.2 709.5,249.2 709.7,251.4 709.8,251.4 710.0,253.5 710.1,253.5 710.3,253.5 710.5,253.5 710.6,253.5 710.8,251.4 710.9,253.5 711.1,253.5 711.3,253.5 711.4,255.7 711.6,255.7 711.7,253.5 711.9,255.7 712.1,255.7 712.2,253.5 712.4,253.5 712.6,253.5 712.7,251.4 712.9,251.4 713.0,251.4 713.2,251.4 713.4,251.4 713.5,251.4 713.7,253.5 713.8,253.5 714.0,253.5 714.2,253.5 714.3,255.7 714.5,251.4 714.6,257.8 714.8,257.8 715.0,257.8 715.1,260.0 715.3,264.3 715.4,257.8 715.6,257.8 715.8,260.0 715.9,255.7 716.1,253.5 716.3,253.5 716.4,253.5 716.6,251.4 716.7,251.4 716.9,249.2 717.1,253.5 717.2,253.5 717.4,253.5 717.5,255.7 717.7,255.7 717.9,253.5 718.0,253.5 718.2,255.7 718.3,255.7 718.5,257.8 718.7,255.7 718.8,255.7 719.0,257.8 719.2,255.7 719.3,253.5 719.5,255.7 719.6,257.8 719.8,255.7 720.0,260.0 720.1,260.0 720.3,257.8 720.4,255.7 720.6,253.5 720.8,249.2 720.9,249.2 721.1,251.4 721.2,253.5 721.4,253.5 721.6,253.5 721.7,257.8 721.9,255.7 722.0,255.7 722.2,255.7 722.4,255.7 722.5,251.4 722.7,251.4 722.9,253.5 723.0,255.7 723.2,255.7 723.3,257.8 723.5,257.8 723.7,253.5 723.8,253.5 724.0,253.5 724.1,251.4 724.3,253.5 724.5,253.5 724.6,253.5 724.8,253.5 724.9,255.7 725.1,253.5 725.3,253.5 725.4,251.4 725.6,253.5 725.8,253.5 725.9,253.5 726.1,253.5 726.2,255.7 726.4,253.5 726.6,251.4 726.7,251.4 726.9,253.5 727.0,253.5 727.2,260.0 727.4,262.1 727.5,264.3 727.7,264.3 727.8,266.4 728.0,264.3 728.2,266.4 728.3,275.0 728.5,277.2 728.6,272.9 728.8,272.9 729.0,268.6 729.1,260.0 729.3,255.7 729.5,255.7 729.6,251.4 729.8,251.4 729.9,249.2 730.1,249.2 730.3,249.2 730.4,249.2 730.6,251.4 730.7,251.4 730.9,251.4 731.1,251.4 731.2,251.4 731.4,251.4 731.5,251.4 731.7,251.4 731.9,253.5 732.0,253.5 732.2,251.4 732.4,251.4 732.5,251.4 732.7,251.4 732.8,251.4 733.0,251.4 733.2,253.5 733.3,253.5 733.5,251.4 733.6,253.5 733.8,255.7 734.0,253.5 734.1,255.7 734.3,255.7 734.4,253.5 734.6,255.7 734.8,257.8 734.9,257.8 735.1,257.8 735.3,257.8 735.4,255.7 735.6,255.7 735.7,255.7 735.9,260.0 736.1,260.0 736.2,260.0 736.4,257.8 736.5,257.8 736.7,255.7 736.9,257.8 737.0,257.8 737.2,260.0 737.3,262.1 737.5,260.0 737.7,260.0 737.8,260.0 738.0,257.8 738.1,253.5 738.3,255.7 738.5,253.5 738.6,251.4 738.8,251.4 739.0,251.4 739.1,249.2 739.3,251.4 739.4,251.4 739.6,251.4 739.8,251.4 739.9,253.5 740.1,255.7 740.2,255.7 740.4,255.7 740.6,257.8 740.7,255.7 740.9,251.4 741.0,251.4 741.2,251.4 741.4,249.2 741.5,251.4 741.7,251.4 741.9,253.5 742.0,253.5 742.2,253.5 742.3,253.5 742.5,253.5 742.7,251.4 742.8,255.7 743.0,255.7 743.1,253.5 743.3,257.8 743.5,257.8 743.6,253.5 743.8,255.7 743.9,255.7 744.1,251.4 744.3,253.5 744.4,253.5 744.6,251.4 744.8,251.4 744.9,251.4 745.1,251.4 745.2,251.4 745.4,253.5 745.6,253.5 745.7,253.5 745.9,251.4 746.0,251.4 746.2,249.2 746.4,251.4 746.5,253.5 746.7,255.7 746.8,257.8 747.0,260.0 747.2,260.0 747.3,257.8 747.5,255.7 747.6,255.7 747.8,253.5 748.0,251.4 748.1,253.5 748.3,257.8 748.5,255.7 748.6,255.7 748.8,257.8 748.9,255.7 749.1,251.4 749.3,253.5 749.4,255.7 749.6,253.5 749.7,260.0 749.9,262.1 750.1,262.1 750.2,262.1 750.4,268.6 750.5,264.3 750.7,262.1 750.9,260.0 751.0,257.8 751.2,251.4 751.4,249.2 751.5,249.2 751.7,249.2 751.8,249.2 752.0,251.4 752.2,251.4 752.3,253.5 752.5,253.5 752.6,253.5 752.8,251.4 753.0,255.7 753.1,253.5 753.3,253.5 753.4,255.7 753.6,255.7 753.8,251.4 753.9,251.4 754.1,251.4 754.2,257.8 754.4,260.0 754.6,260.0 754.7,260.0 754.9,260.0 755.1,251.4 755.2,249.2 755.4,253.5 755.5,253.5 755.7,255.7 755.9,255.7 756.0,257.8 756.2,253.5 756.3,255.7 756.5,255.7 756.7,255.7 756.8,253.5 757.0,253.5 757.1,251.4 757.3,249.2 757.5,257.8 757.6,257.8 757.8,257.8 758.0,257.8 758.1,257.8 758.3,249.2 758.4,251.4 758.6,251.4 758.8,251.4 758.9,251.4 759.1,251.4 759.2,251.4 759.4,251.4 759.6,253.5 759.7,253.5 759.9,253.5 760.0,251.4 760.2,251.4 760.4,249.2 760.5,249.2 760.7,249.2 760.8,253.5 761.0,253.5 761.2,253.5 761.3,255.7 761.5,255.7 761.7,251.4 761.8,251.4 762.0,253.5 762.1,253.5 762.3,257.8 762.5,257.8 762.6,260.0 762.8,257.8 762.9,255.7 763.1,255.7 763.3,257.8 763.4,255.7 763.6,255.7 763.7,255.7 763.9,251.4 764.1,251.4 764.2,251.4 764.4,251.4 764.6,251.4 764.7,253.5 764.9,251.4 765.0,251.4 765.2,257.8 765.4,260.0 765.5,257.8 765.7,260.0 765.8,262.1 766.0,257.8 766.2,255.7 766.3,255.7 766.5,253.5 766.6,257.8 766.8,257.8 767.0,257.8 767.1,260.0 767.3,262.1 767.5,264.3 767.6,264.3 767.8,264.3 767.9,262.1 768.1,264.3 768.3,260.0 768.4,260.0 768.6,262.1 768.7,262.1 768.9,260.0 769.1,260.0 769.2,260.0 769.4,260.0 769.5,260.0 769.7,260.0 769.9,257.8 770.0,255.7 770.2,253.5 770.3,253.5 770.5,260.0 770.7,260.0 770.8,260.0 771.0,260.0 771.2,260.0 771.3,251.4 771.5,251.4 771.6,251.4 771.8,251.4 772.0,251.4 772.1,251.4 772.3,249.2 772.4,249.2 772.6,253.5 772.8,255.7 772.9,257.8 773.1,257.8 773.2,257.8 773.4,253.5 773.6,251.4 773.7,249.2 773.9,249.2 774.1,251.4 774.2,253.5 774.4,255.7 774.5,257.8 774.7,257.8 774.9,255.7 775.0,253.5 775.2,251.4 775.3,249.2 775.5,251.4 775.7,253.5 775.8,253.5 776.0,253.5 776.1,255.7 776.3,253.5 776.5,253.5 776.6,253.5 776.8,257.8 777.0,255.7 777.1,260.0 777.3,257.8 777.4,260.0 777.6,255.7 777.8,257.8 777.9,253.5 778.1,253.5 778.2,251.4 778.4,251.4 778.6,249.2 778.7,251.4 778.9,253.5 779.0,253.5 779.2,253.5 779.4,253.5 779.5,251.4 779.7,251.4 779.8,251.4 780.0,251.4 780.2,251.4 780.3,251.4 780.5,253.5 780.7,253.5 780.8,255.7 781.0,257.8 781.1,257.8 781.3,253.5 781.5,253.5 781.6,251.4 781.8,251.4 781.9,253.5 782.1,253.5 782.3,253.5 782.4,253.5 782.6,251.4 782.7,251.4 782.9,253.5 783.1,253.5 783.2,253.5 783.4,255.7 783.6,253.5 783.7,251.4 783.9,251.4 784.0,253.5 784.2,253.5 784.4,253.5 784.5,255.7 784.7,257.8 784.8,257.8 785.0,262.1 785.2,264.3 785.3,262.1 785.5,260.0 785.6,257.8 785.8,251.4 786.0,249.2 786.1,249.2 786.3,249.2 786.4,249.2 786.6,251.4 786.8,253.5 786.9,255.7 787.1,255.7 787.3,260.0 787.4,260.0 787.6,257.8 787.7,257.8 787.9,260.0 788.1,257.8 788.2,257.8 788.4,257.8 788.5,255.7 788.7,255.7 788.9,253.5 789.0,251.4 789.2,255.7 789.3,255.7 789.5,253.5 789.7,255.7 789.8,257.8 790.0,255.7 790.2,255.7 790.3,255.7 790.5,255.7 790.6,253.5 790.8,255.7 791.0,255.7 791.1,255.7 791.3,253.5 791.4,253.5 791.6,249.2 791.8,249.2 791.9,249.2 792.1,249.2 792.2,249.2 792.4,249.2 792.6,249.2 792.7,251.4 792.9,253.5 793.1,253.5 793.2,253.5 793.4,253.5 793.5,255.7 793.7,253.5 793.9,257.8 794.0,257.8 794.2,260.0 794.3,255.7 794.5,255.7 794.7,253.5 794.8,255.7 795.0,253.5 795.1,253.5 795.3,260.0 795.5,262.1 795.6,262.1 795.8,262.1 795.9,264.3 796.1,260.0 796.3,260.0 796.4,257.8 796.6,257.8 796.8,255.7 796.9,255.7 797.1,255.7 797.2,255.7 797.4,257.8 797.6,260.0 797.7,257.8 797.9,253.5 798.0,255.7 798.2,255.7 798.4,253.5 798.5,257.8 798.7,260.0 798.8,257.8 799.0,257.8 799.2,257.8 799.3,255.7 799.5,253.5 799.7,253.5 799.8,251.4 800.0,251.4 800.1,249.2 800.3,249.2 800.5,249.2 800.6,251.4 800.8,257.8 800.9,257.8 801.1,257.8 801.3,257.8 801.4,255.7 801.6,249.2 801.7,249.2 801.9,251.4 802.1,251.4 802.2,260.0 802.4,260.0 802.5,262.1 802.7,262.1 802.9,262.1 803.0,253.5 803.2,253.5 803.4,253.5 803.5,253.5 803.7,255.7 803.8,257.8 804.0,260.0 804.2,257.8 804.3,260.0 804.5,257.8 804.6,255.7 804.8,253.5 805.0,253.5 805.1,249.2 805.3,251.4 805.4,251.4 805.6,253.5 805.8,257.8 805.9,257.8 806.1,255.7 806.3,255.7 806.4,253.5 806.6,249.2 806.7,249.2 806.9,249.2 807.1,249.2 807.2,251.4 807.4,251.4 807.5,255.7 807.7,257.8 807.9,260.0 808.0,257.8 808.2,262.1 808.3,257.8 808.5,260.0 808.7,260.0 808.8,260.0 809.0,255.7 809.2,260.0 809.3,257.8 809.5,255.7 809.6,257.8 809.8,257.8 810.0,253.5 810.1,251.4 810.3,253.5 810.4,253.5 810.6,255.7 810.8,255.7 810.9,257.8 811.1,255.7 811.2,255.7 811.4,255.7 811.6,257.8 811.7,257.8 811.9,260.0 812.0,257.8 812.2,257.8 812.4,255.7 812.5,253.5 812.7,253.5 812.9,253.5 813.0,253.5 813.2,253.5 813.3,255.7 813.5,253.5 813.7,253.5 813.8,251.4 814.0,253.5 814.1,251.4 814.3,251.4 814.5,251.4 814.6,251.4 814.8,249.2 814.9,251.4 815.1,253.5 815.3,253.5 815.4,253.5 815.6,255.7 815.8,255.7 815.9,255.7 816.1,257.8 816.2,260.0 816.4,260.0 816.6,262.1 816.7,262.1 816.9,260.0 817.0,257.8 817.2,255.7 817.4,251.4 817.5,249.2 817.7,249.2 817.8,249.2 818.0,249.2 818.2,249.2 818.3,249.2 818.5,249.2 818.6,249.2 818.8,253.5 819.0,255.7 819.1,257.8 819.3,257.8 819.5,257.8 819.6,255.7 819.8,253.5 819.9,251.4 820.1,251.4 820.3,255.7 820.4,253.5 820.6,253.5 820.7,255.7 820.9,255.7 821.1,251.4 821.2,251.4 821.4,251.4 821.5,249.2 821.7,251.4 821.9,251.4 822.0,251.4 822.2,253.5 822.4,253.5 822.5,251.4 822.7,251.4 822.8,251.4 823.0,249.2 823.2,249.2 823.3,249.2 823.5,249.2 823.6,251.4 823.8,253.5 824.0,253.5 824.1,253.5 824.3,255.7 824.4,255.7 824.6,253.5 824.8,255.7 824.9,255.7 825.1,255.7 825.2,253.5 825.4,255.7 825.6,257.8 825.7,260.0 825.9,257.8 826.1,257.8 826.2,255.7 826.4,253.5 826.5,251.4 826.7,253.5 826.9,253.5 827.0,253.5 827.2,251.4 827.3,253.5 827.5,253.5 827.7,253.5 827.8,255.7 828.0,255.7 828.1,253.5 828.3,253.5 828.5,255.7 828.6,253.5 828.8,257.8 829.0,257.8 829.1,255.7 829.3,255.7 829.4,257.8 829.6,253.5 829.8,253.5 829.9,255.7 830.1,253.5 830.2,253.5 830.4,253.5 830.6,255.7 830.7,260.0 830.9,266.4 831.0,266.4 831.2,266.4 831.4,266.4 831.5,262.1 831.7,257.8 831.9,257.8 832.0,257.8 832.2,257.8 832.3,255.7 832.5,253.5 832.7,257.8 832.8,257.8 833.0,255.7 833.1,257.8 833.3,257.8 833.5,251.4 833.6,251.4 833.8,253.5 833.9,253.5 834.1,255.7 834.3,257.8 834.4,257.8 834.6,257.8 834.7,255.7 834.9,255.7 835.1,255.7 835.2,262.1 835.4,262.1 835.6,264.3 835.7,262.1 835.9,262.1 836.0,255.7 836.2,255.7 836.4,253.5 836.5,253.5 836.7,251.4 836.8,251.4 837.0,249.2 837.2,249.2 837.3,249.2 837.5,249.2 837.6,253.5 837.8,253.5 838.0,257.8 838.1,264.3 838.3,264.3 838.5,260.0 838.6,260.0 838.8,257.8 838.9,251.4 839.1,253.5 839.3,253.5 839.4,255.7 839.6,253.5 839.7,255.7 839.9,253.5 840.1,253.5 840.2,255.7 840.4,255.7 840.5,253.5 840.7,260.0 840.9,262.1 841.0,262.1 841.2,262.1 841.4,264.3 841.5,260.0 841.7,257.8 841.8,257.8 842.0,260.0 842.2,262.1 842.3,264.3 842.5,264.3 842.6,260.0 842.8,257.8 843.0,255.7 843.1,251.4 843.3,251.4 843.4,253.5 843.6,255.7 843.8,257.8 843.9,260.0 844.1,260.0 844.2,257.8 844.4,257.8 844.6,253.5 844.7,251.4 844.9,251.4 845.1,251.4 845.2,249.2 845.4,249.2 845.5,249.2 845.7,249.2 845.9,253.5 846.0,255.7 846.2,255.7 846.3,255.7 846.5,260.0 846.7,255.7 846.8,253.5 847.0,253.5 847.1,260.0 847.3,257.8 847.5,257.8 847.6,260.0 847.8,266.4 848.0,260.0 848.1,266.4 848.3,266.4 848.4,266.4 848.6,260.0 848.8,260.0 848.9,251.4 849.1,251.4 849.2,249.2 849.4,251.4 849.6,251.4 849.7,253.5 849.9,255.7 850.0,255.7 850.2,255.7 850.4,255.7 850.5,253.5 850.7,253.5 850.8,255.7 851.0,253.5 851.2,253.5 851.3,253.5 851.5,251.4 851.7,253.5 851.8,257.8 852.0,260.0 852.1,262.1 852.3,264.3 852.5,262.1 852.6,260.0 852.8,260.0 852.9,257.8 853.1,255.7 853.3,257.8 853.4,255.7 853.6,253.5 853.7,253.5 853.9,255.7 854.1,255.7 854.2,255.7 854.4,255.7 854.6,257.8 854.7,257.8 854.9,253.5 855.0,253.5 855.2,253.5 855.4,251.4 855.5,251.4 855.7,251.4 855.8,251.4 856.0,251.4 856.2,251.4 856.3,249.2 856.5,249.2 856.6,249.2 856.8,251.4 857.0,251.4 857.1,251.4 857.3,255.7 857.4,257.8 857.6,255.7 857.8,257.8 857.9,257.8 858.1,253.5 858.3,251.4 858.4,251.4 858.6,251.4 858.7,253.5 858.9,253.5 859.1,253.5 859.2,255.7 859.4,253.5 859.5,253.5 859.7,255.7 859.9,255.7 860.0,255.7 860.2,255.7 860.3,255.7 860.5,253.5 860.7,253.5 860.8,251.4 861.0,253.5 861.2,253.5 861.3,255.7 861.5,257.8 861.6,260.0 861.8,260.0 862.0,257.8 862.1,255.7 862.3,253.5 862.4,251.4 862.6,249.2 862.8,249.2 862.9,251.4 863.1,251.4 863.2,251.4 863.4,251.4 863.6,251.4 863.7,251.4 863.9,253.5 864.1,253.5 864.2,253.5 864.4,255.7 864.5,257.8 864.7,255.7 864.9,255.7 865.0,257.8 865.2,255.7 865.3,251.4"/>
<path d="M60.5 250V475" stroke="#4dbeee" stroke-width="1" shape-rendering="crispEdges"/>
<circle cx="60.5" cy="346" r="1.5" fill="#2fbaf0"/>
<circle cx="60.5" cy="360" r="1.5" fill="#2fbaf0"/>
<circle cx="60.5" cy="397" r="1.5" fill="#2fbaf0"/>
<circle cx="60.5" cy="432.5" r="1.5" fill="#2fbaf0"/>
<circle cx="60.5" cy="443" r="1.5" fill="#2fbaf0"/>
<circle cx="60.5" cy="475" r="1.5" fill="#2fbaf0"/>
<path d="M61 250V389" stroke="#1170c2" stroke-width="2"/>
<circle cx="60.8" cy="359" r="1.6" fill="#1170c2"/>
<circle cx="60.8" cy="363" r="1.6" fill="#1170c2"/>
<circle cx="60.8" cy="379" r="1.6" fill="#1170c2"/>
<circle cx="60.8" cy="389" r="1.6" fill="#1170c2"/>
<polyline fill="none" stroke="#f0ab18" stroke-width="0.7" stroke-opacity="0.8" marker-start="url(#my)" marker-mid="url(#my)" points="60.5,120.0 60.7,130.8 60.8,143.7 61.0,146.9 61.1,151.2 61.3,157.7 61.5,163.1 61.6,167.4 61.8,179.2 61.9,184.6 62.1,227.7 62.3,346.1 62.4,539.9 62.6,566.8 62.8,604.5 62.9,653.0 63.1,679.9 63.2,392.2 63.4,367.8 63.6,381.7 63.7,342.2 63.9,366.8 64.0,372.5 64.2,385.5 64.4,365.0 64.5,341.7 64.7,343.0 64.8,381.3 65.0,321.6 65.2,356.1 65.3,370.5 65.5,345.0 65.7,358.3 65.8,355.6 66.0,354.9 66.1,342.3 66.3,348.7 66.5,371.2 66.6,324.6 66.8,343.8 66.9,307.5 67.1,319.0 67.3,315.5 67.4,322.5 67.6,298.3 67.7,329.1 67.9,340.7 68.1,312.0 68.2,371.7 68.4,322.8 68.6,332.5"/>
<polyline fill="none" stroke="#f0ab18" stroke-width="3" points="68.6,332.5 68.7,330.8 68.9,329.1 69.0,327.5 69.2,325.9 69.4,324.3 69.5,322.7 69.7,321.2 69.8,319.7 70.0,318.2 70.2,316.8 70.3,315.4 70.5,314.0 70.6,312.6 70.8,311.2 71.0,309.9 71.1,308.5 71.3,307.2 71.4,306.0 71.6,304.7 71.8,303.4 71.9,302.2 72.1,301.0 72.3,299.8 72.4,299.2 72.6,298.7 72.7,298.1 72.9,297.6 73.1,297.0 73.2,296.5 73.4,296.0 73.5,295.5 73.7,295.0 73.9,294.4 74.0,293.9 74.2,293.4 74.3,293.0 74.5,292.5 74.7,292.0 74.8,291.5 75.0,291.1 75.2,290.6 75.3,290.1 75.5,289.7 75.6,289.2 75.8,288.8 76.0,288.4 76.1,287.9 76.3,287.5 76.4,287.1 76.6,286.6 76.8,286.2 76.9,285.8 77.1,285.5 77.2,285.3 77.4,285.0 77.6,284.8 77.7,284.5 77.9,284.3 78.0,284.0 78.2,283.8 78.4,283.5 78.5,283.3 78.7,283.0 78.9,282.8 79.0,282.6 79.2,282.3 79.3,282.1 79.5,281.9 79.7,281.6 79.8,281.4 80.0,281.2 80.1,281.0 80.3,280.7 80.5,280.5 80.6,280.3 80.8,280.1 80.9,279.9 81.1,279.7 81.3,279.4 81.4,279.2 81.6,279.0 81.8,278.8 81.9,278.6 82.1,278.4 82.2,278.2 82.4,278.0 82.6,277.8 82.7,277.6 82.9,277.4 83.0,277.2 83.2,277.0 83.4,276.8 83.5,276.7 83.7,276.5 83.8,276.3 84.0,276.1 84.2,275.9 84.3,275.7 84.5,275.5 84.6,275.4 84.8,275.2 85.0,275.0 85.1,274.8 85.3,274.6 85.5,274.5 85.6,274.3 85.8,274.1 85.9,273.9 86.1,273.8 86.3,273.6 86.4,273.4 86.6,273.3 86.7,273.1 86.9,273.0 87.1,272.9 87.2,272.7 87.4,272.6 87.5,272.4 87.7,272.3 87.9,272.2 88.0,272.0 88.2,271.9 88.4,271.8 88.5,271.6 88.7,271.5 88.8,271.4 89.0,271.2 89.2,271.1 89.3,271.0 89.5,270.8 89.6,270.7 89.8,270.6 90.0,270.4 90.1,270.3 90.3,270.2 90.4,270.1 90.6,269.9 90.8,269.8 90.9,269.7 91.1,269.6 91.3,269.5 91.4,269.3 91.6,269.2 91.7,269.1 91.9,269.0 92.1,268.9 92.2,268.7 92.4,268.6 92.5,268.5 92.7,268.4 92.9,268.3 93.0,268.1 93.2,268.0 93.3,267.9 93.5,267.8 93.7,267.7 93.8,267.6 94.0,267.5 94.1,267.4 94.3,267.2 94.5,267.1 94.6,267.0 94.8,266.9 95.0,266.8 95.1,266.7 95.3,266.6 95.4,266.5 95.6,266.4 95.8,266.3 95.9,266.2 96.1,266.1 96.2,266.0 96.4,265.8 96.6,265.7 96.7,265.6 96.9,265.5 97.0,265.4 97.2,265.3 97.4,265.2 97.5,265.1 97.7,265.0 97.9,264.9 98.0,264.9 98.2,264.8 98.3,264.8 98.5,264.7 98.7,264.7 98.8,264.6 99.0,264.6 99.1,264.5 99.3,264.5 99.5,264.4 99.6,264.4 99.8,264.3 100.1,264.2 100.8,264.0 101.4,263.8 102.0,263.6 102.7,263.4 103.3,263.3 104.0,263.1 104.6,262.9 105.3,262.7 105.9,262.5 106.5,262.4 107.2,262.2 107.8,262.0 108.5,261.9 109.1,261.7 109.8,261.6 110.4,261.5 111.1,261.4 111.7,261.3 112.3,261.2 113.0,261.1 113.6,261.0 114.3,260.9 114.9,260.8 115.6,260.7 116.2,260.6 116.8,260.5 117.5,260.4 118.1,260.3 118.8,260.2 119.4,260.2 120.1,260.1 120.7,260.0 121.4,259.9 122.0,259.8 122.6,259.7 123.3,259.7 123.9,259.6 124.6,259.5 125.2,259.4 125.9,259.3 126.5,259.3 127.2,259.2 127.8,259.1 128.4,259.0 129.1,259.0 129.7,258.9 130.4,258.8 131.0,258.7 131.7,258.7 132.3,258.6 133.0,258.5 133.6,258.5 134.2,258.4 134.9,258.3 135.5,258.3 136.2,258.2 136.8,258.2 137.5,258.1 138.1,258.1 138.7,258.0 139.4,258.0 140.0,258.0 140.7,257.9 141.3,257.9 142.0,257.8 142.6,257.8 143.3,257.7 143.9,257.7 144.5,257.6 145.2,257.6 145.8,257.6 146.5,257.5 147.1,257.5 147.8,257.4 148.4,257.4 149.0,257.4 149.7,257.3 150.3,257.3 151.0,257.2 151.6,257.2 152.3,257.2 152.9,257.1 153.6,257.1 154.2,257.0 154.8,257.0 155.5,257.0 156.1,256.9 156.8,256.9 157.4,256.9 158.1,256.8 158.7,256.8 159.4,256.7 160.0,256.7 160.6,256.7 161.3,256.7 161.9,256.7 162.6,256.7 163.2,256.6 163.9,256.6 164.5,256.6 165.2,256.6 165.8,256.6 166.4,256.6 167.1,256.5 167.7,256.5 168.4,256.5 169.0,256.5 169.7,256.5 170.3,256.5 170.9,256.4 171.6,256.4 172.2,256.4 172.9,256.4 173.5,256.4 174.2,256.4 174.8,256.4 175.5,256.3 176.1,256.3 176.7,256.3 177.4,256.3 178.0,256.3 178.7,256.3 179.3,256.2 180.0,256.2 180.6,256.2 181.2,256.2 181.9,256.2 182.5,256.2 183.2,256.2 183.8,256.1 184.5,256.1 185.1,256.1 185.8,256.1 186.4,256.1 187.0,256.1 187.7,256.1 188.3,256.1 189.0,256.0 189.6,256.0 190.3,256.0 190.9,256.0 191.6,256.0 192.2,256.0 192.8,256.0 193.5,255.9 194.1,255.9 194.8,255.9 195.4,255.9 196.1,255.9 196.7,255.9 196.9,255.9 197.0,256.7 197.4,256.7 198.0,256.7 198.6,256.7 199.3,256.7 199.9,256.7 200.6,256.7 201.2,256.7 201.9,256.7 202.5,256.7 203.1,256.7 203.8,256.7 204.4,256.7 205.1,256.7 205.7,256.7 206.4,256.7 207.0,256.7 207.7,256.7 208.3,256.7 208.9,256.7 209.6,256.7 210.2,256.7 210.9,256.7 211.5,256.7 212.2,256.7 212.8,256.7 213.4,256.7 214.1,256.7 214.7,256.7 215.4,256.7 216.0,256.7 216.7,256.7 217.3,256.7 218.0,256.7 218.6,256.7 219.2,256.7 219.9,256.7 220.5,256.7 221.2,256.7 221.8,256.7 222.5,256.7 223.1,256.7 223.8,256.7 224.4,256.7 225.0,256.7 225.7,256.7 226.3,256.7 227.0,256.7 227.6,256.7 228.3,256.7 228.9,256.7 229.6,256.7 230.2,256.7 230.8,256.7 231.5,256.7 232.1,256.7 232.8,256.7 233.4,256.7 234.1,256.7 234.7,256.7 235.3,256.7 236.0,256.7 236.6,256.7 237.3,256.7 237.9,256.7 238.6,256.7 239.2,256.7 239.9,256.7 240.5,256.7 241.1,256.7 241.8,256.7 242.4,256.7 243.1,256.7 243.7,256.7 244.4,256.7 245.0,256.7 245.6,256.7 246.3,256.7 246.9,256.7 247.6,256.7 248.2,256.7 248.9,256.7 249.5,256.7 250.2,256.7 250.8,256.7 251.4,256.7 252.1,256.7 252.7,256.7 253.4,256.7 254.0,256.7 254.7,256.7 255.3,256.7 256.0,256.7 256.6,256.7 257.2,256.7 257.4,256.7 257.6,255.7 257.9,255.7 258.5,255.7 259.2,255.7 259.8,255.7 260.5,255.7 261.1,255.7 261.8,255.7 262.4,255.7 263.0,255.7 263.7,255.7 264.3,255.7 265.0,255.7 265.6,255.7 266.3,255.7 266.9,255.7 267.5,255.7 268.2,255.7 268.8,255.7 269.5,255.7 270.1,255.7 270.8,255.7 271.4,255.7 272.1,255.7 272.7,255.7 273.3,255.7 274.0,255.7 274.6,255.7 275.3,255.7 275.9,255.7 276.6,255.7 277.2,255.7 277.8,255.7 278.5,255.7 279.1,255.7 279.8,255.7 280.4,255.7 281.1,255.7 281.7,255.7 282.4,255.7 283.0,255.7 283.6,255.7 284.3,255.7 284.9,255.7 285.6,255.7 286.2,255.7 286.9,255.7 287.5,255.7 288.2,255.7 288.8,255.7 289.4,255.7 290.1,255.7 290.7,255.7 291.4,255.7 292.0,255.7 292.7,255.7 293.3,255.7 294.0,255.7 294.6,255.7 295.2,255.7 295.9,255.7 296.5,255.7 297.2,255.7 297.8,255.7 298.5,255.7 299.1,255.7 299.7,255.7 300.4,255.7 301.0,255.7 301.7,255.7 302.3,255.7 303.0,255.7 303.6,255.7 304.3,255.7 304.9,255.7 305.5,255.7 306.2,255.7 306.8,255.7 307.5,255.7 308.1,255.7 308.8,255.7 309.4,255.7 310.0,255.7 310.7,255.7 311.3,255.7 312.0,255.7 312.6,255.7 313.3,255.7 313.9,255.7 314.6,255.7 315.2,255.7 315.8,255.7 316.5,255.7 317.1,255.7 317.8,255.7 318.4,255.7 319.1,255.7 319.7,255.7 320.4,255.7 321.0,255.7 321.6,255.7 322.3,255.7 322.9,255.7 323.6,255.7 324.2,255.7 324.9,255.7 325.5,255.7 326.2,255.7 326.8,255.7 327.4,255.7 328.1,255.7 328.7,255.7 329.4,255.7 330.0,255.7 330.7,255.7 331.3,255.7 331.9,255.7 332.6,255.7 333.2,255.7 333.9,255.7 334.5,255.7 335.2,255.7 335.8,255.7 336.5,255.7 337.1,255.7 337.7,255.7 338.4,255.7 339.0,255.7 339.7,255.7 340.3,255.7 341.0,255.7 341.6,255.7 342.2,255.7 342.9,255.7 343.5,255.7 344.2,255.7 344.8,255.7 345.5,255.7 346.1,255.7 346.8,255.7 347.4,255.7 348.0,255.7 348.7,255.7 349.3,255.7 350.0,255.7 350.6,255.7 351.3,255.7 351.9,255.7 352.6,255.7 353.2,255.7 353.8,255.7 354.5,255.7 355.1,255.7 355.8,255.7 356.4,255.7 357.1,255.7 357.7,255.7 358.4,255.7 359.0,255.7 359.6,255.7 360.3,255.7 360.9,255.7 361.6,255.7 362.2,255.7 362.9,255.7 363.5,255.7 364.1,255.7 364.8,255.7 365.4,255.7 366.1,255.7 366.7,255.7 367.4,255.7 368.0,255.7 368.7,255.7 369.3,255.7 369.9,255.7 370.1,255.7 370.3,254.6 370.6,254.6 371.2,254.6 371.9,254.6 372.5,254.6 373.2,254.6 373.8,254.6 374.4,254.6 375.1,254.6 375.7,254.6 376.4,254.6 377.0,254.6 377.7,254.6 378.3,254.6 379.0,254.6 379.6,254.6 380.2,254.6 380.9,254.6 381.5,254.6 382.2,254.6 382.8,254.6 383.5,254.6 384.1,254.6 384.8,254.6 385.4,254.6 386.0,254.6 386.7,254.6 387.3,254.6 388.0,254.6 388.6,254.6 389.3,254.6 389.9,254.6 390.6,254.6 391.2,254.6 391.8,254.6 392.5,254.6 393.1,254.6 393.8,254.6 394.4,254.6 395.1,254.6 395.7,254.6 396.3,254.6 397.0,254.6 397.6,254.6 398.3,254.6 398.9,254.6 399.6,254.6 400.2,254.6 400.9,254.6 401.5,254.6 402.1,254.6 402.8,254.6 403.4,254.6 404.1,254.6 404.7,254.6 405.4,254.6 406.0,254.6 406.7,254.6 407.3,254.6 407.9,254.6 408.6,254.6 409.2,254.6 409.9,254.6 410.5,254.6 411.2,254.6 411.8,254.6 412.4,254.6 413.1,254.6 413.7,254.6 414.4,254.6 415.0,254.6 415.7,254.6 416.3,254.6 417.0,254.6 417.6,254.6 418.2,254.6 418.9,254.6 419.5,254.6 420.2,254.6 420.8,254.6 421.5,254.6 422.1,254.6 422.8,254.6 423.4,254.6 424.0,254.6 424.7,254.6 425.3,254.6 426.0,254.6 426.6,254.6 427.3,254.6 427.9,254.6 428.5,254.6 429.2,254.6 429.8,254.6 430.5,254.6 431.1,254.6 431.8,254.6 432.4,254.6 433.1,254.6 433.7,254.6 434.3,254.6 435.0,254.6 435.6,254.6 436.3,254.6 436.9,254.6 437.6,254.6 438.2,254.6 438.8,254.6 439.5,254.6 440.1,254.6 440.8,254.6 441.4,254.6 442.1,254.6 442.7,254.6 443.4,254.6 444.0,254.6 444.6,254.6 445.3,254.6 445.9,254.6 446.6,254.6 447.2,254.6 447.9,254.6 448.5,254.6 449.2,254.6 449.8,254.6 450.4,254.6 451.1,254.6 451.7,254.6 452.4,254.6 453.0,254.6 453.7,254.6 454.3,254.6 455.0,254.6 455.6,254.6 456.2,254.6 456.9,254.6 457.5,254.6 458.2,254.6 458.8,254.6 459.5,254.6 460.1,254.6 460.7,254.6 461.4,254.6 462.0,254.6 462.7,254.6 463.3,254.6 464.0,254.6 464.6,254.6 465.3,254.6 465.9,254.6 466.5,254.6 467.2,254.6 467.8,254.6 468.5,254.6 469.1,254.6 469.8,254.6 470.4,254.6 471.0,254.6 471.7,254.6 472.3,254.6 473.0,254.6 473.6,254.6 474.3,254.6 474.9,254.6 475.6,254.6 476.2,254.6 476.8,254.6 477.5,254.6 478.1,254.6 478.8,254.6 479.4,254.6 480.1,254.6 480.7,254.6 481.4,254.6 482.0,254.6 482.6,254.6 483.3,254.6 483.9,254.6 484.6,254.6 485.2,254.6 485.9,254.6 486.5,254.6 487.2,254.6 487.8,254.6 488.4,254.6 489.1,254.6 489.7,254.6 490.4,254.6 491.0,254.6 491.7,254.6 492.3,254.6 492.9,254.6 493.6,254.6 494.2,254.6 494.9,254.6 495.5,254.6 496.2,254.6 496.8,254.6 497.5,254.6 498.1,254.6 498.7,254.6 499.4,254.6 500.0,254.6 500.7,254.6 501.3,254.6 502.0,254.6 502.6,254.6 503.2,254.6 503.9,254.6 504.5,254.6 505.2,254.6 505.8,254.6 506.5,254.6 507.1,254.6 507.8,254.6 508.4,254.6 508.6,254.6 508.7,253.5 509.0,253.5 509.7,253.5 510.3,253.5 511.0,253.5 511.6,253.5 512.3,253.5 512.9,253.5 513.6,253.5 514.2,253.5 514.8,253.5 515.5,253.5 516.1,253.5 516.8,253.5 517.4,253.5 518.1,253.5 518.7,253.5 519.4,253.5 520.0,253.5 520.6,253.5 521.3,253.5 521.9,253.5 522.6,253.5 523.2,253.5 523.9,253.5 524.5,253.5 525.1,253.5 525.8,253.5 526.4,253.5 527.1,253.5 527.7,253.5 528.4,253.5 529.0,253.5 529.7,253.5 530.3,253.5 530.9,253.5 531.6,253.5 532.2,253.5 532.9,253.5 533.5,253.5 534.2,253.5 534.8,253.5 535.4,253.5 536.1,253.5 536.7,253.5 537.4,253.5 538.0,253.5 538.7,253.5 539.3,253.5 540.0,253.5 540.6,253.5 541.2,253.5 541.9,253.5 542.5,253.5 543.2,253.5 543.8,253.5 544.5,253.5 545.1,253.5 545.8,253.5 546.4,253.5 547.0,253.5 547.7,253.5 548.3,253.5 549.0,253.5 549.6,253.5 550.3,253.5 550.9,253.5 551.6,253.5 552.2,253.5 552.8,253.5 553.5,253.5 554.1,253.5 554.8,253.5 555.4,253.5 556.1,253.5 556.7,253.5 557.3,253.5 558.0,253.5 558.6,253.5 559.3,253.5 559.9,253.5 560.6,253.5 561.2,253.5 561.9,253.5 562.5,253.5 563.1,253.5 563.8,253.5 564.4,253.5 565.1,253.5 565.7,253.5 566.4,253.5 567.0,253.5 567.7,253.5 568.3,253.5 568.9,253.5 569.6,253.5 570.2,253.5 570.9,253.5 571.5,253.5 572.2,253.5 572.8,253.5 573.4,253.5 574.1,253.5 574.7,253.5 575.4,253.5 576.0,253.5 576.7,253.5 577.3,253.5 578.0,253.5 578.6,253.5 579.2,253.5 579.9,253.5 580.5,253.5 581.2,253.5 581.8,253.5 582.5,253.5 583.1,253.5 583.8,253.5 584.4,253.5 585.0,253.5 585.7,253.5 586.3,253.5 587.0,253.5 587.6,253.5 588.3,253.5 588.9,253.5 589.5,253.5 590.2,253.5 590.8,253.5 591.5,253.5 592.1,253.5 592.8,253.5 593.4,253.5 594.1,253.5 594.7,253.5 595.3,253.5 596.0,253.5 596.6,253.5 597.3,253.5 597.9,253.5 598.6,253.5 599.2,253.5 599.8,253.5 600.5,253.5 601.1,253.5 601.8,253.5 602.4,253.5 603.1,253.5 603.7,253.5 604.4,253.5 605.0,253.5 605.6,253.5 606.3,253.5 606.9,253.5 607.6,253.5 608.2,253.5 608.9,253.5 609.5,253.5 610.2,253.5 610.8,253.5 611.4,253.5 612.1,253.5 612.7,253.5 613.4,253.5 614.0,253.5 614.7,253.5 615.3,253.5 616.0,253.5 616.6,253.5 617.2,253.5 617.9,253.5 618.5,253.5 619.2,253.5 619.8,253.5 620.5,253.5 621.1,253.5 621.7,253.5 622.4,253.5 623.0,253.5 623.7,253.5 624.3,253.5 625.0,253.5 625.6,253.5 626.3,253.5 626.9,253.5 627.5,253.5 628.2,253.5 628.8,253.5 629.5,253.5 630.1,253.5 630.8,253.5 631.4,253.5 632.1,253.5 632.7,253.5 633.3,253.5 634.0,253.5 634.6,253.5 635.3,253.5 635.9,253.5 636.6,253.5 637.2,253.5 637.8,253.5 638.5,253.5 639.1,253.5 639.8,253.5 640.4,253.5 641.1,253.5 641.7,253.5 642.4,253.5 643.0,253.5 643.6,253.5 644.3,253.5 644.9,253.5 645.6,253.5 646.2,253.5 646.9,253.5 647.5,253.5 648.2,253.5 648.8,253.5 649.4,253.5 650.1,253.5 650.7,253.5 651.4,253.5 652.0,253.5 652.7,253.5 653.3,253.5 653.9,253.5 654.6,253.5 655.2,253.5 655.9,253.5 656.5,253.5 657.2,253.5 657.8,253.5 658.5,253.5 659.1,253.5 659.7,253.5 660.4,253.5 661.0,253.5 661.7,253.5 662.3,253.5 663.0,253.5 663.6,253.5 664.2,253.5 664.9,253.5 665.5,253.5 666.2,253.5 666.8,253.5 667.5,253.5 668.1,253.5 668.8,253.5 669.4,253.5 670.0,253.5 670.7,253.5 671.3,253.5 672.0,253.5 672.6,253.5 673.3,253.5 673.9,253.5 674.6,253.5 675.2,253.5 675.8,253.5 676.5,253.5 677.1,253.5 677.8,253.5 678.4,253.5 679.1,253.5 679.7,253.5 680.4,253.5 681.0,253.5 681.6,253.5 682.3,253.5 682.9,253.5 683.6,253.5 684.2,253.5 684.9,253.5 685.5,253.5 686.1,253.5 686.8,253.5 687.4,253.5 688.1,253.5 688.7,253.5 689.4,253.5 690.0,253.5 690.7,253.5 691.3,253.5 691.9,253.5 692.6,253.5 693.2,253.5 693.9,253.5 694.5,253.5 695.2,253.5 695.8,253.5 696.4,253.5 697.1,253.5 697.7,253.5 698.4,253.5 699.0,253.5 699.7,253.5 700.3,253.5 701.0,253.5 701.6,253.5 702.2,253.5 702.9,253.5 703.5,253.5 704.2,253.5 704.8,253.5 705.5,253.5 706.1,253.5 706.8,253.5 707.4,253.5 708.0,253.5 708.7,253.5 709.3,253.5 710.0,253.5 710.6,253.5 711.3,253.5 711.9,253.5 712.6,253.5 713.2,253.5 713.8,253.5 714.5,253.5 715.1,253.5 715.8,253.5 716.4,253.5 717.1,253.5 717.7,253.5 718.3,253.5 719.0,253.5 719.6,253.5 720.3,253.5 720.9,253.5 721.6,253.5 722.2,253.5 722.9,253.5 723.5,253.5 724.1,253.5 724.8,253.5 725.4,253.5 726.1,253.5 726.7,253.5 727.4,253.5 728.0,253.5 728.6,253.5 729.3,253.5 729.9,253.5 730.6,253.5 731.2,253.5 731.9,253.5 732.5,253.5 733.2,253.5 733.8,253.5 734.4,253.5 735.1,253.5 735.7,253.5 736.4,253.5 737.0,253.5 737.7,253.5 738.3,253.5 739.0,253.5 739.6,253.5 740.2,253.5 740.9,253.5 741.5,253.5 742.2,253.5 742.8,253.5 743.5,253.5 744.1,253.5 744.8,253.5 745.4,253.5 746.0,253.5 746.7,253.5 747.3,253.5 748.0,253.5 748.6,253.5 749.3,253.5 749.9,253.5 750.5,253.5 751.2,253.5 751.8,253.5 752.5,253.5 753.1,253.5 753.8,253.5 754.4,253.5 755.1,253.5 755.7,253.5 756.3,253.5 757.0,253.5 757.6,253.5 758.3,253.5 758.9,253.5 759.6,253.5 760.2,253.5 760.8,253.5 761.5,253.5 762.1,253.5 762.8,253.5 763.4,253.5 764.1,253.5 764.7,253.5 765.4,253.5 766.0,253.5 766.6,253.5 767.3,253.5 767.9,253.5 768.6,253.5 769.2,253.5 769.9,253.5 770.5,253.5 771.2,253.5 771.8,253.5 772.4,253.5 773.1,253.5 773.7,253.5 774.4,253.5 775.0,253.5 775.7,253.5 776.3,253.5 777.0,253.5 777.6,253.5 778.2,253.5 778.9,253.5 779.5,253.5 780.2,253.5 780.8,253.5 781.5,253.5 782.1,253.5 782.7,253.5 783.4,253.5 784.0,253.5 784.7,253.5 785.3,253.5 786.0,253.5 786.6,253.5 787.3,253.5 787.9,253.5 788.5,253.5 789.2,253.5 789.8,253.5 790.5,253.5 791.1,253.5 791.8,253.5 792.4,253.5 793.1,253.5 793.7,253.5 794.3,253.5 795.0,253.5 795.6,253.5 796.3,253.5 796.9,253.5 797.6,253.5 798.2,253.5 798.8,253.5 799.5,253.5 800.1,253.5 800.8,253.5 801.4,253.5 802.1,253.5 802.7,253.5 803.4,253.5 804.0,253.5 804.6,253.5 805.3,253.5 805.9,253.5 806.6,253.5 807.2,253.5 807.9,253.5 808.5,253.5 809.2,253.5 809.8,253.5 810.4,253.5 811.1,253.5 811.7,253.5 812.4,253.5 813.0,253.5 813.7,253.5 814.3,253.5 814.9,253.5 815.6,253.5 816.2,253.5 816.9,253.5 817.5,253.5 818.2,253.5 818.8,253.5 819.5,253.5 820.1,253.5 820.7,253.5 821.4,253.5 822.0,253.5 822.7,253.5 823.3,253.5 824.0,253.5 824.6,253.5 825.2,253.5 825.9,253.5 826.5,253.5 827.2,253.5 827.8,253.5 828.5,253.5 829.1,253.5 829.8,253.5 830.4,253.5 831.0,253.5 831.7,253.5 832.3,253.5 833.0,253.5 833.6,253.5 834.3,253.5 834.4,252.2 834.9,252.2 835.6,252.2 836.2,252.2 836.8,252.2 837.5,252.2 838.1,252.2 838.8,252.2 839.4,252.2 840.1,252.2 840.7,252.2 841.4,252.2 842.0,252.2 842.6,252.2 843.3,252.2 843.9,252.2 844.6,252.2 845.2,252.2 845.9,252.2 846.5,252.2 847.1,252.2 847.8,252.2 848.4,252.2 849.1,252.2 849.7,252.2 850.4,252.2 851.0,252.2 851.7,252.2 852.3,252.2 852.9,252.2 853.6,252.2 854.2,252.2 854.9,252.2 855.5,252.2 856.2,252.2 856.8,252.2 857.4,252.2 858.1,252.2 858.7,252.2 859.4,252.2 860.0,252.2 860.7,252.2 861.3,252.2 862.0,252.2 862.6,252.2 863.2,252.2 863.9,252.2 864.5,252.2 865.2,252.2 865.3,252.2"/>
<g stroke="#dc0a8c" stroke-width="1.3" fill="none"><path d="M71.9 264.2h9M76.4 259.7v9M73.2 261.0l6.4 6.4M73.2 267.4l6.4-6.4"/><path d="M88.0 264.2h9M92.5 259.7v9M89.3 261.0l6.4 6.4M89.3 267.4l6.4-6.4"/><path d="M104.1 264.2h9M108.6 259.7v9M105.4 261.0l6.4 6.4M105.4 267.4l6.4-6.4"/><path d="M120.2 264.2h9M124.7 259.7v9M121.5 261.0l6.4 6.4M121.5 267.4l6.4-6.4"/><path d="M136.3 264.2h9M140.8 259.7v9M137.6 261.0l6.4 6.4M137.6 267.4l6.4-6.4"/><path d="M152.4 264.2h9M156.9 259.7v9M153.7 261.0l6.4 6.4M153.7 267.4l6.4-6.4"/><path d="M168.5 264.2h9M173.0 259.7v9M169.8 261.0l6.4 6.4M169.8 267.4l6.4-6.4"/><path d="M184.6 264.2h9M189.1 259.7v9M185.9 261.0l6.4 6.4M185.9 267.4l6.4-6.4"/><path d="M200.7 264.2h9M205.2 259.7v9M202.0 261.0l6.4 6.4M202.0 267.4l6.4-6.4"/><path d="M216.8 264.2h9M221.3 259.7v9M218.1 261.0l6.4 6.4M218.1 267.4l6.4-6.4"/><path d="M232.9 264.2h9M237.4 259.7v9M234.2 261.0l6.4 6.4M234.2 267.4l6.4-6.4"/><path d="M249.0 264.2h9M253.5 259.7v9M250.3 261.0l6.4 6.4M250.3 267.4l6.4-6.4"/><path d="M265.1 264.2h9M269.6 259.7v9M266.4 261.0l6.4 6.4M266.4 267.4l6.4-6.4"/><path d="M281.2 264.2h9M285.7 259.7v9M282.5 261.0l6.4 6.4M282.5 267.4l6.4-6.4"/><path d="M297.3 264.2h9M301.8 259.7v9M298.6 261.0l6.4 6.4M298.6 267.4l6.4-6.4"/><path d="M313.4 264.2h9M317.9 259.7v9M314.7 261.0l6.4 6.4M314.7 267.4l6.4-6.4"/><path d="M329.5 259.3h9M334.0 254.8v9M330.8 256.1l6.4 6.4M330.8 262.5l6.4-6.4"/><path d="M345.6 259.3h9M350.1 254.8v9M346.9 256.1l6.4 6.4M346.9 262.5l6.4-6.4"/><path d="M361.7 259.3h9M366.2 254.8v9M363.0 256.1l6.4 6.4M363.0 262.5l6.4-6.4"/><path d="M377.8 259.3h9M382.3 254.8v9M379.1 256.1l6.4 6.4M379.1 262.5l6.4-6.4"/><path d="M393.9 259.3h9M398.4 254.8v9M395.2 256.1l6.4 6.4M395.2 262.5l6.4-6.4"/><path d="M410.0 259.3h9M414.5 254.8v9M411.3 256.1l6.4 6.4M411.3 262.5l6.4-6.4"/><path d="M426.1 259.3h9M430.6 254.8v9M427.4 256.1l6.4 6.4M427.4 262.5l6.4-6.4"/><path d="M442.2 259.3h9M446.7 254.8v9M443.5 256.1l6.4 6.4M443.5 262.5l6.4-6.4"/><path d="M458.3 259.3h9M462.8 254.8v9M459.6 256.1l6.4 6.4M459.6 262.5l6.4-6.4"/><path d="M474.4 259.3h9M478.9 254.8v9M475.7 256.1l6.4 6.4M475.7 262.5l6.4-6.4"/><path d="M490.5 259.3h9M495.0 254.8v9M491.8 256.1l6.4 6.4M491.8 262.5l6.4-6.4"/><path d="M506.6 259.3h9M511.1 254.8v9M507.9 256.1l6.4 6.4M507.9 262.5l6.4-6.4"/><path d="M522.7 259.3h9M527.2 254.8v9M524.0 256.1l6.4 6.4M524.0 262.5l6.4-6.4"/><path d="M538.8 259.3h9M543.3 254.8v9M540.1 256.1l6.4 6.4M540.1 262.5l6.4-6.4"/><path d="M554.9 259.3h9M559.4 254.8v9M556.2 256.1l6.4 6.4M556.2 262.5l6.4-6.4"/><path d="M571.0 259.3h9M575.5 254.8v9M572.3 256.1l6.4 6.4M572.3 262.5l6.4-6.4"/><path d="M587.1 259.3h9M591.6 254.8v9M588.4 256.1l6.4 6.4M588.4 262.5l6.4-6.4"/><path d="M603.2 259.3h9M607.7 254.8v9M604.5 256.1l6.4 6.4M604.5 262.5l6.4-6.4"/><path d="M619.3 259.3h9M623.8 254.8v9M620.6 256.1l6.4 6.4M620.6 262.5l6.4-6.4"/><path d="M635.4 259.3h9M639.9 254.8v9M636.7 256.1l6.4 6.4M636.7 262.5l6.4-6.4"/><path d="M651.5 259.3h9M656.0 254.8v9M652.8 256.1l6.4 6.4M652.8 262.5l6.4-6.4"/><path d="M667.6 259.3h9M672.1 254.8v9M668.9 256.1l6.4 6.4M668.9 262.5l6.4-6.4"/><path d="M683.7 259.3h9M688.2 254.8v9M685.0 256.1l6.4 6.4M685.0 262.5l6.4-6.4"/><path d="M699.8 259.3h9M704.3 254.8v9M701.1 256.1l6.4 6.4M701.1 262.5l6.4-6.4"/><path d="M715.9 259.3h9M720.4 254.8v9M717.2 256.1l6.4 6.4M717.2 262.5l6.4-6.4"/><path d="M732.0 259.3h9M736.5 254.8v9M733.3 256.1l6.4 6.4M733.3 262.5l6.4-6.4"/><path d="M748.1 259.3h9M752.6 254.8v9M749.4 256.1l6.4 6.4M749.4 262.5l6.4-6.4"/><path d="M764.2 259.3h9M768.7 254.8v9M765.5 256.1l6.4 6.4M765.5 262.5l6.4-6.4"/><path d="M780.3 259.3h9M784.8 254.8v9M781.6 256.1l6.4 6.4M781.6 262.5l6.4-6.4"/><path d="M796.4 259.3h9M800.9 254.8v9M797.7 256.1l6.4 6.4M797.7 262.5l6.4-6.4"/><path d="M812.5 259.3h9M817.0 254.8v9M813.8 256.1l6.4 6.4M813.8 262.5l6.4-6.4"/><path d="M828.6 259.3h9M833.1 254.8v9M829.9 256.1l6.4 6.4M829.9 262.5l6.4-6.4"/><path d="M844.7 259.3h9M849.2 254.8v9M846.0 256.1l6.4 6.4M846.0 262.5l6.4-6.4"/><path d="M860.8 259.3h9M865.3 254.8v9M862.1 256.1l6.4 6.4M862.1 262.5l6.4-6.4"/></g>
</svg>
<!-- plot title & labels -->
<div class="t b" style="left:315.5px;top:102px;font-size:13.2px;line-height:15px;color:#262626">Episode reward for rlMDPEnv with rlLSPIAgent</div>
<div class="t" style="left:414px;top:784px;font-size:13px;line-height:15px;color:#262626">Episode Number</div>
<div class="t" style="left:20px;top:492px;font-size:13px;line-height:15px;color:#262626;transform-origin:0 0;transform:rotate(-90deg)">Episode Reward</div>
<div class="t" style="left:0;width:56px;text-align:right;top:113.0px;font-size:11.8px;color:#262626">0</div>
<div class="t" style="left:0;width:56px;text-align:right;top:220.7px;font-size:11.8px;color:#262626">-10</div>
<div class="t" style="left:0;width:56px;text-align:right;top:328.3px;font-size:11.8px;color:#262626">-20</div>
<div class="t" style="left:0;width:56px;text-align:right;top:436.0px;font-size:11.8px;color:#262626">-30</div>
<div class="t" style="left:0;width:56px;text-align:right;top:543.7px;font-size:11.8px;color:#262626">-40</div>
<div class="t" style="left:0;width:56px;text-align:right;top:651.4px;font-size:11.8px;color:#262626">-50</div>
<div class="t" style="left:0;width:56px;text-align:right;top:759.0px;font-size:11.8px;color:#262626">-60</div>
<div class="t" style="left:30.5px;width:61px;text-align:center;top:770px;font-size:11.8px;color:#262626">0</div>
<div class="t" style="left:111.0px;width:61px;text-align:center;top:770px;font-size:11.8px;color:#262626">500</div>
<div class="t" style="left:191.5px;width:61px;text-align:center;top:770px;font-size:11.8px;color:#262626">1000</div>
<div class="t" style="left:272.0px;width:61px;text-align:center;top:770px;font-size:11.8px;color:#262626">1500</div>
<div class="t" style="left:352.5px;width:61px;text-align:center;top:770px;font-size:11.8px;color:#262626">2000</div>
<div class="t" style="left:433.0px;width:61px;text-align:center;top:770px;font-size:11.8px;color:#262626">2500</div>
<div class="t" style="left:513.5px;width:61px;text-align:center;top:770px;font-size:11.8px;color:#262626">3000</div>
<div class="t" style="left:594.0px;width:61px;text-align:center;top:770px;font-size:11.8px;color:#262626">3500</div>
<div class="t" style="left:674.5px;width:61px;text-align:center;top:770px;font-size:11.8px;color:#262626">4000</div>
<div class="t" style="left:755.0px;width:61px;text-align:center;top:770px;font-size:11.8px;color:#262626">4500</div>
<div class="t" style="left:835.5px;width:61px;text-align:center;top:770px;font-size:11.8px;color:#262626">5000</div>
<!-- axes toolbar -->
<svg class="a" style="left:764px;top:98px" width="106" height="22" viewBox="0 0 106 22" fill="none" stroke="#585858" stroke-width="1">
 <path d="M4.5 12.5 V17.5 H17.5 V14.5" stroke="#8c8c8c"/>
 <path d="M6.5 15.5 C6.5 10.5 9 8.5 14.5 8.5 M8.5 15.5 C8.5 12 10.5 10.5 14.5 10.5 M14 5.5 L17.5 9.5 L14 13" stroke="#8c8c8c"/>
 <path d="M20.5 14.5 V18.5 H16.5 Z" fill="#7a7a7a" stroke="none"/>
 <path d="M28.5 18.5 L24.8 12 C24.2 10.8 25.6 9.8 26.5 10.8 L28.5 13 V6 C28.5 4.3 31.5 4.3 31.5 6 V10.5 M31.5 10.5 V4.5 C31.5 2.8 34.5 2.8 34.5 4.5 V10.5 M34.5 10.5 V5 C34.5 3.3 37.5 3.3 37.5 5 V10.5 M37.5 10.5 V7 C37.5 5.3 40.5 5.3 40.5 7 V13.5 C40.5 16 39.5 18.5 38 18.5 H28.5"/>
 <circle cx="50.5" cy="9.5" r="6.3"/><path d="M55 14 L59.5 18.5 M50.5 6 V13 M47 9.5 H54"/>
 <circle cx="70.5" cy="9.5" r="6.3"/><path d="M75 14 L79.5 18.5 M67 9.5 H74"/>
 <path d="M84.5 11 L92 3.5 L99.5 11 M86.5 9 V18.5 H90.5 V13.5 H93.5 V18.5 H97.5 V9"/>
 <path d="M96.5 4 L99.5 4 L99.5 7 Z" fill="#6a6a6a" stroke="none"/>
</svg>

</body></html>
